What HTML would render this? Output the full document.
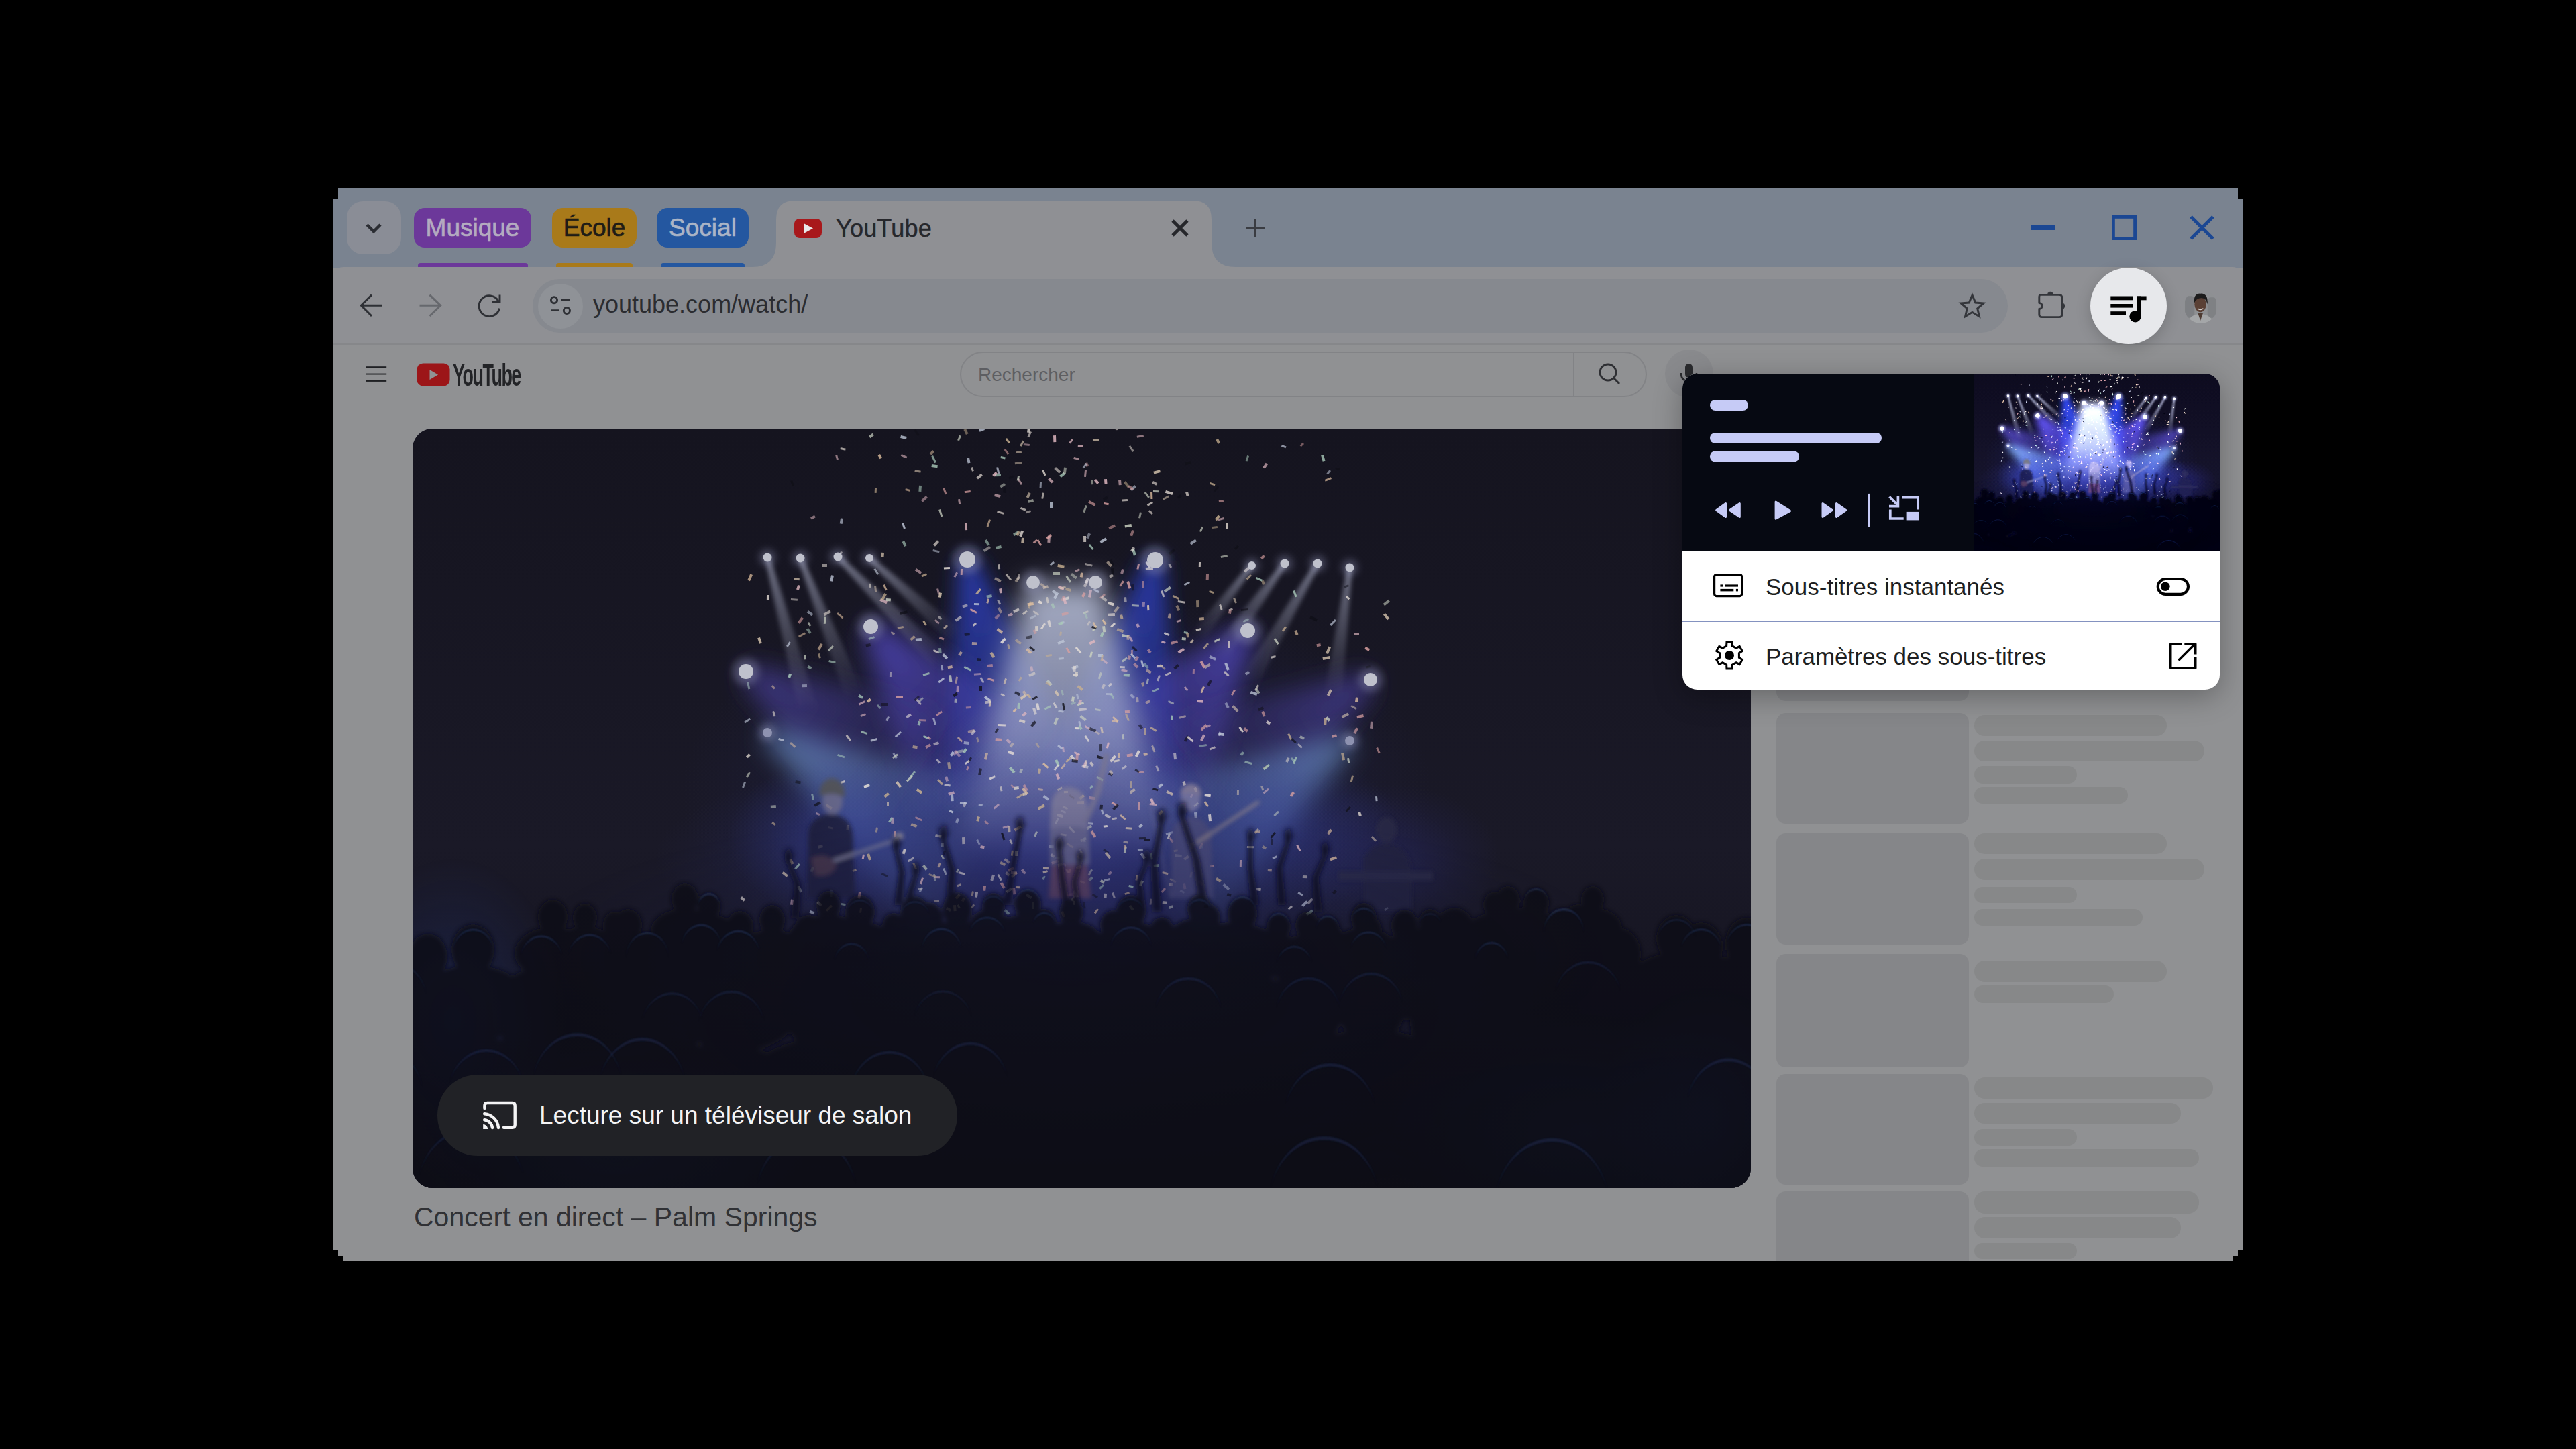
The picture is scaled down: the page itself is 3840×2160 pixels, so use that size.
<!DOCTYPE html>
<html><head><meta charset="utf-8">
<style>
*{margin:0;padding:0;box-sizing:border-box}
html,body{width:3840px;height:2160px;background:#000;overflow:hidden;font-family:"Liberation Sans",sans-serif}
.a{position:absolute}
.txt{white-space:nowrap}
#win{position:absolute;left:496px;top:280px;width:2848px;height:1600px;background:#909193;overflow:hidden;
clip-path:polygon(8px 0,2840px 0,2840px 16px,2848px 16px,2848px 1584px,2840px 1584px,2840px 1592px,2832px 1592px,2832px 1600px,16px 1600px,16px 1592px,8px 1592px,8px 1584px,0 1584px,0 16px,8px 16px)}
.chip{position:absolute;top:30px;height:59px;border-radius:16px;font-size:37px;line-height:59px;text-align:center;white-space:nowrap;-webkit-text-stroke:.7px currentColor}
.ul{position:absolute;top:112px;height:8px;border-radius:4px 4px 0 0}
.ln{left:2943px;background:#878889;border-radius:16px}
#popup{left:2508px;top:557px;width:801px;height:471px;border-radius:22px;overflow:hidden;background:#fff;box-shadow:0 10px 44px rgba(0,0,0,.3)}
</style></head><body>
<div id="win">
  <div class="a" style="left:0;top:0;width:2848px;height:120px;background:#7a8390">
    <div class="a" style="left:21px;top:20px;width:81px;height:79px;border-radius:24px;background:#8a8d96"></div>
    <div class="chip" style="left:121px;width:175px;background:#6c389a;color:#b4abc0">Musique</div>
    <div class="ul" style="left:127px;width:164px;background:#6c389a"></div>
    <div class="chip" style="left:327px;width:126px;background:#a97a1a;color:#1f1c16">École</div>
    <div class="ul" style="left:333px;width:114px;background:#a97a1a"></div>
    <div class="chip" style="left:483px;width:137px;background:#2457a0;color:#aab4c6">Social</div>
    <div class="ul" style="left:489px;width:125px;background:#2457a0"></div>
  </div>
  <div class="a" style="left:0;top:118px;width:2848px;height:115px;background:#8f9094;border-radius:16px 16px 0 0"></div>
  <div class="a" style="left:0;top:232px;width:2848px;height:1368px;background:#909193;border-top:2px solid #86878a"></div>
</div>
<!-- tab strip icons -->
<svg class="a" style="left:540px;top:325px" width="34" height="30" viewBox="0 0 34 30"><path d="M7 10 L17 20 L27 10" fill="none" stroke="#2b2d33" stroke-width="4.5"/></svg>
<div class="a tab" style="left:1121px;top:299px;width:721px;height:99px">
<svg width="721" height="99" viewBox="0 0 721 99"><path d="M0 99 Q36 99 36 63 L36 28 Q36 0 64 0 L657 0 Q685 0 685 28 L685 63 Q685 99 721 99 Z" fill="#8f9094"/></svg></div>
<svg class="a" style="left:1184px;top:326px" width="41" height="29" viewBox="0 0 41 29"><rect x="0" y="0" width="41" height="29" rx="8" fill="#a8181b"/><path d="M15 7.5 L28 14.5 L15 21.5Z" fill="#e9e9ea"/></svg>
<div class="a txt" style="left:1246px;top:323px;font-size:36px;line-height:36px;color:#26272b;letter-spacing:0.2px;-webkit-text-stroke:.5px currentColor">YouTube</div>
<svg class="a" style="left:1744px;top:325px" width="30" height="30" viewBox="0 0 30 30"><path d="M4 4 L26 26 M26 4 L4 26" stroke="#26272b" stroke-width="4.6"/></svg>
<svg class="a" style="left:1855px;top:324px" width="32" height="32" viewBox="0 0 32 32"><path d="M16 2 L16 30 M2 16 L30 16" stroke="#3a3c42" stroke-width="4"/></svg>
<svg class="a" style="left:3028px;top:336px" width="36" height="7"><rect width="36" height="7" fill="#1b4793"/></svg>
<svg class="a" style="left:3148px;top:321px" width="37" height="37" viewBox="0 0 37 37"><rect x="2.4" y="2.4" width="32.2" height="32.2" fill="none" stroke="#1b4793" stroke-width="4.8"/></svg>
<svg class="a" style="left:3264px;top:321px" width="37" height="37" viewBox="0 0 37 37"><path d="M2 2 L35 35 M35 2 L2 35" stroke="#1b4793" stroke-width="5"/></svg>
<!-- toolbar icons -->
<svg class="a" style="left:533px;top:437px" width="40" height="36" viewBox="0 0 40 36"><path d="M36.2 18.3 L5.5 18.3 M21 2.6 L5.3 18.3 L21 34" fill="none" stroke="#2e3035" stroke-width="2.9"/></svg>
<svg class="a" style="left:621px;top:437px" width="40" height="36" viewBox="0 0 40 36"><path d="M4.5 18.3 L35.5 18.3 M19.5 2.6 L35.7 18.3 L19.5 34" fill="none" stroke="#66686d" stroke-width="2.9"/></svg>
<svg class="a" style="left:709px;top:435px" width="40" height="40" viewBox="0 0 40 40"><path d="M35.5 24.6 A15.4 15.4 0 1 1 33.8 13.4" fill="none" stroke="#2e3035" stroke-width="2.9"/><path d="M36 4.6 L36 15.4 L24.8 15.4" fill="none" stroke="#2e3035" stroke-width="2.9"/></svg>
<div class="a" style="left:794px;top:416px;width:2199px;height:80px;border-radius:40px;background:#86898f"></div>
<div class="a" style="left:802px;top:423px;width:67px;height:67px;border-radius:50%;background:#8f9297"></div>
<svg class="a" style="left:818px;top:440px" width="36" height="32" viewBox="0 0 36 32"><circle cx="8" cy="7.2" r="4.6" fill="none" stroke="#2e3035" stroke-width="2.9"/><path d="M18.5 7.2 L31.8 7.2 M3 22.6 L15.7 22.6" stroke="#2e3035" stroke-width="2.9"/><circle cx="26.9" cy="23" r="4.6" fill="none" stroke="#2e3035" stroke-width="2.9"/></svg>
<div class="a txt" style="left:884px;top:436px;font-size:36px;line-height:36px;color:#2b2c30">youtube.com/watch/</div>
<svg class="a" style="left:2918px;top:434px" width="44" height="44" viewBox="0 0 24 24"><path d="M12 3.2 L14.6 9.3 L21.2 9.8 L16.2 14.1 L17.7 20.6 L12 17.1 L6.3 20.6 L7.8 14.1 L2.8 9.8 L9.4 9.3 Z" fill="none" stroke="#34363b" stroke-width="1.6" stroke-linejoin="miter"/></svg>
<svg class="a" style="left:3030px;top:428px" width="56" height="52" viewBox="0 0 56 52"><path d="M11.2 11.4 L39.6 11.4 Q43.8 11.4 43.8 15.6 L43.8 40.4 Q43.8 44.6 39.6 44.6 L14 44.6 Q9.8 44.6 9.8 40.4 L9.8 32.5 A4.5 4.5 0 0 0 9.8 23.5 L9.8 15.6 Q9.8 11.4 11.2 11.4Z" fill="none" stroke="#34363b" stroke-width="2.9" stroke-linejoin="round"/><path d="M21.9 11.4 A4.6 4.6 0 0 1 31.1 11.4Z" fill="#34363b"/><path d="M43.8 23.4 A4.6 4.6 0 0 1 43.8 32.6Z" fill="#34363b"/></svg>
<div class="a" style="left:3116px;top:399px;width:114px;height:114px;border-radius:50%;background:#e7e8eb;box-shadow:0 6px 22px rgba(0,0,0,.18)"></div>
<svg class="a" style="left:3140px;top:436px" width="66" height="52" viewBox="0 0 66 52"><rect x="6.3" y="5.5" width="33.2" height="5.8" fill="#000"/><rect x="6.3" y="17" width="33.2" height="5.6" fill="#000"/><rect x="6.3" y="28.2" width="22.7" height="5.8" fill="#000"/><rect x="45.6" y="5.5" width="14" height="5.8" fill="#000"/><rect x="45.6" y="5.5" width="5.8" height="31" fill="#000"/><circle cx="43" cy="35.7" r="8.7" fill="#000"/></svg>
<svg class="a" style="left:3255px;top:431px" width="51" height="51" viewBox="0 0 50 50"><defs><clipPath id="av"><circle cx="25.2" cy="25.2" r="24.6"/></clipPath><filter id="avb"><feGaussianBlur stdDeviation=".7"/></filter></defs><g clip-path="url(#av)" filter="url(#avb)"><rect width="50" height="50" fill="#8e9093"/><rect x="2" y="10" width="14" height="32" rx="5" fill="#7d7f83"/><rect x="35" y="12" width="13" height="30" rx="5" fill="#7f8184"/><path d="M5 52 Q8 37 24.5 36 Q41 37 45 52Z" fill="#a4a6a8"/><path d="M21 35 L24.6 46 L28.4 35Z" fill="#4e3a33"/><ellipse cx="24.6" cy="22" rx="8.6" ry="11.5" fill="#5a4036"/><path d="M15.5 21 Q14 6 25 6.5 Q36 6 35 22 Q33 13 26 13 Q18 13 15.5 21Z" fill="#1e1b1b"/><path d="M20.5 28.5 Q24.6 31.5 28.8 28.5 Q24.6 30 20.5 28.5Z" fill="#d8d4d2" stroke="#d8d4d2" stroke-width="1.2"/></g></svg>
<!-- content -->
<svg class="a" style="left:543px;top:544px" width="36" height="28"><rect x="2.2" y="2.2" width="31" height="1.9" fill="#1f2023"/><rect x="2.2" y="12.6" width="31" height="1.9" fill="#1f2023"/><rect x="2.2" y="23" width="31" height="1.9" fill="#1f2023"/></svg>
<svg class="a" style="left:621px;top:541px" width="50" height="35" viewBox="0 0 50 35"><rect x="0.5" y="0.5" width="49" height="34" rx="9" fill="#9c1518"/><path d="M19.5 10 L32 17.5 L19.5 25Z" fill="#909193"/></svg>
<div class="a txt" style="left:675px;top:536px;font-size:46px;line-height:46px;color:#232427;font-weight:bold;letter-spacing:-2.5px;transform:scaleX(.585);transform-origin:0 0">YouTube</div>
<div class="a" style="left:1431px;top:524px;width:1024px;height:68px;border-radius:34px;border:2px solid #828386"></div>
<div class="a" style="left:2345px;top:525px;width:2px;height:66px;background:#828386"></div>
<div class="a txt" style="left:1458px;top:545px;font-size:28px;line-height:28px;color:#5d5e62">Rechercher</div>
<svg class="a" style="left:2380px;top:538px" width="40" height="40" viewBox="0 0 40 40"><circle cx="17" cy="17" r="12" fill="none" stroke="#2e2f33" stroke-width="2.8"/><path d="M26 26 L34 34" stroke="#2e2f33" stroke-width="2.8"/></svg>
<div class="a" style="left:2482px;top:521px;width:72px;height:72px;border-radius:50%;background:#898a8d"></div>
<svg class="a" style="left:2500px;top:538px" width="36" height="40" viewBox="0 0 36 40"><rect x="12" y="4" width="11" height="21" rx="5.5" fill="#2a2b2e"/><path d="M6 18 Q6 30 17.5 30 Q29 30 29 18" fill="none" stroke="#2a2b2e" stroke-width="2.6"/></svg>
<div class="a" style="left:615px;top:639px;width:1995px;height:1132px;border-radius:30px;overflow:hidden;background:#15142a"><svg class="a" style="left:0;top:0" width="1995" height="1132" viewBox="0 0 1995 1132">
<defs><linearGradient id="bg" x1="0" y1="0" x2="0" y2="1"><stop offset="0" stop-color="#15141f"/><stop offset=".55" stop-color="#1a1927"/><stop offset=".8" stop-color="#151420"/><stop offset="1" stop-color="#111117"/></linearGradient>
<radialGradient id="rg" cx="0.5" cy="0.5" r="0.5"><stop offset="0" stop-color="#fff" stop-opacity="1"/><stop offset="1" stop-color="#fff" stop-opacity="0"/></radialGradient>
<filter id="b3" x="-50%" y="-50%" width="200%" height="200%"><feGaussianBlur stdDeviation="3"/></filter>
<filter id="b6" x="-50%" y="-50%" width="200%" height="200%"><feGaussianBlur stdDeviation="6"/></filter>
<filter id="b12" x="-50%" y="-50%" width="200%" height="200%"><feGaussianBlur stdDeviation="12"/></filter>
<filter id="b15" x="-50%" y="-50%" width="200%" height="200%"><feGaussianBlur stdDeviation="15"/></filter>
<filter id="b18" x="-50%" y="-50%" width="200%" height="200%"><feGaussianBlur stdDeviation="18"/></filter>
<filter id="b20" x="-50%" y="-50%" width="200%" height="200%"><feGaussianBlur stdDeviation="20"/></filter>
<filter id="b35" x="-50%" y="-50%" width="200%" height="200%"><feGaussianBlur stdDeviation="35"/></filter>
<filter id="b70" x="-50%" y="-50%" width="200%" height="200%"><feGaussianBlur stdDeviation="70"/></filter>
<filter id="b1" x="-50%" y="-50%" width="200%" height="200%"><feGaussianBlur stdDeviation="1"/></filter><radialGradient id="r1" cx="0.5" cy="0.5" r="0.5"><stop offset="0" stop-color="#2c2f80" stop-opacity="0.4"/><stop offset=".55" stop-color="#2c2f80" stop-opacity="0.180"/><stop offset="1" stop-color="#2c2f80" stop-opacity="0"/></radialGradient><radialGradient id="r2" cx="0.5" cy="0.5" r="0.5"><stop offset="0" stop-color="#3a43a0" stop-opacity="0.4"/><stop offset=".55" stop-color="#3a43a0" stop-opacity="0.180"/><stop offset="1" stop-color="#3a43a0" stop-opacity="0"/></radialGradient><linearGradient id="g3" gradientUnits="userSpaceOnUse" x1="827" y1="195" x2="900" y2="540"><stop offset="0" stop-color="#2c3eb8" stop-opacity="0.9"/><stop offset="1" stop-color="#2c3eb8" stop-opacity="0.25"/></linearGradient><linearGradient id="g4" gradientUnits="userSpaceOnUse" x1="1107" y1="196" x2="1040" y2="540"><stop offset="0" stop-color="#2c3eb8" stop-opacity="0.9"/><stop offset="1" stop-color="#2c3eb8" stop-opacity="0.25"/></linearGradient><linearGradient id="g5" gradientUnits="userSpaceOnUse" x1="683" y1="296" x2="860" y2="520"><stop offset="0" stop-color="#5248c0" stop-opacity="0.85"/><stop offset="1" stop-color="#5248c0" stop-opacity="0.15"/></linearGradient><linearGradient id="g6" gradientUnits="userSpaceOnUse" x1="1245" y1="301" x2="1070" y2="520"><stop offset="0" stop-color="#5248c0" stop-opacity="0.85"/><stop offset="1" stop-color="#5248c0" stop-opacity="0.15"/></linearGradient><linearGradient id="g7" gradientUnits="userSpaceOnUse" x1="497" y1="362" x2="740" y2="520"><stop offset="0" stop-color="#4e44a8" stop-opacity="0.7"/><stop offset="1" stop-color="#4e44a8" stop-opacity="0.08"/></linearGradient><linearGradient id="g8" gradientUnits="userSpaceOnUse" x1="1428" y1="374" x2="1190" y2="530"><stop offset="0" stop-color="#4e44a8" stop-opacity="0.7"/><stop offset="1" stop-color="#4e44a8" stop-opacity="0.08"/></linearGradient><linearGradient id="g9" gradientUnits="userSpaceOnUse" x1="529" y1="453" x2="830" y2="650"><stop offset="0" stop-color="#6a90c8" stop-opacity="0.7"/><stop offset="1" stop-color="#6a90c8" stop-opacity="0.12"/></linearGradient><linearGradient id="g10" gradientUnits="userSpaceOnUse" x1="1397" y1="465" x2="1110" y2="650"><stop offset="0" stop-color="#6a90c8" stop-opacity="0.7"/><stop offset="1" stop-color="#6a90c8" stop-opacity="0.12"/></linearGradient><linearGradient id="wc" x1="0" y1="0" x2="0" y2="1"><stop offset="0" stop-color="#c0c8e0" stop-opacity=".85"/><stop offset=".5" stop-color="#a8b0d0" stop-opacity=".7"/><stop offset="1" stop-color="#8088c0" stop-opacity=".35"/></linearGradient><radialGradient id="r12" cx="0.5" cy="0.5" r="0.5"><stop offset="0" stop-color="#8a90c0" stop-opacity="0.25"/><stop offset=".55" stop-color="#8a90c0" stop-opacity="0.113"/><stop offset="1" stop-color="#8a90c0" stop-opacity="0"/></radialGradient><linearGradient id="g13" gradientUnits="userSpaceOnUse" x1="529" y1="192" x2="590" y2="420"><stop offset="0" stop-color="#a8acc4" stop-opacity="0.6"/><stop offset="1" stop-color="#a8acc4" stop-opacity="0"/></linearGradient><linearGradient id="g14" gradientUnits="userSpaceOnUse" x1="578" y1="193" x2="660" y2="400"><stop offset="0" stop-color="#a8acc4" stop-opacity="0.6"/><stop offset="1" stop-color="#a8acc4" stop-opacity="0"/></linearGradient><linearGradient id="g15" gradientUnits="userSpaceOnUse" x1="634" y1="191" x2="790" y2="350"><stop offset="0" stop-color="#a8acc4" stop-opacity="0.6"/><stop offset="1" stop-color="#a8acc4" stop-opacity="0"/></linearGradient><linearGradient id="g16" gradientUnits="userSpaceOnUse" x1="681" y1="193" x2="810" y2="310"><stop offset="0" stop-color="#a8acc4" stop-opacity="0.6"/><stop offset="1" stop-color="#a8acc4" stop-opacity="0"/></linearGradient><linearGradient id="g17" gradientUnits="userSpaceOnUse" x1="1251" y1="204" x2="1170" y2="310"><stop offset="0" stop-color="#a8acc4" stop-opacity="0.6"/><stop offset="1" stop-color="#a8acc4" stop-opacity="0"/></linearGradient><linearGradient id="g18" gradientUnits="userSpaceOnUse" x1="1300" y1="201" x2="1200" y2="340"><stop offset="0" stop-color="#a8acc4" stop-opacity="0.6"/><stop offset="1" stop-color="#a8acc4" stop-opacity="0"/></linearGradient><linearGradient id="g19" gradientUnits="userSpaceOnUse" x1="1349" y1="201" x2="1245" y2="380"><stop offset="0" stop-color="#a8acc4" stop-opacity="0.6"/><stop offset="1" stop-color="#a8acc4" stop-opacity="0"/></linearGradient><linearGradient id="g20" gradientUnits="userSpaceOnUse" x1="1397" y1="207" x2="1372" y2="400"><stop offset="0" stop-color="#a8acc4" stop-opacity="0.6"/><stop offset="1" stop-color="#a8acc4" stop-opacity="0"/></linearGradient><radialGradient id="r21" cx="0.5" cy="0.5" r="0.5"><stop offset="0" stop-color="#343a90" stop-opacity="0.5"/><stop offset=".55" stop-color="#343a90" stop-opacity="0.225"/><stop offset="1" stop-color="#343a90" stop-opacity="0"/></radialGradient><radialGradient id="r22" cx="0.5" cy="0.5" r="0.5"><stop offset="0" stop-color="#3a46a8" stop-opacity="0.45"/><stop offset=".55" stop-color="#3a46a8" stop-opacity="0.203"/><stop offset="1" stop-color="#3a46a8" stop-opacity="0"/></radialGradient><radialGradient id="r23" cx="0.5" cy="0.5" r="0.5"><stop offset="0" stop-color="#3a46a8" stop-opacity="0.35"/><stop offset=".55" stop-color="#3a46a8" stop-opacity="0.158"/><stop offset="1" stop-color="#3a46a8" stop-opacity="0"/></radialGradient><radialGradient id="r24" cx="0.5" cy="0.5" r="0.5"><stop offset="0" stop-color="#2c2c78" stop-opacity="0.35"/><stop offset=".55" stop-color="#2c2c78" stop-opacity="0.158"/><stop offset="1" stop-color="#2c2c78" stop-opacity="0"/></radialGradient><linearGradient id="cb" x1="0" y1="0" x2="0" y2="1"><stop offset="0" stop-color="#202350" stop-opacity="0"/><stop offset=".15" stop-color="#202350" stop-opacity=".55"/><stop offset=".5" stop-color="#1a1c3a" stop-opacity=".5"/><stop offset="1" stop-color="#121220" stop-opacity=".3"/></linearGradient><radialGradient id="r26" cx="0.5" cy="0.5" r="0.5"><stop offset="0" stop-color="#202350" stop-opacity="0.55"/><stop offset=".55" stop-color="#202350" stop-opacity="0.248"/><stop offset="1" stop-color="#202350" stop-opacity="0"/></radialGradient><radialGradient id="r27" cx="0.5" cy="0.5" r="0.5"><stop offset="0" stop-color="#181a34" stop-opacity="0.35"/><stop offset=".55" stop-color="#181a34" stop-opacity="0.158"/><stop offset="1" stop-color="#181a34" stop-opacity="0"/></radialGradient><radialGradient id="r28" cx="0.5" cy="0.5" r="0.5"><stop offset="0" stop-color="#1e3a70" stop-opacity="0.35"/><stop offset=".55" stop-color="#1e3a70" stop-opacity="0.158"/><stop offset="1" stop-color="#1e3a70" stop-opacity="0"/></radialGradient><radialGradient id="r29" cx="0.5" cy="0.5" r="0.5"><stop offset="0" stop-color="#2a44a0" stop-opacity="0.3"/><stop offset=".55" stop-color="#2a44a0" stop-opacity="0.135"/><stop offset="1" stop-color="#2a44a0" stop-opacity="0"/></radialGradient><radialGradient id="r30" cx="0.5" cy="0.5" r="0.5"><stop offset="0" stop-color="#2a44a0" stop-opacity="0.25"/><stop offset=".55" stop-color="#2a44a0" stop-opacity="0.113"/><stop offset="1" stop-color="#2a44a0" stop-opacity="0"/></radialGradient><radialGradient id="r31" cx="0.5" cy="0.5" r="0.5"><stop offset="0" stop-color="#1e3a70" stop-opacity="0.3"/><stop offset=".55" stop-color="#1e3a70" stop-opacity="0.135"/><stop offset="1" stop-color="#1e3a70" stop-opacity="0"/></radialGradient></defs>
<g id="concert">
<rect width="1995" height="1132" fill="url(#bg)"/>
<ellipse cx="960" cy="540" rx="560" ry="300" fill="url(#r1)"/>
<ellipse cx="960" cy="620" rx="430" ry="160" fill="url(#r2)"/>
<polygon points="814.3,197.7 792.4,562.8 1007.6,517.2 839.7,192.3" fill="url(#g3)" filter="url(#b15)"/>
<polygon points="1094.2,193.5 932.0,519.0 1148.0,561.0 1119.8,198.5" fill="url(#g4)" filter="url(#b15)"/>
<polygon points="672.8,304.1 761.9,597.5 958.1,442.5 693.2,287.9" fill="url(#g5)" filter="url(#b18)"/>
<polygon points="1234.8,292.9 972.3,442.0 1167.7,598.0 1255.2,309.1" fill="url(#g6)" filter="url(#b18)"/>
<polygon points="490.5,372.1 677.3,616.4 802.7,423.6 503.5,351.9" fill="url(#g7)" filter="url(#b18)"/>
<polygon points="1421.4,364.0 1127.0,433.8 1253.0,626.2 1434.6,384.0" fill="url(#g8)" filter="url(#b18)"/>
<polygon points="523.0,462.2 761.5,754.6 898.5,545.4 535.0,443.8" fill="url(#g9)" filter="url(#b18)"/>
<polygon points="1391.0,455.8 1042.3,544.9 1177.7,755.1 1403.0,474.2" fill="url(#g10)" filter="url(#b18)"/>
<polygon points="915,232 1030,232 1130,620 815,620" fill="url(#wc)" filter="url(#b20)"/>
<ellipse cx="972" cy="520" rx="200" ry="160" fill="url(#r12)"/>
<polygon points="525.1,193.0 576.5,423.6 603.5,416.4 532.9,191.0" fill="url(#g13)" filter="url(#b3)"/>
<polygon points="574.3,194.5 647.0,405.2 673.0,394.8 581.7,191.5" fill="url(#g14)" filter="url(#b3)"/>
<polygon points="631.1,193.8 779.3,360.5 800.7,339.5 636.9,188.2" fill="url(#g15)" filter="url(#b3)"/>
<polygon points="678.3,196.0 801.3,319.6 818.7,300.4 683.7,190.0" fill="url(#g16)" filter="url(#b3)"/>
<polygon points="1247.8,201.6 1161.3,303.3 1178.7,316.7 1254.2,206.4" fill="url(#g17)" filter="url(#b3)"/>
<polygon points="1296.8,198.7 1188.6,331.8 1211.4,348.2 1303.2,203.3" fill="url(#g18)" filter="url(#b3)"/>
<polygon points="1345.5,199.0 1232.9,373.0 1257.1,387.0 1352.5,203.0" fill="url(#g19)" filter="url(#b3)"/>
<polygon points="1393.0,206.5 1359.1,398.3 1384.9,401.7 1401.0,207.5" fill="url(#g20)" filter="url(#b3)"/>
<ellipse cx="960" cy="640" rx="600" ry="170" fill="url(#r21)"/>
<ellipse cx="640" cy="610" rx="170" ry="120" fill="url(#r22)"/>
<ellipse cx="1300" cy="600" rx="170" ry="120" fill="url(#r23)"/>
<ellipse cx="1460" cy="640" rx="160" ry="110" fill="url(#r24)"/>
<rect x="1232" y="538" width="8" height="3" fill="#d9c7b0" opacity="0.53" transform="rotate(91 1232 538)"/>
<rect x="1096" y="487" width="6" height="4" fill="#e0c0a0" opacity="0.72" transform="rotate(171 1096 487)"/>
<rect x="1296" y="24" width="7" height="3" fill="#c0c8d8" opacity="0.70" transform="rotate(21 1296 24)"/>
<rect x="1006" y="497" width="10" height="4" fill="#e0b8c0" opacity="0.74" transform="rotate(111 1006 497)"/>
<rect x="1065" y="504" width="8" height="3" fill="#e8e0d8" opacity="0.53" transform="rotate(143 1065 504)"/>
<rect x="820" y="209" width="9" height="3" fill="#d8a0a0" opacity="0.76" transform="rotate(92 820 209)"/>
<rect x="1147" y="101" width="6" height="4" fill="#101018" opacity="0.78" transform="rotate(138 1147 101)"/>
<rect x="537" y="382" width="6" height="3" fill="#e0c0a0" opacity="0.52" transform="rotate(49 537 382)"/>
<rect x="974" y="501" width="9" height="3" fill="#e0c0a0" opacity="0.62" transform="rotate(129 974 501)"/>
<rect x="797" y="518" width="7" height="4" fill="#e0b8c0" opacity="0.53" transform="rotate(72 797 518)"/>
<rect x="972" y="318" width="10" height="4" fill="#c0c8d8" opacity="0.75" transform="rotate(156 972 318)"/>
<rect x="838" y="710" width="6" height="3" fill="#d9c7b0" opacity="0.67" transform="rotate(119 838 710)"/>
<rect x="1084" y="202" width="8" height="3" fill="#d8a0a0" opacity="0.74" transform="rotate(102 1084 202)"/>
<rect x="929" y="366" width="10" height="4" fill="#d8d0c8" opacity="0.64" transform="rotate(157 929 366)"/>
<rect x="893" y="530" width="6" height="3" fill="#d8a0a0" opacity="0.54" transform="rotate(38 893 530)"/>
<rect x="831" y="308" width="8" height="4" fill="#101018" opacity="0.63" transform="rotate(172 831 308)"/>
<rect x="1189" y="80" width="8" height="3" fill="#c8b090" opacity="0.76" transform="rotate(18 1189 80)"/>
<rect x="953" y="339" width="9" height="3" fill="#c8b090" opacity="0.55" transform="rotate(171 953 339)"/>
<rect x="1439" y="475" width="9" height="3" fill="#d8a0a0" opacity="0.62" transform="rotate(66 1439 475)"/>
<rect x="911" y="153" width="9" height="4" fill="#e8e0d8" opacity="0.78" transform="rotate(110 911 153)"/>
<rect x="1007" y="587" width="8" height="3" fill="#c0c8d8" opacity="0.67" transform="rotate(5 1007 587)"/>
<rect x="1204" y="131" width="8" height="4" fill="#c8b090" opacity="0.83" transform="rotate(130 1204 131)"/>
<rect x="1018" y="318" width="9" height="4" fill="#e0b8c0" opacity="0.82" transform="rotate(151 1018 318)"/>
<rect x="1118" y="241" width="10" height="3" fill="#e8e0d8" opacity="0.67" transform="rotate(70 1118 241)"/>
<rect x="787" y="120" width="11" height="3" fill="#c9d0c0" opacity="0.75" transform="rotate(72 787 120)"/>
<rect x="1339" y="279" width="11" height="4" fill="#101018" opacity="0.84" transform="rotate(26 1339 279)"/>
<rect x="993" y="485" width="11" height="4" fill="#d8a0a0" opacity="0.65" transform="rotate(95 993 485)"/>
<rect x="995" y="626" width="7" height="3" fill="#e8e0d8" opacity="0.77" transform="rotate(53 995 626)"/>
<rect x="1008" y="228" width="10" height="4" fill="#d8d0c8" opacity="0.65" transform="rotate(119 1008 228)"/>
<rect x="892" y="660" width="9" height="4" fill="#e0b8c0" opacity="0.77" transform="rotate(3 892 660)"/>
<rect x="1043" y="434" width="9" height="3" fill="#e0c0a0" opacity="0.68" transform="rotate(11 1043 434)"/>
<rect x="1072" y="395" width="7" height="4" fill="#c0c8d8" opacity="0.51" transform="rotate(45 1072 395)"/>
<rect x="1382" y="61" width="6" height="3" fill="#101018" opacity="0.68" transform="rotate(175 1382 61)"/>
<rect x="1054" y="496" width="9" height="3" fill="#d8d0c8" opacity="0.81" transform="rotate(169 1054 496)"/>
<rect x="1396" y="491" width="7" height="3" fill="#c9d0c0" opacity="0.73" transform="rotate(80 1396 491)"/>
<rect x="805" y="357" width="7" height="4" fill="#e0c0a0" opacity="0.73" transform="rotate(169 805 357)"/>
<rect x="1103" y="94" width="11" height="3" fill="#e0c0a0" opacity="0.79" transform="rotate(88 1103 94)"/>
<rect x="931" y="468" width="8" height="3" fill="#c8b090" opacity="0.51" transform="rotate(57 931 468)"/>
<rect x="801" y="209" width="9" height="3" fill="#e8e0d8" opacity="0.84" transform="rotate(177 801 209)"/>
<rect x="1258" y="221" width="10" height="3" fill="#a8c8b8" opacity="0.80" transform="rotate(23 1258 221)"/>
<rect x="718" y="483" width="9" height="3" fill="#c0c8d8" opacity="0.52" transform="rotate(59 718 483)"/>
<rect x="1131" y="238" width="11" height="4" fill="#c9d0c0" opacity="0.71" transform="rotate(144 1131 238)"/>
<rect x="1021" y="295" width="9" height="3" fill="#c9d0c0" opacity="0.84" transform="rotate(128 1021 295)"/>
<rect x="761" y="685" width="7" height="3" fill="#c0c8d8" opacity="0.62" transform="rotate(121 761 685)"/>
<rect x="751" y="208" width="10" height="4" fill="#e0b8c0" opacity="0.59" transform="rotate(34 751 208)"/>
<rect x="759" y="316" width="9" height="4" fill="#c0c8d8" opacity="0.74" transform="rotate(175 759 316)"/>
<rect x="681" y="633" width="10" height="4" fill="#c8b090" opacity="0.84" transform="rotate(73 681 633)"/>
<rect x="1151" y="525" width="6" height="4" fill="#d8d0c8" opacity="0.73" transform="rotate(69 1151 525)"/>
<rect x="790" y="352" width="8" height="3" fill="#c0c8d8" opacity="0.63" transform="rotate(80 790 352)"/>
<rect x="937" y="230" width="10" height="3" fill="#c8b090" opacity="0.63" transform="rotate(33 937 230)"/>
<rect x="1022" y="336" width="7" height="4" fill="#c0c8d8" opacity="0.79" transform="rotate(1 1022 336)"/>
<rect x="832" y="95" width="9" height="3" fill="#d8a0a0" opacity="0.73" transform="rotate(172 832 95)"/>
<rect x="1090" y="513" width="8" height="3" fill="#d8a0a0" opacity="0.60" transform="rotate(177 1090 513)"/>
<rect x="902" y="629" width="8" height="4" fill="#d8d0c8" opacity="0.76" transform="rotate(91 902 629)"/>
<rect x="684" y="405" width="6" height="4" fill="#e0c0a0" opacity="0.83" transform="rotate(144 684 405)"/>
<rect x="569" y="222" width="8" height="3" fill="#d9c7b0" opacity="0.72" transform="rotate(9 569 222)"/>
<rect x="504" y="487" width="6" height="4" fill="#d8d0c8" opacity="0.81" transform="rotate(135 504 487)"/>
<rect x="959" y="57" width="10" height="4" fill="#e8e0d8" opacity="0.58" transform="rotate(42 959 57)"/>
<rect x="693" y="464" width="10" height="3" fill="#c0c8d8" opacity="0.77" transform="rotate(164 693 464)"/>
<rect x="1085" y="440" width="7" height="4" fill="#101018" opacity="0.55" transform="rotate(55 1085 440)"/>
<rect x="1028" y="342" width="11" height="3" fill="#e0b8c0" opacity="0.60" transform="rotate(39 1028 342)"/>
<rect x="847" y="367" width="10" height="3" fill="#e0b8c0" opacity="0.51" transform="rotate(176 847 367)"/>
<rect x="990" y="325" width="11" height="3" fill="#e8e0d8" opacity="0.82" transform="rotate(48 990 325)"/>
<rect x="962" y="247" width="8" height="4" fill="#c0c8d8" opacity="0.81" transform="rotate(114 962 247)"/>
<rect x="778" y="667" width="8" height="3" fill="#e0b8c0" opacity="0.74" transform="rotate(1 778 667)"/>
<rect x="763" y="286" width="7" height="3" fill="#c8b090" opacity="0.79" transform="rotate(58 763 286)"/>
<rect x="1063" y="78" width="10" height="4" fill="#c8b090" opacity="0.52" transform="rotate(52 1063 78)"/>
<rect x="1450" y="275" width="10" height="4" fill="#d9c7b0" opacity="0.79" transform="rotate(51 1450 275)"/>
<rect x="1175" y="199" width="7" height="3" fill="#e8e0d8" opacity="0.77" transform="rotate(92 1175 199)"/>
<rect x="983" y="215" width="10" height="4" fill="#c9d0c0" opacity="0.52" transform="rotate(37 983 215)"/>
<rect x="723" y="525" width="10" height="4" fill="#d9c7b0" opacity="0.82" transform="rotate(52 723 525)"/>
<rect x="928" y="416" width="10" height="4" fill="#e8e0d8" opacity="0.61" transform="rotate(73 928 416)"/>
<rect x="1146" y="287" width="7" height="3" fill="#e0b8c0" opacity="0.69" transform="rotate(163 1146 287)"/>
<rect x="694" y="595" width="7" height="3" fill="#c8b090" opacity="0.58" transform="rotate(100 694 595)"/>
<rect x="1076" y="179" width="10" height="4" fill="#a8c8b8" opacity="0.76" transform="rotate(74 1076 179)"/>
<rect x="651" y="591" width="8" height="4" fill="#e8e0d8" opacity="0.53" transform="rotate(95 651 591)"/>
<rect x="969" y="536" width="8" height="3" fill="#d9c7b0" opacity="0.54" transform="rotate(147 969 536)"/>
<rect x="1176" y="300" width="8" height="3" fill="#d8d0c8" opacity="0.80" transform="rotate(167 1176 300)"/>
<rect x="768" y="103" width="10" height="4" fill="#e0b8c0" opacity="0.53" transform="rotate(138 768 103)"/>
<rect x="1292" y="572" width="9" height="3" fill="#c9d0c0" opacity="0.52" transform="rotate(137 1292 572)"/>
<rect x="886" y="373" width="8" height="3" fill="#d9c7b0" opacity="0.69" transform="rotate(108 886 373)"/>
<rect x="1060" y="365" width="9" height="4" fill="#a8c8b8" opacity="0.75" transform="rotate(5 1060 365)"/>
<rect x="814" y="459" width="9" height="3" fill="#e0c0a0" opacity="0.65" transform="rotate(46 814 459)"/>
<rect x="837" y="260" width="8" height="3" fill="#c0c8d8" opacity="0.76" transform="rotate(1 837 260)"/>
<rect x="605" y="704" width="8" height="4" fill="#e8e0d8" opacity="0.59" transform="rotate(42 605 704)"/>
<rect x="571" y="524" width="8" height="4" fill="#101018" opacity="0.55" transform="rotate(10 571 524)"/>
<rect x="639" y="707" width="7" height="3" fill="#a8c8b8" opacity="0.66" transform="rotate(11 639 707)"/>
<rect x="1092" y="259" width="7" height="4" fill="#e0b8c0" opacity="0.51" transform="rotate(94 1092 259)"/>
<rect x="1034" y="394" width="8" height="3" fill="#c0c8d8" opacity="0.53" transform="rotate(1 1034 394)"/>
<rect x="590" y="297" width="8" height="4" fill="#a8c8b8" opacity="0.53" transform="rotate(56 590 297)"/>
<rect x="813" y="482" width="8" height="3" fill="#e0b8c0" opacity="0.51" transform="rotate(133 813 482)"/>
<rect x="972" y="290" width="6" height="3" fill="#c0c8d8" opacity="0.57" transform="rotate(166 972 290)"/>
<rect x="908" y="36" width="8" height="3" fill="#d9c7b0" opacity="0.59" transform="rotate(172 908 36)"/>
<rect x="1368" y="343" width="11" height="4" fill="#d9c7b0" opacity="0.79" transform="rotate(170 1368 343)"/>
<rect x="973" y="68" width="8" height="4" fill="#a8c8b8" opacity="0.79" transform="rotate(142 973 68)"/>
<rect x="995" y="211" width="7" height="3" fill="#e0b8c0" opacity="0.63" transform="rotate(155 995 211)"/>
<rect x="968" y="303" width="6" height="3" fill="#c8b090" opacity="0.56" transform="rotate(99 968 303)"/>
<rect x="784" y="238" width="9" height="3" fill="#e0b8c0" opacity="0.56" transform="rotate(76 784 238)"/>
<rect x="1079" y="87" width="9" height="4" fill="#c0c8d8" opacity="0.60" transform="rotate(137 1079 87)"/>
<rect x="854" y="584" width="7" height="3" fill="#d8a0a0" opacity="0.60" transform="rotate(44 854 584)"/>
<rect x="963" y="234" width="9" height="4" fill="#e0b8c0" opacity="0.85" transform="rotate(18 963 234)"/>
<rect x="1115" y="65" width="10" height="4" fill="#d9c7b0" opacity="0.81" transform="rotate(165 1115 65)"/>
<rect x="1039" y="512" width="6" height="4" fill="#101018" opacity="0.59" transform="rotate(32 1039 512)"/>
<rect x="826" y="558" width="7" height="4" fill="#e8e0d8" opacity="0.51" transform="rotate(112 826 558)"/>
<rect x="1343" y="720" width="11" height="4" fill="#a8c8b8" opacity="0.74" transform="rotate(147 1343 720)"/>
<rect x="1058" y="306" width="10" height="4" fill="#c9d0c0" opacity="0.78" transform="rotate(11 1058 306)"/>
<rect x="827" y="478" width="7" height="4" fill="#a8c8b8" opacity="0.83" transform="rotate(120 827 478)"/>
<rect x="767" y="218" width="8" height="3" fill="#c8b090" opacity="0.73" transform="rotate(156 767 218)"/>
<rect x="837" y="690" width="7" height="3" fill="#c8b090" opacity="0.66" transform="rotate(104 837 690)"/>
<rect x="1021" y="487" width="9" height="4" fill="#101018" opacity="0.82" transform="rotate(16 1021 487)"/>
<rect x="1043" y="381" width="6" height="3" fill="#e8e0d8" opacity="0.61" transform="rotate(136 1043 381)"/>
<rect x="1090" y="675" width="8" height="4" fill="#c9d0c0" opacity="0.82" transform="rotate(115 1090 675)"/>
<rect x="1190" y="443" width="7" height="3" fill="#e0b8c0" opacity="0.56" transform="rotate(152 1190 443)"/>
<rect x="1321" y="469" width="8" height="3" fill="#e8e0d8" opacity="0.51" transform="rotate(44 1321 469)"/>
<rect x="1410" y="401" width="7" height="4" fill="#e0c0a0" opacity="0.77" transform="rotate(99 1410 401)"/>
<rect x="1074" y="330" width="8" height="3" fill="#d8a0a0" opacity="0.51" transform="rotate(91 1074 330)"/>
<rect x="1003" y="442" width="10" height="3" fill="#e0b8c0" opacity="0.64" transform="rotate(32 1003 442)"/>
<rect x="1371" y="390" width="10" height="4" fill="#d9c7b0" opacity="0.72" transform="rotate(118 1371 390)"/>
<rect x="1006" y="50" width="6" height="4" fill="#d8a0a0" opacity="0.51" transform="rotate(68 1006 50)"/>
<rect x="729" y="38" width="9" height="3" fill="#e0b8c0" opacity="0.60" transform="rotate(24 729 38)"/>
<rect x="815" y="582" width="7" height="4" fill="#c0c8d8" opacity="0.56" transform="rotate(110 815 582)"/>
<rect x="612" y="624" width="7" height="4" fill="#e8e0d8" opacity="0.71" transform="rotate(166 612 624)"/>
<rect x="1042" y="394" width="9" height="3" fill="#a8c8b8" opacity="0.56" transform="rotate(59 1042 394)"/>
<rect x="1197" y="476" width="9" height="3" fill="#d8d0c8" opacity="0.68" transform="rotate(157 1197 476)"/>
<rect x="961" y="493" width="10" height="4" fill="#a8c8b8" opacity="0.85" transform="rotate(67 961 493)"/>
<rect x="1262" y="598" width="8" height="3" fill="#d9c7b0" opacity="0.60" transform="rotate(134 1262 598)"/>
<rect x="1343" y="702" width="10" height="4" fill="#e8e0d8" opacity="0.55" transform="rotate(134 1343 702)"/>
<rect x="564" y="467" width="10" height="3" fill="#e0c0a0" opacity="0.52" transform="rotate(41 564 467)"/>
<rect x="884" y="30" width="9" height="3" fill="#d8a0a0" opacity="0.57" transform="rotate(54 884 30)"/>
<rect x="1241" y="445" width="7" height="4" fill="#d8a0a0" opacity="0.66" transform="rotate(44 1241 445)"/>
<rect x="911" y="546" width="11" height="3" fill="#c8b090" opacity="0.71" transform="rotate(148 911 546)"/>
<rect x="1400" y="412" width="9" height="3" fill="#d9c7b0" opacity="0.52" transform="rotate(30 1400 412)"/>
<rect x="1354" y="324" width="6" height="4" fill="#d8a0a0" opacity="0.64" transform="rotate(169 1354 324)"/>
<rect x="1115" y="368" width="9" height="3" fill="#d8d0c8" opacity="0.61" transform="rotate(110 1115 368)"/>
<rect x="1043" y="662" width="6" height="4" fill="#e0b8c0" opacity="0.53" transform="rotate(134 1043 662)"/>
<rect x="593" y="718" width="7" height="4" fill="#c0c8d8" opacity="0.75" transform="rotate(22 593 718)"/>
<rect x="641" y="184" width="9" height="3" fill="#e8e0d8" opacity="0.53" transform="rotate(116 641 184)"/>
<rect x="1130" y="670" width="10" height="3" fill="#c8b090" opacity="0.57" transform="rotate(29 1130 670)"/>
<rect x="624" y="274" width="11" height="4" fill="#d8d0c8" opacity="0.66" transform="rotate(151 624 274)"/>
<rect x="1287" y="603" width="10" height="3" fill="#101018" opacity="0.81" transform="rotate(130 1287 603)"/>
<rect x="830" y="504" width="6" height="3" fill="#d8a0a0" opacity="0.62" transform="rotate(112 830 504)"/>
<rect x="906" y="222" width="9" height="4" fill="#d9c7b0" opacity="0.52" transform="rotate(125 906 222)"/>
<rect x="1179" y="625" width="6" height="4" fill="#a8c8b8" opacity="0.54" transform="rotate(165 1179 625)"/>
<rect x="507" y="218" width="10" height="4" fill="#e0c0a0" opacity="0.72" transform="rotate(114 507 218)"/>
<rect x="843" y="612" width="8" height="3" fill="#c0c8d8" opacity="0.52" transform="rotate(63 843 612)"/>
<rect x="806" y="545" width="10" height="4" fill="#c0c8d8" opacity="0.72" transform="rotate(86 806 545)"/>
<rect x="997" y="427" width="10" height="4" fill="#c9d0c0" opacity="0.70" transform="rotate(39 997 427)"/>
<rect x="746" y="472" width="7" height="4" fill="#c8b090" opacity="0.67" transform="rotate(10 746 472)"/>
<rect x="1077" y="349" width="8" height="4" fill="#d8a0a0" opacity="0.60" transform="rotate(47 1077 349)"/>
<rect x="1179" y="147" width="8" height="3" fill="#c9d0c0" opacity="0.67" transform="rotate(115 1179 147)"/>
<rect x="1134" y="714" width="6" height="4" fill="#c9d0c0" opacity="0.65" transform="rotate(161 1134 714)"/>
<rect x="1095" y="358" width="8" height="4" fill="#e0c0a0" opacity="0.58" transform="rotate(31 1095 358)"/>
<rect x="976" y="326" width="9" height="3" fill="#d8a0a0" opacity="0.80" transform="rotate(59 976 326)"/>
<rect x="564" y="319" width="8" height="3" fill="#c0c8d8" opacity="0.70" transform="rotate(124 564 319)"/>
<rect x="1076" y="82" width="7" height="3" fill="#101018" opacity="0.55" transform="rotate(127 1076 82)"/>
<rect x="848" y="370" width="9" height="3" fill="#e8e0d8" opacity="0.59" transform="rotate(59 848 370)"/>
<rect x="1145" y="687" width="7" height="3" fill="#c0c8d8" opacity="0.76" transform="rotate(27 1145 687)"/>
<rect x="1267" y="532" width="7" height="3" fill="#d9c7b0" opacity="0.50" transform="rotate(70 1267 532)"/>
<rect x="1165" y="316" width="6" height="3" fill="#d9c7b0" opacity="0.76" transform="rotate(133 1165 316)"/>
<rect x="941" y="498" width="10" height="3" fill="#e0c0a0" opacity="0.81" transform="rotate(41 941 498)"/>
<rect x="1182" y="555" width="9" height="3" fill="#e0c0a0" opacity="0.75" transform="rotate(56 1182 555)"/>
<rect x="675" y="408" width="10" height="3" fill="#e0b8c0" opacity="0.66" transform="rotate(153 675 408)"/>
<rect x="1103" y="551" width="9" height="4" fill="#e0b8c0" opacity="0.82" transform="rotate(70 1103 551)"/>
<rect x="900" y="313" width="10" height="4" fill="#c8b090" opacity="0.54" transform="rotate(36 900 313)"/>
<rect x="906" y="409" width="9" height="4" fill="#a8c8b8" opacity="0.76" transform="rotate(94 906 409)"/>
<rect x="683" y="324" width="7" height="4" fill="#101018" opacity="0.62" transform="rotate(168 683 324)"/>
<rect x="1214" y="408" width="8" height="4" fill="#c0c8d8" opacity="0.54" transform="rotate(63 1214 408)"/>
<rect x="986" y="696" width="11" height="4" fill="#e0b8c0" opacity="0.57" transform="rotate(173 986 696)"/>
<rect x="1069" y="84" width="8" height="4" fill="#d8a0a0" opacity="0.62" transform="rotate(41 1069 84)"/>
<rect x="648" y="456" width="10" height="3" fill="#d8d0c8" opacity="0.73" transform="rotate(53 648 456)"/>
<rect x="1001" y="559" width="10" height="4" fill="#e0c0a0" opacity="0.57" transform="rotate(177 1001 559)"/>
<rect x="823" y="-8" width="7" height="3" fill="#e0b8c0" opacity="0.67" transform="rotate(54 823 -8)"/>
<rect x="1082" y="666" width="8" height="3" fill="#c8b090" opacity="0.77" transform="rotate(102 1082 666)"/>
<rect x="1104" y="92" width="9" height="3" fill="#c9d0c0" opacity="0.73" transform="rotate(2 1104 92)"/>
<rect x="1008" y="274" width="8" height="3" fill="#d8d0c8" opacity="0.56" transform="rotate(163 1008 274)"/>
<rect x="1378" y="641" width="10" height="4" fill="#e0c0a0" opacity="0.79" transform="rotate(161 1378 641)"/>
<rect x="642" y="134" width="8" height="4" fill="#c0c8d8" opacity="0.65" transform="rotate(100 642 134)"/>
<rect x="889" y="594" width="9" height="3" fill="#e0b8c0" opacity="0.59" transform="rotate(163 889 594)"/>
<rect x="954" y="110" width="8" height="4" fill="#c0c8d8" opacity="0.79" transform="rotate(90 954 110)"/>
<rect x="824" y="700" width="6" height="4" fill="#d9c7b0" opacity="0.51" transform="rotate(115 824 700)"/>
<rect x="1329" y="23" width="6" height="3" fill="#d8a0a0" opacity="0.51" transform="rotate(136 1329 23)"/>
<rect x="962" y="514" width="8" height="4" fill="#e0b8c0" opacity="0.77" transform="rotate(66 962 514)"/>
<rect x="918" y="395" width="7" height="3" fill="#c8b090" opacity="0.79" transform="rotate(52 918 395)"/>
<rect x="1180" y="285" width="7" height="4" fill="#e0c0a0" opacity="0.67" transform="rotate(175 1180 285)"/>
<rect x="1413" y="571" width="6" height="4" fill="#d8d0c8" opacity="0.81" transform="rotate(72 1413 571)"/>
<rect x="1428" y="356" width="6" height="3" fill="#101018" opacity="0.77" transform="rotate(166 1428 356)"/>
<rect x="778" y="34" width="7" height="4" fill="#e0c0a0" opacity="0.53" transform="rotate(124 778 34)"/>
<rect x="912" y="19" width="9" height="3" fill="#d9c7b0" opacity="0.65" transform="rotate(119 912 19)"/>
<rect x="1369" y="63" width="7" height="3" fill="#c0c8d8" opacity="0.56" transform="rotate(128 1369 63)"/>
<rect x="1006" y="494" width="9" height="4" fill="#d8d0c8" opacity="0.51" transform="rotate(90 1006 494)"/>
<rect x="566" y="77" width="8" height="3" fill="#101018" opacity="0.85" transform="rotate(70 566 77)"/>
<rect x="720" y="600" width="9" height="3" fill="#d8a0a0" opacity="0.72" transform="rotate(85 720 600)"/>
<rect x="1438" y="548" width="7" height="3" fill="#c0c8d8" opacity="0.75" transform="rotate(85 1438 548)"/>
<rect x="932" y="167" width="7" height="3" fill="#d8a0a0" opacity="0.76" transform="rotate(139 932 167)"/>
<rect x="909" y="52" width="11" height="3" fill="#d9c7b0" opacity="0.50" transform="rotate(174 909 52)"/>
<rect x="750" y="1" width="10" height="3" fill="#101018" opacity="0.56" transform="rotate(56 750 1)"/>
<rect x="1179" y="619" width="9" height="3" fill="#d8a0a0" opacity="0.84" transform="rotate(122 1179 619)"/>
<rect x="1035" y="75" width="7" height="4" fill="#e0b8c0" opacity="0.83" transform="rotate(86 1035 75)"/>
<rect x="943" y="563" width="11" height="4" fill="#c8b090" opacity="0.80" transform="rotate(149 943 563)"/>
<rect x="1047" y="279" width="10" height="4" fill="#e8e0d8" opacity="0.63" transform="rotate(176 1047 279)"/>
<rect x="1311" y="490" width="7" height="3" fill="#a8c8b8" opacity="0.56" transform="rotate(47 1311 490)"/>
<rect x="700" y="662" width="10" height="3" fill="#101018" opacity="0.55" transform="rotate(25 700 662)"/>
<rect x="568" y="702" width="8" height="4" fill="#e0b8c0" opacity="0.78" transform="rotate(97 568 702)"/>
<rect x="862" y="136" width="11" height="3" fill="#e0c0a0" opacity="0.64" transform="rotate(109 862 136)"/>
<rect x="937" y="507" width="8" height="4" fill="#c8b090" opacity="0.77" transform="rotate(97 937 507)"/>
<rect x="951" y="160" width="10" height="4" fill="#e0b8c0" opacity="0.68" transform="rotate(94 951 160)"/>
<rect x="1033" y="248" width="9" height="3" fill="#d8a0a0" opacity="0.59" transform="rotate(140 1033 248)"/>
<rect x="779" y="664" width="10" height="3" fill="#c9d0c0" opacity="0.55" transform="rotate(83 779 664)"/>
<rect x="1027" y="470" width="11" height="4" fill="#101018" opacity="0.57" transform="rotate(88 1027 470)"/>
<rect x="973" y="250" width="8" height="4" fill="#d8a0a0" opacity="0.59" transform="rotate(110 973 250)"/>
<rect x="1032" y="294" width="9" height="4" fill="#c9d0c0" opacity="0.80" transform="rotate(82 1032 294)"/>
<rect x="1004" y="457" width="10" height="3" fill="#e8e0d8" opacity="0.72" transform="rotate(57 1004 457)"/>
<rect x="760" y="688" width="7" height="4" fill="#e8e0d8" opacity="0.56" transform="rotate(179 760 688)"/>
<rect x="1128" y="677" width="6" height="4" fill="#d9c7b0" opacity="0.59" transform="rotate(5 1128 677)"/>
<rect x="985" y="365" width="7" height="3" fill="#e8e0d8" opacity="0.74" transform="rotate(1 985 365)"/>
<rect x="690" y="208" width="10" height="3" fill="#c0c8d8" opacity="0.64" transform="rotate(58 690 208)"/>
<rect x="1153" y="430" width="10" height="3" fill="#d9c7b0" opacity="0.55" transform="rotate(164 1153 430)"/>
<rect x="1072" y="262" width="11" height="3" fill="#c9d0c0" opacity="0.66" transform="rotate(4 1072 262)"/>
<rect x="1071" y="339" width="6" height="4" fill="#d8a0a0" opacity="0.65" transform="rotate(100 1071 339)"/>
<rect x="1098" y="328" width="6" height="4" fill="#d8a0a0" opacity="0.59" transform="rotate(53 1098 328)"/>
<rect x="850" y="70" width="9" height="4" fill="#e8e0d8" opacity="0.70" transform="rotate(142 850 70)"/>
<rect x="980" y="593" width="11" height="3" fill="#e8e0d8" opacity="0.82" transform="rotate(47 980 593)"/>
<rect x="1327" y="666" width="7" height="4" fill="#d8d0c8" opacity="0.62" transform="rotate(3 1327 666)"/>
<rect x="1102" y="633" width="9" height="3" fill="#a8c8b8" opacity="0.58" transform="rotate(78 1102 633)"/>
<rect x="1013" y="294" width="7" height="3" fill="#101018" opacity="0.76" transform="rotate(16 1013 294)"/>
<rect x="590" y="271" width="9" height="4" fill="#c0c8d8" opacity="0.57" transform="rotate(35 590 271)"/>
<rect x="697" y="38" width="6" height="4" fill="#e0c0a0" opacity="0.80" transform="rotate(60 697 38)"/>
<rect x="1174" y="673" width="8" height="4" fill="#d8a0a0" opacity="0.70" transform="rotate(48 1174 673)"/>
<rect x="542" y="565" width="8" height="4" fill="#c9d0c0" opacity="0.54" transform="rotate(174 542 565)"/>
<rect x="750" y="512" width="10" height="3" fill="#a8c8b8" opacity="0.70" transform="rotate(128 750 512)"/>
<rect x="934" y="256" width="6" height="4" fill="#e8e0d8" opacity="0.84" transform="rotate(24 934 256)"/>
<rect x="706" y="253" width="7" height="4" fill="#c9d0c0" opacity="0.82" transform="rotate(5 706 253)"/>
<rect x="790" y="635" width="7" height="3" fill="#c9d0c0" opacity="0.75" transform="rotate(63 790 635)"/>
<rect x="762" y="457" width="9" height="3" fill="#a8c8b8" opacity="0.81" transform="rotate(22 762 457)"/>
<rect x="834" y="318" width="8" height="4" fill="#e0c0a0" opacity="0.64" transform="rotate(3 834 318)"/>
<rect x="732" y="297" width="9" height="3" fill="#c8b090" opacity="0.62" transform="rotate(169 732 297)"/>
<rect x="1396" y="427" width="11" height="4" fill="#d9c7b0" opacity="0.61" transform="rotate(153 1396 427)"/>
<rect x="922" y="97" width="8" height="4" fill="#d9c7b0" opacity="0.63" transform="rotate(119 922 97)"/>
<rect x="916" y="425" width="7" height="4" fill="#e0b8c0" opacity="0.72" transform="rotate(140 916 425)"/>
<rect x="964" y="581" width="10" height="3" fill="#c0c8d8" opacity="0.82" transform="rotate(115 964 581)"/>
<rect x="987" y="445" width="7" height="3" fill="#e8e0d8" opacity="0.83" transform="rotate(2 987 445)"/>
<rect x="904" y="537" width="7" height="4" fill="#d8d0c8" opacity="0.82" transform="rotate(172 904 537)"/>
<rect x="1161" y="52" width="9" height="4" fill="#101018" opacity="0.60" transform="rotate(165 1161 52)"/>
<rect x="858" y="484" width="10" height="4" fill="#e0c0a0" opacity="0.64" transform="rotate(103 858 484)"/>
<rect x="874" y="664" width="10" height="3" fill="#e8e0d8" opacity="0.68" transform="rotate(60 874 664)"/>
<rect x="1223" y="270" width="6" height="3" fill="#e8e0d8" opacity="0.61" transform="rotate(155 1223 270)"/>
<rect x="982" y="657" width="6" height="4" fill="#c8b090" opacity="0.65" transform="rotate(109 982 657)"/>
<rect x="1045" y="429" width="10" height="3" fill="#e0c0a0" opacity="0.76" transform="rotate(41 1045 429)"/>
<rect x="815" y="383" width="10" height="4" fill="#e0b8c0" opacity="0.59" transform="rotate(93 815 383)"/>
<rect x="669" y="450" width="10" height="3" fill="#a8c8b8" opacity="0.77" transform="rotate(19 669 450)"/>
<rect x="1269" y="418" width="8" height="4" fill="#101018" opacity="0.54" transform="rotate(157 1269 418)"/>
<rect x="892" y="612" width="7" height="3" fill="#d8d0c8" opacity="0.69" transform="rotate(64 892 612)"/>
<rect x="1130" y="609" width="8" height="3" fill="#d8a0a0" opacity="0.65" transform="rotate(55 1130 609)"/>
<rect x="736" y="627" width="8" height="4" fill="#e8e0d8" opacity="0.84" transform="rotate(109 736 627)"/>
<rect x="1040" y="673" width="9" height="3" fill="#c0c8d8" opacity="0.69" transform="rotate(166 1040 673)"/>
<rect x="970" y="719" width="9" height="4" fill="#c8b090" opacity="0.51" transform="rotate(70 970 719)"/>
<rect x="1055" y="484" width="7" height="3" fill="#e0c0a0" opacity="0.70" transform="rotate(90 1055 484)"/>
<rect x="971" y="409" width="11" height="3" fill="#101018" opacity="0.81" transform="rotate(79 971 409)"/>
<rect x="963" y="419" width="8" height="3" fill="#c0c8d8" opacity="0.68" transform="rotate(14 963 419)"/>
<rect x="877" y="71" width="9" height="4" fill="#a8c8b8" opacity="0.72" transform="rotate(178 877 71)"/>
<rect x="1098" y="373" width="8" height="3" fill="#c9d0c0" opacity="0.62" transform="rotate(102 1098 373)"/>
<rect x="1455" y="715" width="6" height="3" fill="#c0c8d8" opacity="0.75" transform="rotate(142 1455 715)"/>
<rect x="878" y="394" width="6" height="3" fill="#d8d0c8" opacity="0.70" transform="rotate(32 878 394)"/>
<rect x="1031" y="626" width="9" height="3" fill="#101018" opacity="0.54" transform="rotate(36 1031 626)"/>
<rect x="1037" y="104" width="7" height="4" fill="#101018" opacity="0.65" transform="rotate(148 1037 104)"/>
<rect x="1033" y="574" width="9" height="4" fill="#e8e0d8" opacity="0.62" transform="rotate(26 1033 574)"/>
<rect x="1226" y="252" width="8" height="3" fill="#d9c7b0" opacity="0.58" transform="rotate(69 1226 252)"/>
<rect x="785" y="279" width="6" height="3" fill="#e8e0d8" opacity="0.52" transform="rotate(43 785 279)"/>
<rect x="762" y="670" width="10" height="3" fill="#e0b8c0" opacity="0.84" transform="rotate(108 762 670)"/>
<rect x="1358" y="39" width="9" height="4" fill="#a8c8b8" opacity="0.81" transform="rotate(74 1358 39)"/>
<rect x="971" y="344" width="8" height="3" fill="#c0c8d8" opacity="0.64" transform="rotate(175 971 344)"/>
<rect x="1113" y="653" width="8" height="4" fill="#a8c8b8" opacity="0.79" transform="rotate(173 1113 653)"/>
<rect x="928" y="299" width="6" height="4" fill="#d8a0a0" opacity="0.58" transform="rotate(61 928 299)"/>
<rect x="1138" y="483" width="10" height="4" fill="#e8e0d8" opacity="0.56" transform="rotate(84 1138 483)"/>
<rect x="532" y="248" width="7" height="4" fill="#e8e0d8" opacity="0.80" transform="rotate(91 532 248)"/>
<rect x="1388" y="483" width="11" height="4" fill="#c8b090" opacity="0.69" transform="rotate(79 1388 483)"/>
<rect x="1247" y="285" width="9" height="3" fill="#a8c8b8" opacity="0.51" transform="rotate(153 1247 285)"/>
<rect x="1249" y="208" width="10" height="4" fill="#e8e0d8" opacity="0.61" transform="rotate(140 1249 208)"/>
<rect x="783" y="492" width="7" height="3" fill="#e8e0d8" opacity="0.60" transform="rotate(56 783 492)"/>
<rect x="1181" y="385" width="10" height="3" fill="#e0c0a0" opacity="0.80" transform="rotate(113 1181 385)"/>
<rect x="813" y="215" width="8" height="3" fill="#e0b8c0" opacity="0.59" transform="rotate(119 813 215)"/>
<rect x="645" y="527" width="7" height="3" fill="#e8e0d8" opacity="0.75" transform="rotate(164 645 527)"/>
<rect x="1030" y="284" width="8" height="3" fill="#e0c0a0" opacity="0.83" transform="rotate(56 1030 284)"/>
<rect x="1158" y="459" width="9" height="4" fill="#101018" opacity="0.62" transform="rotate(121 1158 459)"/>
<rect x="992" y="-9" width="6" height="4" fill="#d9c7b0" opacity="0.84" transform="rotate(109 992 -9)"/>
<rect x="771" y="366" width="10" height="3" fill="#a8c8b8" opacity="0.74" transform="rotate(164 771 366)"/>
<rect x="1058" y="277" width="6" height="4" fill="#c8b090" opacity="0.74" transform="rotate(76 1058 277)"/>
<rect x="793" y="529" width="9" height="3" fill="#e8e0d8" opacity="0.65" transform="rotate(10 793 529)"/>
<rect x="1248" y="364" width="6" height="4" fill="#c0c8d8" opacity="0.56" transform="rotate(145 1248 364)"/>
<rect x="1209" y="109" width="7" height="3" fill="#d8a0a0" opacity="0.63" transform="rotate(173 1209 109)"/>
<rect x="1211" y="361" width="9" height="3" fill="#d8d0c8" opacity="0.74" transform="rotate(44 1211 361)"/>
<rect x="1202" y="87" width="9" height="3" fill="#101018" opacity="0.70" transform="rotate(127 1202 87)"/>
<rect x="578" y="234" width="7" height="4" fill="#e0b8c0" opacity="0.79" transform="rotate(108 578 234)"/>
<rect x="844" y="559" width="6" height="3" fill="#c0c8d8" opacity="0.61" transform="rotate(8 844 559)"/>
<rect x="1103" y="701" width="9" height="3" fill="#d9c7b0" opacity="0.50" transform="rotate(100 1103 701)"/>
<rect x="1186" y="714" width="6" height="4" fill="#101018" opacity="0.59" transform="rotate(176 1186 714)"/>
<rect x="546" y="461" width="8" height="3" fill="#c0c8d8" opacity="0.72" transform="rotate(16 546 461)"/>
<rect x="996" y="673" width="7" height="3" fill="#d9c7b0" opacity="0.51" transform="rotate(25 996 673)"/>
<rect x="1250" y="391" width="10" height="4" fill="#c0c8d8" opacity="0.76" transform="rotate(18 1250 391)"/>
<rect x="896" y="629" width="8" height="3" fill="#c8b090" opacity="0.79" transform="rotate(99 896 629)"/>
<rect x="1141" y="256" width="11" height="3" fill="#e8e0d8" opacity="0.67" transform="rotate(9 1141 256)"/>
<rect x="1099" y="558" width="11" height="3" fill="#e0b8c0" opacity="0.67" transform="rotate(7 1099 558)"/>
<rect x="1187" y="217" width="9" height="4" fill="#d8a0a0" opacity="0.60" transform="rotate(92 1187 217)"/>
<rect x="773" y="473" width="8" height="4" fill="#d8a0a0" opacity="0.63" transform="rotate(149 773 473)"/>
<rect x="1051" y="-7" width="9" height="4" fill="#d8d0c8" opacity="0.61" transform="rotate(84 1051 -7)"/>
<rect x="1369" y="326" width="11" height="4" fill="#d9c7b0" opacity="0.75" transform="rotate(112 1369 326)"/>
<rect x="704" y="232" width="9" height="3" fill="#e0c0a0" opacity="0.73" transform="rotate(66 704 232)"/>
<rect x="1118" y="660" width="9" height="3" fill="#e0c0a0" opacity="0.70" transform="rotate(15 1118 660)"/>
<rect x="992" y="395" width="8" height="3" fill="#c0c8d8" opacity="0.54" transform="rotate(79 992 395)"/>
<rect x="872" y="122" width="10" height="3" fill="#d8d0c8" opacity="0.73" transform="rotate(17 872 122)"/>
<rect x="930" y="438" width="9" height="4" fill="#101018" opacity="0.70" transform="rotate(132 930 438)"/>
<rect x="1005" y="612" width="9" height="4" fill="#c9d0c0" opacity="0.72" transform="rotate(151 1005 612)"/>
<rect x="843" y="691" width="8" height="4" fill="#e8e0d8" opacity="0.70" transform="rotate(98 843 691)"/>
<rect x="1130" y="604" width="8" height="3" fill="#e8e0d8" opacity="0.66" transform="rotate(107 1130 604)"/>
<rect x="1027" y="672" width="6" height="4" fill="#c9d0c0" opacity="0.82" transform="rotate(36 1027 672)"/>
<rect x="744" y="588" width="9" height="4" fill="#c8b090" opacity="0.68" transform="rotate(22 744 588)"/>
<rect x="1307" y="454" width="10" height="3" fill="#c8b090" opacity="0.78" transform="rotate(64 1307 454)"/>
<rect x="896" y="72" width="7" height="3" fill="#101018" opacity="0.65" transform="rotate(151 896 72)"/>
<rect x="801" y="568" width="6" height="3" fill="#c0c8d8" opacity="0.81" transform="rotate(27 801 568)"/>
<rect x="810" y="479" width="11" height="4" fill="#e0b8c0" opacity="0.50" transform="rotate(48 810 479)"/>
<rect x="869" y="461" width="10" height="4" fill="#d8a0a0" opacity="0.72" transform="rotate(6 869 461)"/>
<rect x="1311" y="461" width="9" height="3" fill="#101018" opacity="0.68" transform="rotate(41 1311 461)"/>
<rect x="1072" y="525" width="10" height="3" fill="#c8b090" opacity="0.61" transform="rotate(84 1072 525)"/>
<rect x="1396" y="235" width="7" height="3" fill="#101018" opacity="0.52" transform="rotate(158 1396 235)"/>
<rect x="942" y="96" width="9" height="3" fill="#d8d0c8" opacity="0.70" transform="rotate(102 942 96)"/>
<rect x="1123" y="92" width="11" height="4" fill="#e8e0d8" opacity="0.77" transform="rotate(17 1123 92)"/>
<rect x="838" y="452" width="10" height="4" fill="#e0c0a0" opacity="0.53" transform="rotate(169 838 452)"/>
<rect x="1113" y="389" width="10" height="3" fill="#a8c8b8" opacity="0.62" transform="rotate(157 1113 389)"/>
<rect x="1277" y="504" width="9" height="4" fill="#c8b090" opacity="0.55" transform="rotate(146 1277 504)"/>
<rect x="732" y="140" width="9" height="3" fill="#c0c8d8" opacity="0.83" transform="rotate(71 732 140)"/>
<rect x="961" y="574" width="9" height="4" fill="#e8e0d8" opacity="0.70" transform="rotate(13 961 574)"/>
<rect x="1278" y="502" width="11" height="3" fill="#a8c8b8" opacity="0.75" transform="rotate(139 1278 502)"/>
<rect x="902" y="663" width="10" height="4" fill="#e0c0a0" opacity="0.59" transform="rotate(137 902 663)"/>
<rect x="1100" y="408" width="7" height="4" fill="#e0c0a0" opacity="0.53" transform="rotate(156 1100 408)"/>
<rect x="1054" y="267" width="10" height="4" fill="#d9c7b0" opacity="0.57" transform="rotate(129 1054 267)"/>
<rect x="993" y="382" width="9" height="4" fill="#c8b090" opacity="0.80" transform="rotate(38 993 382)"/>
<rect x="688" y="10" width="7" height="4" fill="#c9d0c0" opacity="0.72" transform="rotate(143 688 10)"/>
<rect x="691" y="234" width="9" height="3" fill="#d9c7b0" opacity="0.51" transform="rotate(83 691 234)"/>
<rect x="869" y="221" width="10" height="4" fill="#d9c7b0" opacity="0.55" transform="rotate(28 869 221)"/>
<rect x="1156" y="94" width="6" height="4" fill="#d8d0c8" opacity="0.74" transform="rotate(76 1156 94)"/>
<rect x="810" y="710" width="9" height="4" fill="#d9c7b0" opacity="0.77" transform="rotate(86 810 710)"/>
<rect x="886" y="216" width="11" height="3" fill="#d8d0c8" opacity="0.69" transform="rotate(50 886 216)"/>
<rect x="1319" y="490" width="11" height="3" fill="#a8c8b8" opacity="0.76" transform="rotate(113 1319 490)"/>
<rect x="1221" y="270" width="6" height="4" fill="#d8a0a0" opacity="0.59" transform="rotate(100 1221 270)"/>
<rect x="1363" y="432" width="10" height="4" fill="#c8b090" opacity="0.77" transform="rotate(95 1363 432)"/>
<rect x="733" y="167" width="8" height="4" fill="#a8c8b8" opacity="0.66" transform="rotate(62 733 167)"/>
<rect x="1269" y="226" width="6" height="4" fill="#c8b090" opacity="0.52" transform="rotate(72 1269 226)"/>
<rect x="1210" y="678" width="11" height="4" fill="#c0c8d8" opacity="0.51" transform="rotate(40 1210 678)"/>
<rect x="849" y="384" width="7" height="4" fill="#101018" opacity="0.78" transform="rotate(90 849 384)"/>
<rect x="1189" y="338" width="10" height="4" fill="#c0c8d8" opacity="0.60" transform="rotate(25 1189 338)"/>
<rect x="1075" y="232" width="9" height="4" fill="#101018" opacity="0.52" transform="rotate(82 1075 232)"/>
<rect x="875" y="561" width="10" height="3" fill="#e0b8c0" opacity="0.56" transform="rotate(139 875 561)"/>
<rect x="949" y="621" width="7" height="4" fill="#c0c8d8" opacity="0.55" transform="rotate(2 949 621)"/>
<rect x="1016" y="288" width="9" height="3" fill="#e0c0a0" opacity="0.75" transform="rotate(61 1016 288)"/>
<rect x="1137" y="634" width="10" height="4" fill="#d8d0c8" opacity="0.71" transform="rotate(7 1137 634)"/>
<rect x="1001" y="410" width="10" height="3" fill="#c9d0c0" opacity="0.81" transform="rotate(161 1001 410)"/>
<rect x="1104" y="78" width="7" height="4" fill="#d8d0c8" opacity="0.68" transform="rotate(27 1104 78)"/>
<rect x="1156" y="458" width="11" height="3" fill="#e8e0d8" opacity="0.76" transform="rotate(39 1156 458)"/>
<rect x="1030" y="338" width="9" height="3" fill="#c8b090" opacity="0.59" transform="rotate(100 1030 338)"/>
<rect x="995" y="436" width="7" height="3" fill="#c0c8d8" opacity="0.64" transform="rotate(74 995 436)"/>
<rect x="785" y="706" width="8" height="3" fill="#d9c7b0" opacity="0.58" transform="rotate(180 785 706)"/>
<rect x="1119" y="356" width="9" height="4" fill="#e8e0d8" opacity="0.73" transform="rotate(178 1119 356)"/>
<rect x="1275" y="53" width="8" height="4" fill="#e0b8c0" opacity="0.69" transform="rotate(123 1275 53)"/>
<rect x="1045" y="220" width="6" height="4" fill="#d8d0c8" opacity="0.62" transform="rotate(154 1045 220)"/>
<rect x="1089" y="629" width="8" height="3" fill="#c0c8d8" opacity="0.71" transform="rotate(176 1089 629)"/>
<rect x="497" y="527" width="9" height="3" fill="#c0c8d8" opacity="0.59" transform="rotate(110 497 527)"/>
<rect x="780" y="604" width="9" height="4" fill="#d8d0c8" opacity="0.63" transform="rotate(12 780 604)"/>
<rect x="1227" y="390" width="9" height="3" fill="#d8a0a0" opacity="0.72" transform="rotate(119 1227 390)"/>
<rect x="1013" y="594" width="8" height="4" fill="#c9d0c0" opacity="0.64" transform="rotate(147 1013 594)"/>
<rect x="912" y="390" width="9" height="4" fill="#e0c0a0" opacity="0.53" transform="rotate(54 912 390)"/>
<rect x="876" y="279" width="8" height="4" fill="#d8a0a0" opacity="0.50" transform="rotate(137 876 279)"/>
<rect x="759" y="85" width="9" height="4" fill="#a8c8b8" opacity="0.59" transform="rotate(94 759 85)"/>
<rect x="792" y="335" width="9" height="4" fill="#c0c8d8" opacity="0.79" transform="rotate(46 792 335)"/>
<rect x="873" y="57" width="10" height="3" fill="#c0c8d8" opacity="0.72" transform="rotate(76 873 57)"/>
<rect x="711" y="430" width="7" height="3" fill="#c0c8d8" opacity="0.62" transform="rotate(117 711 430)"/>
<rect x="1246" y="271" width="11" height="3" fill="#101018" opacity="0.63" transform="rotate(175 1246 271)"/>
<rect x="974" y="237" width="9" height="3" fill="#d9c7b0" opacity="0.54" transform="rotate(162 974 237)"/>
<rect x="731" y="401" width="10" height="3" fill="#d8a0a0" opacity="0.81" transform="rotate(179 731 401)"/>
<rect x="518" y="311" width="9" height="4" fill="#d9c7b0" opacity="0.82" transform="rotate(72 518 311)"/>
<rect x="932" y="401" width="8" height="3" fill="#101018" opacity="0.79" transform="rotate(153 932 401)"/>
<rect x="891" y="592" width="9" height="4" fill="#d9c7b0" opacity="0.69" transform="rotate(87 891 592)"/>
<rect x="933" y="536" width="7" height="3" fill="#e0c0a0" opacity="0.55" transform="rotate(9 933 536)"/>
<rect x="992" y="363" width="7" height="4" fill="#d8d0c8" opacity="0.81" transform="rotate(100 992 363)"/>
<rect x="777" y="329" width="9" height="3" fill="#e8e0d8" opacity="0.69" transform="rotate(24 777 329)"/>
<rect x="1141" y="263" width="8" height="4" fill="#c8b090" opacity="0.57" transform="rotate(66 1141 263)"/>
<rect x="1163" y="661" width="9" height="3" fill="#c8b090" opacity="0.51" transform="rotate(102 1163 661)"/>
<rect x="1031" y="304" width="7" height="4" fill="#a8c8b8" opacity="0.83" transform="rotate(110 1031 304)"/>
<rect x="1204" y="315" width="9" height="3" fill="#c9d0c0" opacity="0.79" transform="rotate(155 1204 315)"/>
<rect x="1056" y="575" width="10" height="3" fill="#e0c0a0" opacity="0.76" transform="rotate(40 1056 575)"/>
<rect x="1190" y="575" width="10" height="4" fill="#e8e0d8" opacity="0.77" transform="rotate(84 1190 575)"/>
<rect x="1315" y="543" width="7" height="4" fill="#d8a0a0" opacity="0.80" transform="rotate(123 1315 543)"/>
<rect x="583" y="283" width="10" height="4" fill="#d8a0a0" opacity="0.61" transform="rotate(127 583 283)"/>
<rect x="1077" y="178" width="7" height="4" fill="#e8e0d8" opacity="0.64" transform="rotate(120 1077 178)"/>
<rect x="1015" y="533" width="6" height="3" fill="#a8c8b8" opacity="0.62" transform="rotate(131 1015 533)"/>
<rect x="1262" y="383" width="9" height="3" fill="#d8d0c8" opacity="0.68" transform="rotate(118 1262 383)"/>
<rect x="975" y="58" width="10" height="4" fill="#c9d0c0" opacity="0.57" transform="rotate(97 975 58)"/>
<rect x="1014" y="333" width="9" height="3" fill="#c9d0c0" opacity="0.84" transform="rotate(104 1014 333)"/>
<rect x="793" y="373" width="10" height="3" fill="#c0c8d8" opacity="0.78" transform="rotate(142 793 373)"/>
<rect x="1021" y="518" width="10" height="3" fill="#a8c8b8" opacity="0.66" transform="rotate(29 1021 518)"/>
<rect x="1201" y="15" width="7" height="4" fill="#c8b090" opacity="0.75" transform="rotate(64 1201 15)"/>
<rect x="1164" y="545" width="6" height="3" fill="#e0b8c0" opacity="0.61" transform="rotate(116 1164 545)"/>
<rect x="1074" y="324" width="9" height="3" fill="#101018" opacity="0.69" transform="rotate(44 1074 324)"/>
<rect x="1121" y="303" width="8" height="3" fill="#e8e0d8" opacity="0.75" transform="rotate(23 1121 303)"/>
<rect x="1028" y="249" width="10" height="4" fill="#e8e0d8" opacity="0.53" transform="rotate(38 1028 249)"/>
<rect x="1006" y="115" width="11" height="3" fill="#c9d0c0" opacity="0.60" transform="rotate(112 1006 115)"/>
<rect x="998" y="501" width="10" height="4" fill="#e8e0d8" opacity="0.53" transform="rotate(11 998 501)"/>
<rect x="1286" y="312" width="10" height="3" fill="#c9d0c0" opacity="0.78" transform="rotate(55 1286 312)"/>
<rect x="1004" y="246" width="7" height="4" fill="#d8a0a0" opacity="0.78" transform="rotate(122 1004 246)"/>
<rect x="818" y="681" width="6" height="3" fill="#d9c7b0" opacity="0.67" transform="rotate(159 818 681)"/>
<rect x="618" y="559" width="10" height="4" fill="#e0c0a0" opacity="0.52" transform="rotate(36 618 559)"/>
<rect x="1277" y="538" width="10" height="3" fill="#e0b8c0" opacity="0.55" transform="rotate(139 1277 538)"/>
<rect x="908" y="595" width="11" height="4" fill="#e0c0a0" opacity="0.71" transform="rotate(150 908 595)"/>
<rect x="1069" y="308" width="7" height="4" fill="#e0c0a0" opacity="0.54" transform="rotate(96 1069 308)"/>
<rect x="491" y="697" width="7" height="4" fill="#e8e0d8" opacity="0.71" transform="rotate(42 491 697)"/>
<rect x="711" y="545" width="8" height="4" fill="#c8b090" opacity="0.79" transform="rotate(139 711 545)"/>
<rect x="1078" y="539" width="9" height="4" fill="#d9c7b0" opacity="0.61" transform="rotate(143 1078 539)"/>
<rect x="778" y="431" width="10" height="3" fill="#c0c8d8" opacity="0.66" transform="rotate(74 778 431)"/>
<rect x="1152" y="384" width="7" height="3" fill="#e0b8c0" opacity="0.64" transform="rotate(49 1152 384)"/>
<rect x="689" y="312" width="9" height="3" fill="#a8c8b8" opacity="0.60" transform="rotate(161 689 312)"/>
<rect x="1219" y="317" width="10" height="3" fill="#d8d0c8" opacity="0.78" transform="rotate(90 1219 317)"/>
<rect x="755" y="433" width="11" height="3" fill="#d8a0a0" opacity="0.54" transform="rotate(2 755 433)"/>
<rect x="785" y="169" width="9" height="4" fill="#d8d0c8" opacity="0.73" transform="rotate(132 785 169)"/>
<rect x="692" y="89" width="7" height="3" fill="#c8b090" opacity="0.66" transform="rotate(93 692 89)"/>
<rect x="808" y="544" width="9" height="4" fill="#e0b8c0" opacity="0.67" transform="rotate(163 808 544)"/>
<rect x="793" y="655" width="10" height="3" fill="#c0c8d8" opacity="0.76" transform="rotate(68 793 655)"/>
<rect x="965" y="641" width="8" height="3" fill="#c0c8d8" opacity="0.55" transform="rotate(172 965 641)"/>
<rect x="901" y="419" width="6" height="3" fill="#e0c0a0" opacity="0.84" transform="rotate(135 901 419)"/>
<rect x="1264" y="602" width="8" height="3" fill="#e0c0a0" opacity="0.63" transform="rotate(171 1264 602)"/>
<rect x="1014" y="693" width="9" height="3" fill="#101018" opacity="0.67" transform="rotate(29 1014 693)"/>
<rect x="1070" y="25" width="10" height="3" fill="#d8d0c8" opacity="0.56" transform="rotate(55 1070 25)"/>
<rect x="865" y="355" width="8" height="4" fill="#d8a0a0" opacity="0.60" transform="rotate(173 865 355)"/>
<rect x="565" y="641" width="8" height="4" fill="#c8b090" opacity="0.63" transform="rotate(65 565 641)"/>
<rect x="586" y="306" width="11" height="3" fill="#e0c0a0" opacity="0.56" transform="rotate(151 586 306)"/>
<rect x="621" y="345" width="10" height="3" fill="#a8c8b8" opacity="0.63" transform="rotate(14 621 345)"/>
<rect x="886" y="660" width="7" height="4" fill="#d9c7b0" opacity="0.51" transform="rotate(47 886 660)"/>
<rect x="620" y="593" width="7" height="3" fill="#d8d0c8" opacity="0.53" transform="rotate(13 620 593)"/>
<rect x="1418" y="430" width="10" height="4" fill="#d8a0a0" opacity="0.73" transform="rotate(167 1418 430)"/>
<rect x="817" y="696" width="8" height="4" fill="#c8b090" opacity="0.64" transform="rotate(134 817 696)"/>
<rect x="578" y="650" width="10" height="3" fill="#a8c8b8" opacity="0.73" transform="rotate(132 578 650)"/>
<rect x="1192" y="376" width="9" height="4" fill="#101018" opacity="0.65" transform="rotate(120 1192 376)"/>
<rect x="1048" y="146" width="10" height="4" fill="#d8a0a0" opacity="0.55" transform="rotate(154 1048 146)"/>
<rect x="963" y="646" width="10" height="4" fill="#d8a0a0" opacity="0.73" transform="rotate(158 963 646)"/>
<rect x="868" y="666" width="9" height="4" fill="#e8e0d8" opacity="0.61" transform="rotate(109 868 666)"/>
<rect x="564" y="253" width="10" height="3" fill="#d8d0c8" opacity="0.53" transform="rotate(4 564 253)"/>
<rect x="875" y="202" width="7" height="3" fill="#d8d0c8" opacity="0.71" transform="rotate(80 875 202)"/>
<rect x="886" y="14" width="8" height="3" fill="#c8b090" opacity="0.84" transform="rotate(53 886 14)"/>
<rect x="1049" y="489" width="11" height="4" fill="#e8e0d8" opacity="0.77" transform="rotate(128 1049 489)"/>
<rect x="818" y="11" width="8" height="3" fill="#c9d0c0" opacity="0.70" transform="rotate(113 818 11)"/>
<rect x="819" y="282" width="10" height="4" fill="#d8d0c8" opacity="0.62" transform="rotate(145 819 282)"/>
<rect x="874" y="448" width="7" height="3" fill="#101018" opacity="0.66" transform="rotate(123 874 448)"/>
<rect x="933" y="409" width="10" height="4" fill="#e8e0d8" opacity="0.78" transform="rotate(79 933 409)"/>
<rect x="1119" y="532" width="7" height="4" fill="#c0c8d8" opacity="0.76" transform="rotate(151 1119 532)"/>
<rect x="899" y="682" width="6" height="3" fill="#e0c0a0" opacity="0.75" transform="rotate(2 899 682)"/>
<rect x="588" y="385" width="7" height="4" fill="#c0c8d8" opacity="0.54" transform="rotate(178 588 385)"/>
<rect x="913" y="530" width="10" height="4" fill="#d8a0a0" opacity="0.63" transform="rotate(62 913 530)"/>
<rect x="993" y="636" width="6" height="3" fill="#d8a0a0" opacity="0.80" transform="rotate(57 993 636)"/>
<rect x="752" y="402" width="11" height="3" fill="#d8d0c8" opacity="0.65" transform="rotate(50 752 402)"/>
<rect x="1244" y="622" width="10" height="3" fill="#e8e0d8" opacity="0.75" transform="rotate(2 1244 622)"/>
<rect x="1065" y="623" width="10" height="3" fill="#c9d0c0" opacity="0.80" transform="rotate(103 1065 623)"/>
<rect x="948" y="237" width="8" height="4" fill="#d9c7b0" opacity="0.59" transform="rotate(163 948 237)"/>
<rect x="860" y="254" width="7" height="3" fill="#e0c0a0" opacity="0.74" transform="rotate(105 860 254)"/>
<rect x="897" y="657" width="9" height="4" fill="#d8a0a0" opacity="0.64" transform="rotate(155 897 657)"/>
<rect x="987" y="481" width="9" height="3" fill="#e0b8c0" opacity="0.71" transform="rotate(26 987 481)"/>
<rect x="1312" y="713" width="7" height="3" fill="#e8e0d8" opacity="0.72" transform="rotate(142 1312 713)"/>
<rect x="1393" y="249" width="6" height="3" fill="#e8e0d8" opacity="0.77" transform="rotate(43 1393 249)"/>
<rect x="911" y="22" width="9" height="3" fill="#e0b8c0" opacity="0.51" transform="rotate(7 911 22)"/>
<rect x="927" y="706" width="10" height="3" fill="#c9d0c0" opacity="0.68" transform="rotate(92 927 706)"/>
<rect x="815" y="657" width="6" height="3" fill="#c9d0c0" opacity="0.68" transform="rotate(117 815 657)"/>
<rect x="995" y="442" width="6" height="4" fill="#a8c8b8" opacity="0.73" transform="rotate(52 995 442)"/>
<rect x="873" y="297" width="9" height="4" fill="#e0c0a0" opacity="0.76" transform="rotate(38 873 297)"/>
<rect x="888" y="480" width="9" height="4" fill="#e8e0d8" opacity="0.80" transform="rotate(16 888 480)"/>
<rect x="899" y="391" width="8" height="4" fill="#101018" opacity="0.70" transform="rotate(27 899 391)"/>
<rect x="1315" y="241" width="10" height="3" fill="#a8c8b8" opacity="0.82" transform="rotate(69 1315 241)"/>
<rect x="1063" y="594" width="10" height="3" fill="#d9c7b0" opacity="0.75" transform="rotate(4 1063 594)"/>
<rect x="1090" y="12" width="10" height="3" fill="#e0b8c0" opacity="0.59" transform="rotate(170 1090 12)"/>
<rect x="793" y="88" width="10" height="3" fill="#d8a0a0" opacity="0.66" transform="rotate(69 793 88)"/>
<rect x="1335" y="706" width="10" height="4" fill="#c0c8d8" opacity="0.78" transform="rotate(135 1335 706)"/>
<rect x="825" y="-0" width="8" height="4" fill="#c8b090" opacity="0.50" transform="rotate(64 825 -0)"/>
<rect x="1090" y="378" width="6" height="4" fill="#c8b090" opacity="0.63" transform="rotate(77 1090 378)"/>
<rect x="1033" y="382" width="7" height="4" fill="#d8d0c8" opacity="0.59" transform="rotate(117 1033 382)"/>
<rect x="553" y="660" width="9" height="4" fill="#d9c7b0" opacity="0.75" transform="rotate(39 553 660)"/>
<rect x="916" y="693" width="9" height="4" fill="#c0c8d8" opacity="0.76" transform="rotate(30 916 693)"/>
<rect x="906" y="214" width="7" height="4" fill="#101018" opacity="0.55" transform="rotate(116 906 214)"/>
<rect x="812" y="403" width="6" height="4" fill="#c9d0c0" opacity="0.63" transform="rotate(96 812 403)"/>
<rect x="1324" y="457" width="7" height="4" fill="#c9d0c0" opacity="0.59" transform="rotate(32 1324 457)"/>
<rect x="895" y="278" width="7" height="4" fill="#e0b8c0" opacity="0.62" transform="rotate(158 895 278)"/>
<rect x="1035" y="631" width="10" height="4" fill="#d9c7b0" opacity="0.80" transform="rotate(50 1035 631)"/>
<rect x="1431" y="607" width="9" height="3" fill="#d9c7b0" opacity="0.55" transform="rotate(47 1431 607)"/>
<rect x="749" y="61" width="9" height="3" fill="#d9c7b0" opacity="0.59" transform="rotate(12 749 61)"/>
<rect x="1199" y="669" width="8" height="4" fill="#c8b090" opacity="0.78" transform="rotate(32 1199 669)"/>
<rect x="1104" y="472" width="10" height="3" fill="#d9c7b0" opacity="0.58" transform="rotate(69 1104 472)"/>
<rect x="1082" y="400" width="8" height="4" fill="#d9c7b0" opacity="0.52" transform="rotate(85 1082 400)"/>
<rect x="971" y="474" width="8" height="3" fill="#e0b8c0" opacity="0.53" transform="rotate(83 971 474)"/>
<rect x="1014" y="76" width="7" height="3" fill="#c9d0c0" opacity="0.57" transform="rotate(79 1014 76)"/>
<rect x="921" y="324" width="9" height="3" fill="#101018" opacity="0.80" transform="rotate(39 921 324)"/>
<rect x="1035" y="693" width="7" height="4" fill="#e8e0d8" opacity="0.68" transform="rotate(94 1035 693)"/>
<rect x="698" y="253" width="11" height="4" fill="#e0b8c0" opacity="0.72" transform="rotate(24 698 253)"/>
<rect x="1003" y="610" width="6" height="4" fill="#c0c8d8" opacity="0.56" transform="rotate(85 1003 610)"/>
<rect x="921" y="-2" width="8" height="4" fill="#e8e0d8" opacity="0.77" transform="rotate(97 921 -2)"/>
<rect x="960" y="390" width="8" height="4" fill="#d9c7b0" opacity="0.80" transform="rotate(58 960 390)"/>
<rect x="1037" y="258" width="9" height="4" fill="#e8e0d8" opacity="0.80" transform="rotate(15 1037 258)"/>
<rect x="1095" y="198" width="10" height="3" fill="#e8e0d8" opacity="0.83" transform="rotate(57 1095 198)"/>
<rect x="1004" y="160" width="9" height="4" fill="#e8e0d8" opacity="0.72" transform="rotate(89 1004 160)"/>
<rect x="1200" y="148" width="8" height="3" fill="#c8b090" opacity="0.51" transform="rotate(173 1200 148)"/>
<rect x="998" y="405" width="7" height="4" fill="#e0b8c0" opacity="0.70" transform="rotate(109 998 405)"/>
<rect x="1421" y="325" width="7" height="4" fill="#d8a0a0" opacity="0.85" transform="rotate(27 1421 325)"/>
<rect x="1089" y="592" width="6" height="4" fill="#c0c8d8" opacity="0.81" transform="rotate(142 1089 592)"/>
<rect x="1184" y="473" width="11" height="3" fill="#a8c8b8" opacity="0.53" transform="rotate(170 1184 473)"/>
<rect x="877" y="41" width="7" height="3" fill="#a8c8b8" opacity="0.80" transform="rotate(13 877 41)"/>
<rect x="846" y="579" width="7" height="4" fill="#c8b090" opacity="0.81" transform="rotate(106 846 579)"/>
<rect x="955" y="240" width="10" height="4" fill="#c0c8d8" opacity="0.73" transform="rotate(33 955 240)"/>
<rect x="944" y="291" width="10" height="3" fill="#e8e0d8" opacity="0.74" transform="rotate(123 944 291)"/>
<rect x="1410" y="447" width="9" height="4" fill="#d8a0a0" opacity="0.66" transform="rotate(117 1410 447)"/>
<rect x="1068" y="227" width="11" height="4" fill="#d8a0a0" opacity="0.82" transform="rotate(72 1068 227)"/>
<rect x="953" y="160" width="8" height="4" fill="#d8a0a0" opacity="0.85" transform="rotate(138 953 160)"/>
<rect x="1182" y="457" width="10" height="4" fill="#e0b8c0" opacity="0.70" transform="rotate(116 1182 457)"/>
<rect x="1152" y="678" width="8" height="4" fill="#d8a0a0" opacity="0.78" transform="rotate(79 1152 678)"/>
<rect x="1012" y="496" width="7" height="4" fill="#d8d0c8" opacity="0.72" transform="rotate(53 1012 496)"/>
<rect x="729" y="453" width="11" height="3" fill="#c0c8d8" opacity="0.73" transform="rotate(138 729 453)"/>
<rect x="758" y="437" width="6" height="4" fill="#a8c8b8" opacity="0.75" transform="rotate(107 758 437)"/>
<rect x="611" y="202" width="7" height="4" fill="#e8e0d8" opacity="0.56" transform="rotate(1 611 202)"/>
<rect x="970" y="647" width="6" height="3" fill="#e0b8c0" opacity="0.62" transform="rotate(36 970 647)"/>
<rect x="1018" y="417" width="8" height="3" fill="#c9d0c0" opacity="0.59" transform="rotate(10 1018 417)"/>
<rect x="1091" y="227" width="10" height="3" fill="#d8a0a0" opacity="0.57" transform="rotate(90 1091 227)"/>
<rect x="944" y="668" width="6" height="3" fill="#a8c8b8" opacity="0.60" transform="rotate(125 944 668)"/>
<rect x="878" y="238" width="7" height="4" fill="#e0b8c0" opacity="0.78" transform="rotate(81 878 238)"/>
<rect x="980" y="545" width="9" height="3" fill="#101018" opacity="0.58" transform="rotate(35 980 545)"/>
<rect x="966" y="603" width="9" height="3" fill="#e8e0d8" opacity="0.75" transform="rotate(10 966 603)"/>
<rect x="682" y="533" width="9" height="4" fill="#e8e0d8" opacity="0.85" transform="rotate(162 682 533)"/>
<rect x="1023" y="717" width="8" height="3" fill="#e0c0a0" opacity="0.84" transform="rotate(127 1023 717)"/>
<rect x="1028" y="364" width="10" height="3" fill="#c9d0c0" opacity="0.60" transform="rotate(110 1028 364)"/>
<rect x="841" y="291" width="6" height="3" fill="#d8d0c8" opacity="0.80" transform="rotate(141 841 291)"/>
<rect x="834" y="491" width="8" height="3" fill="#101018" opacity="0.64" transform="rotate(119 834 491)"/>
<rect x="1002" y="548" width="8" height="4" fill="#c8b090" opacity="0.69" transform="rotate(139 1002 548)"/>
<rect x="1172" y="559" width="8" height="3" fill="#c9d0c0" opacity="0.72" transform="rotate(138 1172 559)"/>
<rect x="1071" y="710" width="8" height="4" fill="#c9d0c0" opacity="0.80" transform="rotate(54 1071 710)"/>
<rect x="897" y="470" width="7" height="4" fill="#d9c7b0" opacity="0.51" transform="rotate(129 897 470)"/>
<rect x="599" y="654" width="8" height="4" fill="#a8c8b8" opacity="0.56" transform="rotate(109 599 654)"/>
<rect x="907" y="117" width="8" height="3" fill="#e8e0d8" opacity="0.66" transform="rotate(22 907 117)"/>
<rect x="1321" y="690" width="8" height="3" fill="#c0c8d8" opacity="0.77" transform="rotate(33 1321 690)"/>
<rect x="823" y="609" width="10" height="4" fill="#d8d0c8" opacity="0.62" transform="rotate(88 823 609)"/>
<rect x="1101" y="444" width="10" height="3" fill="#c8b090" opacity="0.74" transform="rotate(31 1101 444)"/>
<rect x="957" y="200" width="7" height="3" fill="#c0c8d8" opacity="0.71" transform="rotate(142 957 200)"/>
<rect x="748" y="647" width="10" height="3" fill="#c8b090" opacity="0.72" transform="rotate(66 748 647)"/>
<rect x="1378" y="690" width="6" height="4" fill="#101018" opacity="0.76" transform="rotate(136 1378 690)"/>
<rect x="1169" y="168" width="10" height="4" fill="#c0c8d8" opacity="0.68" transform="rotate(146 1169 168)"/>
<rect x="933" y="165" width="10" height="3" fill="#d8a0a0" opacity="0.80" transform="rotate(58 933 165)"/>
<rect x="894" y="687" width="9" height="4" fill="#d8d0c8" opacity="0.84" transform="rotate(143 894 687)"/>
<rect x="577" y="681" width="10" height="4" fill="#c9d0c0" opacity="0.54" transform="rotate(65 577 681)"/>
<rect x="1060" y="614" width="7" height="3" fill="#d9c7b0" opacity="0.57" transform="rotate(12 1060 614)"/>
<rect x="1163" y="617" width="9" height="4" fill="#c8b090" opacity="0.76" transform="rotate(85 1163 617)"/>
<rect x="906" y="217" width="9" height="3" fill="#d8d0c8" opacity="0.52" transform="rotate(106 906 217)"/>
<rect x="989" y="697" width="9" height="4" fill="#c9d0c0" opacity="0.73" transform="rotate(119 989 697)"/>
<rect x="1127" y="405" width="9" height="3" fill="#c9d0c0" opacity="0.56" transform="rotate(24 1127 405)"/>
<rect x="962" y="202" width="10" height="4" fill="#c8b090" opacity="0.81" transform="rotate(10 962 202)"/>
<rect x="854" y="398" width="10" height="4" fill="#c0c8d8" opacity="0.85" transform="rotate(36 854 398)"/>
<rect x="565" y="366" width="6" height="4" fill="#a8c8b8" opacity="0.85" transform="rotate(109 565 366)"/>
<rect x="987" y="400" width="7" height="4" fill="#c9d0c0" opacity="0.80" transform="rotate(99 987 400)"/>
<rect x="979" y="254" width="9" height="4" fill="#e8e0d8" opacity="0.68" transform="rotate(162 979 254)"/>
<rect x="1015" y="671" width="7" height="4" fill="#a8c8b8" opacity="0.55" transform="rotate(145 1015 671)"/>
<rect x="982" y="492" width="9" height="3" fill="#c8b090" opacity="0.82" transform="rotate(139 982 492)"/>
<rect x="1104" y="111" width="9" height="3" fill="#e8e0d8" opacity="0.71" transform="rotate(148 1104 111)"/>
<rect x="892" y="504" width="10" height="4" fill="#a8c8b8" opacity="0.82" transform="rotate(49 892 504)"/>
<rect x="638" y="28" width="8" height="3" fill="#d8d0c8" opacity="0.74" transform="rotate(13 638 28)"/>
<rect x="684" y="284" width="8" height="3" fill="#c9d0c0" opacity="0.55" transform="rotate(39 684 284)"/>
<rect x="1143" y="354" width="8" height="4" fill="#101018" opacity="0.67" transform="rotate(138 1143 354)"/>
<rect x="1068" y="680" width="7" height="3" fill="#a8c8b8" opacity="0.84" transform="rotate(13 1068 680)"/>
<rect x="1269" y="421" width="8" height="4" fill="#d8a0a0" opacity="0.66" transform="rotate(71 1269 421)"/>
<rect x="1371" y="599" width="8" height="4" fill="#e0c0a0" opacity="0.64" transform="rotate(128 1371 599)"/>
<rect x="1074" y="488" width="9" height="4" fill="#d8a0a0" opacity="0.72" transform="rotate(171 1074 488)"/>
<rect x="813" y="370" width="10" height="3" fill="#e0c0a0" opacity="0.56" transform="rotate(99 813 370)"/>
<rect x="904" y="74" width="10" height="3" fill="#e0b8c0" opacity="0.65" transform="rotate(58 904 74)"/>
<rect x="1215" y="191" width="10" height="3" fill="#c9d0c0" opacity="0.62" transform="rotate(169 1215 191)"/>
<rect x="1003" y="273" width="10" height="3" fill="#a8c8b8" opacity="0.52" transform="rotate(67 1003 273)"/>
<rect x="1003" y="200" width="11" height="3" fill="#e8e0d8" opacity="0.52" transform="rotate(14 1003 200)"/>
<rect x="1141" y="319" width="10" height="4" fill="#d8a0a0" opacity="0.69" transform="rotate(164 1141 319)"/>
<rect x="1031" y="681" width="8" height="3" fill="#a8c8b8" opacity="0.65" transform="rotate(135 1031 681)"/>
<rect x="1018" y="450" width="8" height="3" fill="#d9c7b0" opacity="0.51" transform="rotate(29 1018 450)"/>
<rect x="1078" y="507" width="7" height="3" fill="#101018" opacity="0.63" transform="rotate(33 1078 507)"/>
<rect x="1098" y="263" width="8" height="3" fill="#d9c7b0" opacity="0.85" transform="rotate(87 1098 263)"/>
<rect x="798" y="294" width="7" height="3" fill="#d9c7b0" opacity="0.66" transform="rotate(133 798 294)"/>
<rect x="1028" y="444" width="10" height="3" fill="#d9c7b0" opacity="0.71" transform="rotate(79 1028 444)"/>
<rect x="669" y="691" width="10" height="4" fill="#d8a0a0" opacity="0.67" transform="rotate(101 669 691)"/>
<rect x="964" y="502" width="10" height="3" fill="#e8e0d8" opacity="0.70" transform="rotate(127 964 502)"/>
<rect x="813" y="396" width="7" height="4" fill="#101018" opacity="0.79" transform="rotate(143 813 396)"/>
<rect x="797" y="713" width="7" height="4" fill="#d8d0c8" opacity="0.67" transform="rotate(29 797 713)"/>
<rect x="1271" y="191" width="6" height="4" fill="#d8a0a0" opacity="0.65" transform="rotate(136 1271 191)"/>
<rect x="590" y="353" width="6" height="4" fill="#a8c8b8" opacity="0.60" transform="rotate(24 590 353)"/>
<rect x="950" y="73" width="8" height="4" fill="#e0b8c0" opacity="0.73" transform="rotate(46 950 73)"/>
<rect x="941" y="61" width="9" height="3" fill="#d8d0c8" opacity="0.83" transform="rotate(67 941 61)"/>
<rect x="801" y="497" width="10" height="4" fill="#c8b090" opacity="0.64" transform="rotate(82 801 497)"/>
<rect x="1258" y="684" width="7" height="4" fill="#d8d0c8" opacity="0.76" transform="rotate(10 1258 684)"/>
<rect x="1236" y="643" width="10" height="3" fill="#e0b8c0" opacity="0.67" transform="rotate(91 1236 643)"/>
<rect x="1006" y="53" width="8" height="3" fill="#c0c8d8" opacity="0.62" transform="rotate(129 1006 53)"/>
<rect x="926" y="271" width="10" height="3" fill="#d8d0c8" opacity="0.59" transform="rotate(33 926 271)"/>
<rect x="1031" y="110" width="7" height="3" fill="#d8a0a0" opacity="0.82" transform="rotate(11 1031 110)"/>
<rect x="1432" y="437" width="10" height="4" fill="#e0b8c0" opacity="0.57" transform="rotate(96 1432 437)"/>
<rect x="932" y="294" width="8" height="4" fill="#d8d0c8" opacity="0.84" transform="rotate(87 932 294)"/>
<rect x="1043" y="556" width="9" height="3" fill="#d8a0a0" opacity="0.81" transform="rotate(30 1043 556)"/>
<rect x="864" y="333" width="8" height="4" fill="#c8b090" opacity="0.81" transform="rotate(59 864 333)"/>
<rect x="923" y="258" width="11" height="3" fill="#c8b090" opacity="0.63" transform="rotate(105 923 258)"/>
<rect x="1000" y="215" width="7" height="4" fill="#e0c0a0" opacity="0.74" transform="rotate(101 1000 215)"/>
<rect x="1083" y="341" width="7" height="4" fill="#d8a0a0" opacity="0.63" transform="rotate(120 1083 341)"/>
<rect x="988" y="704" width="6" height="3" fill="#e8e0d8" opacity="0.68" transform="rotate(100 988 704)"/>
<rect x="1092" y="349" width="9" height="4" fill="#a8c8b8" opacity="0.53" transform="rotate(48 1092 349)"/>
<rect x="1042" y="195" width="9" height="4" fill="#101018" opacity="0.69" transform="rotate(63 1042 195)"/>
<rect x="926" y="263" width="9" height="4" fill="#e0c0a0" opacity="0.84" transform="rotate(172 926 263)"/>
<rect x="1377" y="286" width="11" height="3" fill="#c0c8d8" opacity="0.68" transform="rotate(134 1377 286)"/>
<rect x="1150" y="302" width="6" height="3" fill="#a8c8b8" opacity="0.72" transform="rotate(10 1150 302)"/>
<rect x="750" y="578" width="11" height="3" fill="#d8a0a0" opacity="0.55" transform="rotate(25 750 578)"/>
<rect x="905" y="71" width="7" height="3" fill="#c9d0c0" opacity="0.70" transform="rotate(102 905 71)"/>
<rect x="1048" y="291" width="8" height="3" fill="#e8e0d8" opacity="0.81" transform="rotate(136 1048 291)"/>
<rect x="973" y="251" width="10" height="4" fill="#e0b8c0" opacity="0.77" transform="rotate(77 973 251)"/>
<rect x="1076" y="152" width="9" height="4" fill="#d8a0a0" opacity="0.57" transform="rotate(109 1076 152)"/>
<rect x="776" y="180" width="10" height="3" fill="#c0c8d8" opacity="0.53" transform="rotate(14 776 180)"/>
<rect x="1085" y="557" width="11" height="3" fill="#d8a0a0" opacity="0.71" transform="rotate(92 1085 557)"/>
<rect x="1190" y="353" width="10" height="4" fill="#d9c7b0" opacity="0.60" transform="rotate(147 1190 353)"/>
<rect x="963" y="471" width="8" height="3" fill="#c0c8d8" opacity="0.73" transform="rotate(38 963 471)"/>
<rect x="835" y="57" width="6" height="3" fill="#e8e0d8" opacity="0.64" transform="rotate(72 835 57)"/>
<rect x="969" y="389" width="8" height="3" fill="#a8c8b8" opacity="0.52" transform="rotate(75 969 389)"/>
<rect x="1318" y="300" width="7" height="4" fill="#e0c0a0" opacity="0.67" transform="rotate(69 1318 300)"/>
<rect x="601" y="132" width="7" height="4" fill="#e0b8c0" opacity="0.54" transform="rotate(147 601 132)"/>
<rect x="977" y="543" width="6" height="3" fill="#d9c7b0" opacity="0.78" transform="rotate(177 977 543)"/>
<rect x="976" y="617" width="11" height="3" fill="#c8b090" opacity="0.64" transform="rotate(31 976 617)"/>
<rect x="1134" y="428" width="7" height="3" fill="#a8c8b8" opacity="0.80" transform="rotate(98 1134 428)"/>
<rect x="940" y="653" width="8" height="4" fill="#d9c7b0" opacity="0.81" transform="rotate(1 940 653)"/>
<rect x="849" y="507" width="10" height="4" fill="#101018" opacity="0.65" transform="rotate(101 849 507)"/>
<rect x="1123" y="686" width="8" height="3" fill="#d8a0a0" opacity="0.63" transform="rotate(131 1123 686)"/>
<rect x="714" y="363" width="7" height="3" fill="#d8d0c8" opacity="0.51" transform="rotate(91 714 363)"/>
<rect x="1157" y="304" width="7" height="4" fill="#c8b090" opacity="0.68" transform="rotate(80 1157 304)"/>
<rect x="1010" y="172" width="9" height="3" fill="#a8c8b8" opacity="0.79" transform="rotate(52 1010 172)"/>
<rect x="803" y="367" width="10" height="4" fill="#c9d0c0" opacity="0.76" transform="rotate(82 803 367)"/>
<rect x="612" y="322" width="10" height="4" fill="#e0c0a0" opacity="0.63" transform="rotate(122 612 322)"/>
<rect x="853" y="2" width="8" height="4" fill="#c0c8d8" opacity="0.78" transform="rotate(160 853 2)"/>
<rect x="1172" y="256" width="10" height="4" fill="#c8b090" opacity="0.57" transform="rotate(88 1172 256)"/>
<rect x="832" y="268" width="11" height="3" fill="#d8a0a0" opacity="0.84" transform="rotate(28 832 268)"/>
<rect x="1177" y="346" width="11" height="4" fill="#d8a0a0" opacity="0.81" transform="rotate(60 1177 346)"/>
<rect x="880" y="602" width="11" height="3" fill="#101018" opacity="0.85" transform="rotate(72 880 602)"/>
<rect x="1051" y="297" width="10" height="4" fill="#c8b090" opacity="0.62" transform="rotate(21 1051 297)"/>
<rect x="983" y="486" width="9" height="4" fill="#e8e0d8" opacity="0.75" transform="rotate(53 983 486)"/>
<rect x="1010" y="445" width="10" height="4" fill="#101018" opacity="0.61" transform="rotate(22 1010 445)"/>
<rect x="843" y="460" width="7" height="3" fill="#c8b090" opacity="0.51" transform="rotate(75 843 460)"/>
<rect x="957" y="408" width="9" height="3" fill="#e8e0d8" opacity="0.63" transform="rotate(60 957 408)"/>
<rect x="1024" y="18" width="10" height="3" fill="#d9c7b0" opacity="0.73" transform="rotate(178 1024 18)"/>
<rect x="788" y="327" width="7" height="4" fill="#a8c8b8" opacity="0.56" transform="rotate(85 788 327)"/>
<rect x="987" y="688" width="11" height="4" fill="#e8e0d8" opacity="0.74" transform="rotate(56 987 688)"/>
<rect x="633" y="39" width="7" height="3" fill="#e0b8c0" opacity="0.60" transform="rotate(74 633 39)"/>
<rect x="1110" y="502" width="9" height="3" fill="#d8d0c8" opacity="0.57" transform="rotate(67 1110 502)"/>
<rect x="948" y="374" width="9" height="4" fill="#c9d0c0" opacity="0.72" transform="rotate(51 948 374)"/>
<rect x="504" y="513" width="9" height="3" fill="#c9d0c0" opacity="0.62" transform="rotate(121 504 513)"/>
<rect x="780" y="284" width="8" height="3" fill="#e0b8c0" opacity="0.56" transform="rotate(42 780 284)"/>
<rect x="662" y="659" width="6" height="3" fill="#c8b090" opacity="0.74" transform="rotate(160 662 659)"/>
<rect x="808" y="483" width="7" height="4" fill="#c0c8d8" opacity="0.78" transform="rotate(125 808 483)"/>
<rect x="993" y="356" width="10" height="4" fill="#c0c8d8" opacity="0.69" transform="rotate(157 993 356)"/>
<rect x="885" y="88" width="8" height="4" fill="#101018" opacity="0.78" transform="rotate(98 885 88)"/>
<rect x="879" y="676" width="9" height="4" fill="#d8a0a0" opacity="0.76" transform="rotate(58 879 676)"/>
<rect x="1118" y="704" width="7" height="4" fill="#d8d0c8" opacity="0.75" transform="rotate(6 1118 704)"/>
<rect x="703" y="185" width="7" height="4" fill="#d9c7b0" opacity="0.72" transform="rotate(94 703 185)"/>
<rect x="795" y="630" width="7" height="3" fill="#101018" opacity="0.51" transform="rotate(114 795 630)"/>
<rect x="1016" y="238" width="9" height="3" fill="#c0c8d8" opacity="0.74" transform="rotate(29 1016 238)"/>
<rect x="1104" y="210" width="11" height="4" fill="#d8d0c8" opacity="0.82" transform="rotate(175 1104 210)"/>
<rect x="1050" y="582" width="7" height="3" fill="#d8d0c8" opacity="0.67" transform="rotate(167 1050 582)"/>
<rect x="744" y="428" width="8" height="4" fill="#e8e0d8" opacity="0.60" transform="rotate(149 744 428)"/>
<rect x="1168" y="534" width="7" height="4" fill="#e8e0d8" opacity="0.53" transform="rotate(71 1168 534)"/>
<rect x="750" y="311" width="8" height="4" fill="#c8b090" opacity="0.64" transform="rotate(138 750 311)"/>
<rect x="1009" y="107" width="11" height="4" fill="#d8a0a0" opacity="0.65" transform="rotate(28 1009 107)"/>
<rect x="1087" y="125" width="9" height="3" fill="#c9d0c0" opacity="0.59" transform="rotate(103 1087 125)"/>
<rect x="790" y="423" width="10" height="3" fill="#d8a0a0" opacity="0.69" transform="rotate(143 790 423)"/>
<rect x="1364" y="429" width="7" height="4" fill="#c9d0c0" opacity="0.78" transform="rotate(53 1364 429)"/>
<rect x="634" y="485" width="11" height="3" fill="#a8c8b8" opacity="0.56" transform="rotate(18 634 485)"/>
<rect x="1104" y="535" width="8" height="3" fill="#101018" opacity="0.79" transform="rotate(18 1104 535)"/>
<rect x="1066" y="108" width="8" height="3" fill="#e8e0d8" opacity="0.66" transform="rotate(176 1066 108)"/>
<rect x="1289" y="639" width="7" height="3" fill="#c0c8d8" opacity="0.72" transform="rotate(153 1289 639)"/>
<rect x="1069" y="424" width="7" height="4" fill="#d8a0a0" opacity="0.74" transform="rotate(177 1069 424)"/>
<rect x="1128" y="102" width="10" height="3" fill="#d9c7b0" opacity="0.57" transform="rotate(151 1128 102)"/>
<rect x="953" y="633" width="6" height="4" fill="#e8e0d8" opacity="0.78" transform="rotate(40 953 633)"/>
<rect x="1117" y="316" width="6" height="3" fill="#e0b8c0" opacity="0.77" transform="rotate(19 1117 316)"/>
<rect x="976" y="219" width="11" height="3" fill="#c9d0c0" opacity="0.72" transform="rotate(56 976 219)"/>
<rect x="718" y="580" width="9" height="4" fill="#e0b8c0" opacity="0.60" transform="rotate(96 718 580)"/>
<rect x="1036" y="594" width="6" height="3" fill="#e8e0d8" opacity="0.85" transform="rotate(172 1036 594)"/>
<rect x="816" y="556" width="10" height="3" fill="#c0c8d8" opacity="0.72" transform="rotate(2 816 556)"/>
<rect x="840" y="451" width="8" height="4" fill="#e8e0d8" opacity="0.55" transform="rotate(131 840 451)"/>
<rect x="989" y="354" width="8" height="4" fill="#e8e0d8" opacity="0.62" transform="rotate(94 989 354)"/>
<rect x="884" y="84" width="8" height="4" fill="#c9d0c0" opacity="0.53" transform="rotate(145 884 84)"/>
<rect x="1378" y="459" width="7" height="4" fill="#d8a0a0" opacity="0.72" transform="rotate(165 1378 459)"/>
<rect x="1060" y="455" width="8" height="3" fill="#c9d0c0" opacity="0.65" transform="rotate(80 1060 455)"/>
<rect x="904" y="156" width="8" height="4" fill="#a8c8b8" opacity="0.68" transform="rotate(150 904 156)"/>
<rect x="666" y="396" width="7" height="4" fill="#a8c8b8" opacity="0.77" transform="rotate(28 666 396)"/>
<rect x="785" y="470" width="8" height="4" fill="#e8e0d8" opacity="0.54" transform="rotate(162 785 470)"/>
<rect x="746" y="519" width="11" height="3" fill="#c9d0c0" opacity="0.82" transform="rotate(137 746 519)"/>
<rect x="602" y="572" width="6" height="3" fill="#e0b8c0" opacity="0.53" transform="rotate(23 602 572)"/>
<rect x="728" y="10" width="9" height="4" fill="#c0c8d8" opacity="0.79" transform="rotate(13 728 10)"/>
<rect x="628" y="325" width="10" height="3" fill="#c9d0c0" opacity="0.69" transform="rotate(134 628 325)"/>
<rect x="1159" y="230" width="9" height="3" fill="#c0c8d8" opacity="0.74" transform="rotate(151 1159 230)"/>
<rect x="1129" y="201" width="6" height="3" fill="#d8d0c8" opacity="0.60" transform="rotate(59 1129 201)"/>
<rect x="792" y="617" width="7" height="4" fill="#c0c8d8" opacity="0.63" transform="rotate(91 792 617)"/>
<rect x="970" y="291" width="7" height="4" fill="#a8c8b8" opacity="0.83" transform="rotate(161 970 291)"/>
<rect x="862" y="178" width="11" height="4" fill="#d8d0c8" opacity="0.51" transform="rotate(146 862 178)"/>
<rect x="878" y="178" width="8" height="4" fill="#a8c8b8" opacity="0.66" transform="rotate(167 878 178)"/>
<rect x="1181" y="544" width="9" height="4" fill="#e8e0d8" opacity="0.84" transform="rotate(8 1181 544)"/>
<rect x="1131" y="276" width="7" height="4" fill="#e0c0a0" opacity="0.60" transform="rotate(101 1131 276)"/>
<rect x="863" y="406" width="9" height="3" fill="#d9c7b0" opacity="0.79" transform="rotate(100 863 406)"/>
<rect x="1035" y="166" width="10" height="4" fill="#c0c8d8" opacity="0.81" transform="rotate(150 1035 166)"/>
<rect x="922" y="124" width="7" height="3" fill="#d8d0c8" opacity="0.57" transform="rotate(161 922 124)"/>
<rect x="930" y="280" width="10" height="3" fill="#c0c8d8" opacity="0.53" transform="rotate(153 930 280)"/>
<rect x="826" y="140" width="11" height="3" fill="#e0b8c0" opacity="0.80" transform="rotate(84 826 140)"/>
<rect x="990" y="699" width="6" height="3" fill="#101018" opacity="0.73" transform="rotate(128 990 699)"/>
<rect x="1147" y="311" width="6" height="4" fill="#c9d0c0" opacity="0.77" transform="rotate(6 1147 311)"/>
<rect x="539" y="421" width="8" height="3" fill="#d8d0c8" opacity="0.66" transform="rotate(72 539 421)"/>
<rect x="707" y="247" width="11" height="4" fill="#c8b090" opacity="0.71" transform="rotate(119 707 247)"/>
<rect x="770" y="663" width="11" height="3" fill="#c8b090" opacity="0.59" transform="rotate(18 770 663)"/>
<rect x="878" y="533" width="7" height="3" fill="#d8d0c8" opacity="0.66" transform="rotate(77 878 533)"/>
<rect x="917" y="327" width="9" height="4" fill="#e0c0a0" opacity="0.74" transform="rotate(45 917 327)"/>
<rect x="1070" y="309" width="9" height="3" fill="#e0b8c0" opacity="0.67" transform="rotate(60 1070 309)"/>
<rect x="992" y="24" width="8" height="3" fill="#e0b8c0" opacity="0.76" transform="rotate(6 992 24)"/>
<rect x="889" y="321" width="7" height="3" fill="#c8b090" opacity="0.61" transform="rotate(74 889 321)"/>
<rect x="753" y="536" width="9" height="4" fill="#c8b090" opacity="0.85" transform="rotate(36 753 536)"/>
<rect x="959" y="10" width="10" height="4" fill="#e0b8c0" opacity="0.84" transform="rotate(88 959 10)"/>
<rect x="932" y="601" width="8" height="3" fill="#c9d0c0" opacity="0.67" transform="rotate(112 932 601)"/>
<rect x="947" y="251" width="9" height="3" fill="#d8d0c8" opacity="0.71" transform="rotate(78 947 251)"/>
<rect x="1370" y="75" width="10" height="3" fill="#e0c0a0" opacity="0.71" transform="rotate(158 1370 75)"/>
<rect x="1234" y="444" width="9" height="3" fill="#e8e0d8" opacity="0.82" transform="rotate(55 1234 444)"/>
<rect x="1170" y="404" width="9" height="4" fill="#e0b8c0" opacity="0.81" transform="rotate(5 1170 404)"/>
<rect x="1202" y="453" width="8" height="4" fill="#c0c8d8" opacity="0.83" transform="rotate(8 1202 453)"/>
<rect x="1275" y="656" width="6" height="4" fill="#e0c0a0" opacity="0.56" transform="rotate(6 1275 656)"/>
<rect x="1137" y="182" width="10" height="4" fill="#101018" opacity="0.71" transform="rotate(139 1137 182)"/>
<rect x="626" y="687" width="11" height="3" fill="#a8c8b8" opacity="0.83" transform="rotate(93 626 687)"/>
<rect x="1158" y="639" width="8" height="4" fill="#d9c7b0" opacity="0.83" transform="rotate(143 1158 639)"/>
<rect x="926" y="109" width="8" height="4" fill="#c9d0c0" opacity="0.61" transform="rotate(167 926 109)"/>
<rect x="898" y="684" width="10" height="4" fill="#d8a0a0" opacity="0.67" transform="rotate(83 898 684)"/>
<rect x="947" y="661" width="7" height="3" fill="#d9c7b0" opacity="0.80" transform="rotate(162 947 661)"/>
<rect x="1014" y="599" width="10" height="4" fill="#d8a0a0" opacity="0.82" transform="rotate(59 1014 599)"/>
<rect x="628" y="219" width="9" height="4" fill="#c0c8d8" opacity="0.78" transform="rotate(102 628 219)"/>
<rect x="869" y="520" width="9" height="3" fill="#e8e0d8" opacity="0.77" transform="rotate(157 869 520)"/>
<rect x="1064" y="251" width="7" height="4" fill="#d8d0c8" opacity="0.56" transform="rotate(84 1064 251)"/>
<rect x="1014" y="658" width="10" height="3" fill="#c9d0c0" opacity="0.54" transform="rotate(120 1014 658)"/>
<rect x="1045" y="691" width="9" height="3" fill="#e8e0d8" opacity="0.58" transform="rotate(71 1045 691)"/>
<rect x="1028" y="566" width="9" height="3" fill="#c0c8d8" opacity="0.65" transform="rotate(69 1028 566)"/>
<rect x="676" y="427" width="8" height="3" fill="#e0b8c0" opacity="0.61" transform="rotate(158 676 427)"/>
<rect x="1205" y="262" width="8" height="3" fill="#e8e0d8" opacity="0.68" transform="rotate(71 1205 262)"/>
<rect x="1065" y="425" width="11" height="3" fill="#c8b090" opacity="0.63" transform="rotate(69 1065 425)"/>
<rect x="938" y="80" width="9" height="3" fill="#c0c8d8" opacity="0.61" transform="rotate(93 938 80)"/>
<rect x="710" y="556" width="7" height="3" fill="#d9c7b0" opacity="0.64" transform="rotate(90 710 556)"/>
<rect x="748" y="641" width="10" height="3" fill="#e8e0d8" opacity="0.65" transform="rotate(149 748 641)"/>
<rect x="923" y="5" width="9" height="3" fill="#e8e0d8" opacity="0.61" transform="rotate(115 923 5)"/>
<rect x="597" y="544" width="9" height="3" fill="#a8c8b8" opacity="0.54" transform="rotate(78 597 544)"/>
<rect x="776" y="40" width="11" height="3" fill="#a8c8b8" opacity="0.72" transform="rotate(63 776 40)"/>
<rect x="856" y="165" width="9" height="4" fill="#a8c8b8" opacity="0.61" transform="rotate(59 856 165)"/>
<rect x="814" y="709" width="6" height="3" fill="#c9d0c0" opacity="0.81" transform="rotate(62 814 709)"/>
<rect x="912" y="163" width="8" height="4" fill="#d9c7b0" opacity="0.76" transform="rotate(96 912 163)"/>
<rect x="1134" y="248" width="10" height="3" fill="#c8b090" opacity="0.73" transform="rotate(25 1134 248)"/>
<rect x="1206" y="453" width="6" height="4" fill="#c0c8d8" opacity="0.63" transform="rotate(113 1206 453)"/>
<rect x="1185" y="443" width="11" height="4" fill="#d8a0a0" opacity="0.71" transform="rotate(137 1185 443)"/>
<rect x="1308" y="492" width="7" height="4" fill="#d8d0c8" opacity="0.58" transform="rotate(121 1308 492)"/>
<rect x="716" y="581" width="8" height="3" fill="#a8c8b8" opacity="0.77" transform="rotate(124 716 581)"/>
<rect x="1187" y="321" width="10" height="3" fill="#c8b090" opacity="0.70" transform="rotate(130 1187 321)"/>
<rect x="1053" y="562" width="10" height="4" fill="#101018" opacity="0.69" transform="rotate(135 1053 562)"/>
<rect x="917" y="273" width="8" height="3" fill="#d8d0c8" opacity="0.71" transform="rotate(141 917 273)"/>
<rect x="1061" y="228" width="9" height="3" fill="#d8a0a0" opacity="0.72" transform="rotate(124 1061 228)"/>
<rect x="885" y="314" width="9" height="4" fill="#e8e0d8" opacity="0.85" transform="rotate(131 885 314)"/>
<rect x="823" y="354" width="11" height="3" fill="#a8c8b8" opacity="0.76" transform="rotate(26 823 354)"/>
<rect x="1019" y="75" width="7" height="4" fill="#e0b8c0" opacity="0.83" transform="rotate(49 1019 75)"/>
<rect x="1037" y="197" width="9" height="4" fill="#d9c7b0" opacity="0.58" transform="rotate(46 1037 197)"/>
<rect x="1011" y="157" width="8" height="4" fill="#c0c8d8" opacity="0.50" transform="rotate(116 1011 157)"/>
<rect x="786" y="310" width="7" height="3" fill="#d8a0a0" opacity="0.65" transform="rotate(22 786 310)"/>
<rect x="774" y="53" width="9" height="4" fill="#a8c8b8" opacity="0.82" transform="rotate(8 774 53)"/>
<rect x="967" y="568" width="8" height="3" fill="#c0c8d8" opacity="0.71" transform="rotate(24 967 568)"/>
<rect x="1005" y="62" width="10" height="3" fill="#e0b8c0" opacity="0.62" transform="rotate(96 1005 62)"/>
<rect x="924" y="354" width="7" height="4" fill="#e0b8c0" opacity="0.57" transform="rotate(77 924 354)"/>
<rect x="1066" y="343" width="9" height="3" fill="#c9d0c0" opacity="0.68" transform="rotate(143 1066 343)"/>
<rect x="1057" y="358" width="9" height="3" fill="#e0b8c0" opacity="0.62" transform="rotate(14 1057 358)"/>
<rect x="617" y="281" width="10" height="3" fill="#c9d0c0" opacity="0.74" transform="rotate(98 617 281)"/>
<rect x="906" y="154" width="7" height="4" fill="#c8b090" opacity="0.74" transform="rotate(116 906 154)"/>
<rect x="1082" y="290" width="6" height="4" fill="#e0b8c0" opacity="0.67" transform="rotate(69 1082 290)"/>
<rect x="1240" y="483" width="6" height="4" fill="#a8c8b8" opacity="0.57" transform="rotate(122 1240 483)"/>
<rect x="1009" y="548" width="9" height="4" fill="#d8a0a0" opacity="0.51" transform="rotate(8 1009 548)"/>
<rect x="1041" y="509" width="6" height="4" fill="#d9c7b0" opacity="0.59" transform="rotate(49 1041 509)"/>
<rect x="788" y="648" width="7" height="3" fill="#e0c0a0" opacity="0.70" transform="rotate(114 788 648)"/>
<rect x="1215" y="692" width="6" height="4" fill="#101018" opacity="0.79" transform="rotate(19 1215 692)"/>
<rect x="970" y="562" width="8" height="3" fill="#d8d0c8" opacity="0.64" transform="rotate(26 970 562)"/>
<rect x="1141" y="630" width="6" height="3" fill="#c8b090" opacity="0.70" transform="rotate(167 1141 630)"/>
<rect x="884" y="640" width="9" height="4" fill="#d9c7b0" opacity="0.53" transform="rotate(39 884 640)"/>
<rect x="1009" y="224" width="8" height="4" fill="#e8e0d8" opacity="0.77" transform="rotate(118 1009 224)"/>
<rect x="1061" y="210" width="7" height="4" fill="#e0b8c0" opacity="0.56" transform="rotate(107 1061 210)"/>
<rect x="1188" y="241" width="7" height="3" fill="#c8b090" opacity="0.73" transform="rotate(19 1188 241)"/>
<rect x="756" y="400" width="9" height="3" fill="#101018" opacity="0.52" transform="rotate(136 756 400)"/>
<rect x="684" y="231" width="6" height="3" fill="#d8d0c8" opacity="0.64" transform="rotate(93 684 231)"/>
<rect x="1002" y="705" width="10" height="3" fill="#101018" opacity="0.54" transform="rotate(81 1002 705)"/>
<rect x="985" y="17" width="7" height="3" fill="#e0b8c0" opacity="0.74" transform="rotate(128 985 17)"/>
<rect x="998" y="654" width="8" height="4" fill="#e0b8c0" opacity="0.66" transform="rotate(157 998 654)"/>
<rect x="1320" y="620" width="10" height="3" fill="#e0b8c0" opacity="0.82" transform="rotate(63 1320 620)"/>
<rect x="924" y="312" width="9" height="4" fill="#101018" opacity="0.55" transform="rotate(169 924 312)"/>
<rect x="708" y="413" width="9" height="4" fill="#101018" opacity="0.58" transform="rotate(180 708 413)"/>
<rect x="848" y="240" width="10" height="3" fill="#c8b090" opacity="0.84" transform="rotate(130 848 240)"/>
<rect x="1195" y="653" width="6" height="3" fill="#d8a0a0" opacity="0.72" transform="rotate(169 1195 653)"/>
<rect x="828" y="265" width="8" height="4" fill="#d8d0c8" opacity="0.59" transform="rotate(162 828 265)"/>
<rect x="910" y="656" width="8" height="4" fill="#e0b8c0" opacity="0.57" transform="rotate(53 910 656)"/>
<rect x="504" y="434" width="10" height="3" fill="#c0c8d8" opacity="0.64" transform="rotate(147 504 434)"/>
<rect x="1134" y="603" width="11" height="3" fill="#c0c8d8" opacity="0.56" transform="rotate(166 1134 603)"/>
<rect x="1411" y="308" width="7" height="4" fill="#e0b8c0" opacity="0.68" transform="rotate(180 1411 308)"/>
<rect x="911" y="535" width="11" height="4" fill="#e0c0a0" opacity="0.75" transform="rotate(48 911 535)"/>
<rect x="1072" y="335" width="9" height="3" fill="#c0c8d8" opacity="0.79" transform="rotate(45 1072 335)"/>
<rect x="1399" y="565" width="9" height="3" fill="#101018" opacity="0.73" transform="rotate(134 1399 565)"/>
<rect x="950" y="285" width="10" height="4" fill="#e8e0d8" opacity="0.67" transform="rotate(77 950 285)"/>
<rect x="1259" y="387" width="8" height="4" fill="#c9d0c0" opacity="0.64" transform="rotate(55 1259 387)"/>
<rect x="609" y="559" width="10" height="4" fill="#101018" opacity="0.73" transform="rotate(153 609 559)"/>
<rect x="842" y="342" width="6" height="4" fill="#101018" opacity="0.63" transform="rotate(8 842 342)"/>
<rect x="863" y="409" width="9" height="4" fill="#d8d0c8" opacity="0.68" transform="rotate(173 863 409)"/>
<rect x="1099" y="121" width="7" height="3" fill="#d8d0c8" opacity="0.68" transform="rotate(44 1099 121)"/>
<rect x="735" y="89" width="7" height="3" fill="#e0c0a0" opacity="0.61" transform="rotate(16 735 89)"/>
<rect x="1093" y="94" width="10" height="3" fill="#c9d0c0" opacity="0.68" transform="rotate(53 1093 94)"/>
<rect x="816" y="105" width="7" height="3" fill="#e0b8c0" opacity="0.64" transform="rotate(81 816 105)"/>
<rect x="724" y="487" width="9" height="3" fill="#c9d0c0" opacity="0.69" transform="rotate(144 724 487)"/>
<rect x="963" y="432" width="10" height="4" fill="#c9d0c0" opacity="0.70" transform="rotate(113 963 432)"/>
<rect x="858" y="371" width="10" height="3" fill="#d8a0a0" opacity="0.75" transform="rotate(18 858 371)"/>
<rect x="1119" y="571" width="7" height="4" fill="#c8b090" opacity="0.62" transform="rotate(125 1119 571)"/>
<rect x="822" y="466" width="8" height="4" fill="#c0c8d8" opacity="0.61" transform="rotate(8 822 466)"/>
<rect x="1131" y="365" width="9" height="3" fill="#d8d0c8" opacity="0.69" transform="rotate(155 1131 365)"/>
<rect x="814" y="660" width="10" height="3" fill="#e8e0d8" opacity="0.73" transform="rotate(15 814 660)"/>
<rect x="855" y="682" width="7" height="4" fill="#d8a0a0" opacity="0.82" transform="rotate(97 855 682)"/>
<rect x="769" y="458" width="6" height="3" fill="#d8a0a0" opacity="0.63" transform="rotate(43 769 458)"/>
<rect x="674" y="635" width="7" height="3" fill="#e0b8c0" opacity="0.82" transform="rotate(101 674 635)"/>
<rect x="875" y="266" width="9" height="4" fill="#e0c0a0" opacity="0.50" transform="rotate(60 875 266)"/>
<rect x="877" y="645" width="8" height="4" fill="#c8b090" opacity="0.67" transform="rotate(27 877 645)"/>
<rect x="1241" y="495" width="11" height="3" fill="#a8c8b8" opacity="0.61" transform="rotate(16 1241 495)"/>
<rect x="1013" y="241" width="11" height="4" fill="#e0b8c0" opacity="0.70" transform="rotate(101 1013 241)"/>
<rect x="501" y="377" width="11" height="3" fill="#a8c8b8" opacity="0.54" transform="rotate(78 501 377)"/>
<rect x="1005" y="420" width="11" height="4" fill="#e8e0d8" opacity="0.58" transform="rotate(173 1005 420)"/>
<rect x="1214" y="349" width="11" height="4" fill="#c0c8d8" opacity="0.77" transform="rotate(70 1214 349)"/>
<rect x="989" y="409" width="7" height="3" fill="#a8c8b8" opacity="0.51" transform="rotate(154 989 409)"/>
<rect x="1151" y="330" width="10" height="4" fill="#e0b8c0" opacity="0.80" transform="rotate(147 1151 330)"/>
<rect x="1403" y="518" width="9" height="3" fill="#c8b090" opacity="0.64" transform="rotate(105 1403 518)"/>
<rect x="1125" y="539" width="10" height="4" fill="#d9c7b0" opacity="0.71" transform="rotate(26 1125 539)"/>
<rect x="822" y="482" width="10" height="4" fill="#c9d0c0" opacity="0.50" transform="rotate(169 822 482)"/>
<rect x="820" y="334" width="6" height="4" fill="#e0c0a0" opacity="0.63" transform="rotate(125 820 334)"/>
<rect x="1224" y="412" width="11" height="4" fill="#d9c7b0" opacity="0.62" transform="rotate(46 1224 412)"/>
<rect x="1045" y="208" width="9" height="4" fill="#101018" opacity="0.82" transform="rotate(83 1045 208)"/>
<rect x="986" y="42" width="8" height="3" fill="#e0b8c0" opacity="0.66" transform="rotate(14 986 42)"/>
<rect x="1169" y="572" width="8" height="4" fill="#c0c8d8" opacity="0.64" transform="rotate(85 1169 572)"/>
<rect x="1210" y="135" width="9" height="3" fill="#e0b8c0" opacity="0.62" transform="rotate(166 1210 135)"/>
<rect x="1011" y="288" width="7" height="3" fill="#d8d0c8" opacity="0.55" transform="rotate(123 1011 288)"/>
<rect x="1232" y="176" width="7" height="3" fill="#101018" opacity="0.80" transform="rotate(136 1232 176)"/>
<rect x="586" y="337" width="7" height="3" fill="#c9d0c0" opacity="0.72" transform="rotate(81 586 337)"/>
<rect x="864" y="251" width="8" height="4" fill="#a8c8b8" opacity="0.66" transform="rotate(168 864 251)"/>
<rect x="905" y="433" width="9" height="4" fill="#d8d0c8" opacity="0.82" transform="rotate(17 905 433)"/>
<rect x="872" y="67" width="7" height="4" fill="#e0b8c0" opacity="0.84" transform="rotate(136 872 67)"/>
<rect x="763" y="650" width="8" height="4" fill="#c9d0c0" opacity="0.81" transform="rotate(52 763 650)"/>
<rect x="884" y="716" width="9" height="4" fill="#a8c8b8" opacity="0.68" transform="rotate(45 884 716)"/>
<rect x="1115" y="351" width="10" height="3" fill="#c8b090" opacity="0.52" transform="rotate(41 1115 351)"/>
<rect x="954" y="214" width="11" height="4" fill="#c9d0c0" opacity="0.70" transform="rotate(0 954 214)"/>
<rect x="626" y="712" width="11" height="3" fill="#c8b090" opacity="0.64" transform="rotate(136 626 712)"/>
<rect x="784" y="522" width="10" height="3" fill="#c8b090" opacity="0.76" transform="rotate(45 784 522)"/>
<rect x="916" y="546" width="6" height="4" fill="#d9c7b0" opacity="0.77" transform="rotate(171 916 546)"/>
<rect x="738" y="275" width="11" height="4" fill="#101018" opacity="0.75" transform="rotate(165 738 275)"/>
<rect x="1088" y="632" width="9" height="4" fill="#c0c8d8" opacity="0.77" transform="rotate(56 1088 632)"/>
<rect x="847" y="621" width="6" height="4" fill="#e0b8c0" opacity="0.79" transform="rotate(13 847 621)"/>
<rect x="1457" y="258" width="10" height="4" fill="#c9d0c0" opacity="0.59" transform="rotate(142 1457 258)"/>
<rect x="634" y="274" width="11" height="3" fill="#e0c0a0" opacity="0.61" transform="rotate(40 634 274)"/>
<rect x="910" y="-9" width="8" height="4" fill="#101018" opacity="0.56" transform="rotate(144 910 -9)"/>
<rect x="945" y="377" width="7" height="3" fill="#c8b090" opacity="0.64" transform="rotate(31 945 377)"/>
<rect x="942" y="546" width="9" height="4" fill="#c0c8d8" opacity="0.68" transform="rotate(36 942 546)"/>
<rect x="952" y="415" width="10" height="3" fill="#a8c8b8" opacity="0.70" transform="rotate(153 952 415)"/>
<rect x="591" y="288" width="6" height="3" fill="#c9d0c0" opacity="0.67" transform="rotate(56 591 288)"/>
<rect x="1029" y="561" width="7" height="4" fill="#101018" opacity="0.70" transform="rotate(95 1029 561)"/>
<rect x="978" y="277" width="10" height="4" fill="#d8a0a0" opacity="0.66" transform="rotate(168 978 277)"/>
<rect x="1069" y="693" width="7" height="3" fill="#e0c0a0" opacity="0.72" transform="rotate(163 1069 693)"/>
<rect x="833" y="417" width="8" height="3" fill="#d8a0a0" opacity="0.53" transform="rotate(176 833 417)"/>
<rect x="670" y="715" width="7" height="3" fill="#c8b090" opacity="0.63" transform="rotate(98 670 715)"/>
<rect x="607" y="335" width="7" height="3" fill="#c8b090" opacity="0.61" transform="rotate(75 607 335)"/>
<rect x="868" y="97" width="9" height="4" fill="#e0b8c0" opacity="0.66" transform="rotate(14 868 97)"/>
<rect x="1216" y="140" width="10" height="3" fill="#d8d0c8" opacity="0.85" transform="rotate(90 1216 140)"/>
<rect x="1085" y="481" width="10" height="4" fill="#e8e0d8" opacity="0.79" transform="rotate(118 1085 481)"/>
<rect x="1268" y="621" width="6" height="4" fill="#c8b090" opacity="0.54" transform="rotate(31 1268 621)"/>
<rect x="694" y="411" width="7" height="3" fill="#a8c8b8" opacity="0.54" transform="rotate(46 694 411)"/>
<rect x="905" y="271" width="9" height="4" fill="#e8e0d8" opacity="0.67" transform="rotate(154 905 271)"/>
<rect x="1303" y="296" width="8" height="3" fill="#c8b090" opacity="0.73" transform="rotate(125 1303 296)"/>
<rect x="910" y="508" width="6" height="4" fill="#c9d0c0" opacity="0.54" transform="rotate(108 910 508)"/>
<rect x="955" y="260" width="8" height="4" fill="#a8c8b8" opacity="0.70" transform="rotate(67 955 260)"/>
<rect x="915" y="399" width="9" height="4" fill="#d9c7b0" opacity="0.84" transform="rotate(144 915 399)"/>
<rect x="831" y="496" width="8" height="3" fill="#e8e0d8" opacity="0.76" transform="rotate(141 831 496)"/>
<rect x="830" y="43" width="8" height="4" fill="#c0c8d8" opacity="0.75" transform="rotate(79 830 43)"/>
<rect x="1064" y="621" width="6" height="3" fill="#e0c0a0" opacity="0.66" transform="rotate(90 1064 621)"/>
<rect x="874" y="255" width="7" height="3" fill="#d8d0c8" opacity="0.60" transform="rotate(63 874 255)"/>
<rect x="974" y="237" width="8" height="4" fill="#c8b090" opacity="0.60" transform="rotate(15 974 237)"/>
<rect x="537" y="586" width="6" height="3" fill="#c8b090" opacity="0.58" transform="rotate(37 537 586)"/>
<rect x="983" y="493" width="9" height="4" fill="#101018" opacity="0.71" transform="rotate(7 983 493)"/>
<rect x="1251" y="219" width="9" height="3" fill="#c8b090" opacity="0.65" transform="rotate(134 1251 219)"/>
<rect x="887" y="462" width="7" height="4" fill="#e0b8c0" opacity="0.59" transform="rotate(42 887 462)"/>
<rect x="1088" y="345" width="10" height="3" fill="#c0c8d8" opacity="0.78" transform="rotate(75 1088 345)"/>
<rect x="1056" y="76" width="8" height="4" fill="#e0b8c0" opacity="0.63" transform="rotate(85 1056 76)"/>
<rect x="1282" y="612" width="9" height="3" fill="#101018" opacity="0.55" transform="rotate(90 1282 612)"/>
<rect x="1287" y="341" width="7" height="3" fill="#e8e0d8" opacity="0.68" transform="rotate(166 1287 341)"/>
<rect x="1274" y="435" width="6" height="4" fill="#e8e0d8" opacity="0.73" transform="rotate(30 1274 435)"/>
<rect x="873" y="440" width="11" height="3" fill="#e8e0d8" opacity="0.75" transform="rotate(2 873 440)"/>
<rect x="762" y="402" width="8" height="3" fill="#c9d0c0" opacity="0.55" transform="rotate(134 762 402)"/>
<rect x="1166" y="359" width="7" height="3" fill="#d8a0a0" opacity="0.57" transform="rotate(93 1166 359)"/>
<rect x="824" y="194" width="6" height="4" fill="#c9d0c0" opacity="0.65" transform="rotate(17 824 194)"/>
<rect x="976" y="656" width="6" height="3" fill="#d8d0c8" opacity="0.62" transform="rotate(70 976 656)"/>
<rect x="1039" y="468" width="9" height="3" fill="#e0b8c0" opacity="0.79" transform="rotate(104 1039 468)"/>
<rect x="789" y="245" width="7" height="4" fill="#d9c7b0" opacity="0.84" transform="rotate(100 789 245)"/>
<rect x="1093" y="612" width="10" height="3" fill="#101018" opacity="0.67" transform="rotate(179 1093 612)"/>
<rect x="1072" y="146" width="10" height="4" fill="#c9d0c0" opacity="0.84" transform="rotate(172 1072 146)"/>
<rect x="969" y="651" width="7" height="4" fill="#d8d0c8" opacity="0.84" transform="rotate(161 969 651)"/>
<rect x="714" y="302" width="6" height="3" fill="#d9c7b0" opacity="0.53" transform="rotate(32 714 302)"/>
<rect x="1100" y="614" width="9" height="3" fill="#101018" opacity="0.82" transform="rotate(173 1100 614)"/>
<rect x="1247" y="41" width="8" height="3" fill="#a8c8b8" opacity="0.56" transform="rotate(108 1247 41)"/>
<rect x="1094" y="446" width="10" height="3" fill="#c8b090" opacity="0.69" transform="rotate(91 1094 446)"/>
<rect x="1055" y="354" width="7" height="3" fill="#e8e0d8" opacity="0.63" transform="rotate(5 1055 354)"/>
<rect x="909" y="371" width="7" height="3" fill="#c8b090" opacity="0.59" transform="rotate(122 909 371)"/>
<circle cx="529" cy="192" r="12" fill="#b8bce8" opacity=".3" filter="url(#b6)"/>
<circle cx="529" cy="192" r="6.5" fill="#bfc1cc"/>
<circle cx="578" cy="193" r="12" fill="#b8bce8" opacity=".3" filter="url(#b6)"/>
<circle cx="578" cy="193" r="6.5" fill="#bfc1cc"/>
<circle cx="634" cy="191" r="12" fill="#b8bce8" opacity=".3" filter="url(#b6)"/>
<circle cx="634" cy="191" r="6.5" fill="#bfc1cc"/>
<circle cx="681" cy="193" r="11" fill="#b8bce8" opacity=".3" filter="url(#b6)"/>
<circle cx="681" cy="193" r="6.0" fill="#bfc1cc"/>
<circle cx="827" cy="195" r="22" fill="#b8bce8" opacity=".3" filter="url(#b6)"/>
<circle cx="827" cy="195" r="12.0" fill="#bfc1cc"/>
<circle cx="1107" cy="196" r="22" fill="#b8bce8" opacity=".3" filter="url(#b6)"/>
<circle cx="1107" cy="196" r="12.0" fill="#bfc1cc"/>
<circle cx="925" cy="229" r="18" fill="#b8bce8" opacity=".3" filter="url(#b6)"/>
<circle cx="925" cy="229" r="10.0" fill="#bfc1cc"/>
<circle cx="1018" cy="229" r="18" fill="#b8bce8" opacity=".3" filter="url(#b6)"/>
<circle cx="1018" cy="229" r="10.0" fill="#bfc1cc"/>
<circle cx="1251" cy="204" r="11" fill="#b8bce8" opacity=".3" filter="url(#b6)"/>
<circle cx="1251" cy="204" r="6.0" fill="#bfc1cc"/>
<circle cx="1300" cy="201" r="12" fill="#b8bce8" opacity=".3" filter="url(#b6)"/>
<circle cx="1300" cy="201" r="6.5" fill="#bfc1cc"/>
<circle cx="1349" cy="201" r="12" fill="#b8bce8" opacity=".3" filter="url(#b6)"/>
<circle cx="1349" cy="201" r="6.5" fill="#bfc1cc"/>
<circle cx="1397" cy="207" r="12" fill="#b8bce8" opacity=".3" filter="url(#b6)"/>
<circle cx="1397" cy="207" r="6.5" fill="#bfc1cc"/>
<circle cx="683" cy="295" r="20" fill="#b8bce8" opacity=".3" filter="url(#b6)"/>
<circle cx="683" cy="295" r="11.0" fill="#bfc1cc"/>
<circle cx="1245" cy="301" r="20" fill="#b8bce8" opacity=".3" filter="url(#b6)"/>
<circle cx="1245" cy="301" r="11.0" fill="#bfc1cc"/>
<circle cx="497" cy="362" r="20" fill="#b8bce8" opacity=".3" filter="url(#b6)"/>
<circle cx="497" cy="362" r="11.0" fill="#bfc1cc"/>
<circle cx="1428" cy="374" r="18" fill="#b8bce8" opacity=".3" filter="url(#b6)"/>
<circle cx="1428" cy="374" r="10.0" fill="#bfc1cc"/>
<circle cx="529" cy="453" r="13" fill="#b8bce8" opacity=".3" filter="url(#b6)"/>
<circle cx="529" cy="453" r="7.0" fill="#8e92b0"/>
<circle cx="1397" cy="465" r="13" fill="#b8bce8" opacity=".3" filter="url(#b6)"/>
<circle cx="1397" cy="465" r="7.0" fill="#8e92b0"/>
<g filter="url(#b3)" opacity=".8">
<path d="M588 700 L590 600 Q596 576 624 574 Q652 578 656 604 L660 700Z" fill="#1c1b36"/>
<ellipse cx="626" cy="556" rx="15" ry="19" fill="#6e6c88"/>
<path d="M607 548 Q606 524 625 521 Q646 524 644 550 Q626 540 607 548Z" fill="#55524e"/>
<path d="M604 652 L724 612" stroke="#8a8898" stroke-width="4"/><path d="M594 640 Q620 630 632 650 Q626 670 600 666Z" fill="#4a3440"/><rect x="716" y="606" width="14" height="9" rx="3" fill="#b0a8a8" transform="rotate(-18 716 606)"/>
<path d="M950 600 Q952 575 978 572 Q1004 575 1008 600 L1010 650 L950 650Z" fill="#6c6a8c"/>
<path d="M952 562 Q954 536 978 534 Q1002 536 1006 562 L1008 598 Q990 590 978 594 Q964 590 950 598Z" fill="#7e7a98"/>
<path d="M1004 585 L1022 540 L1034 488" stroke="#7a7690" stroke-width="8" stroke-linecap="round" fill="none"/>
<path d="M952 650 L1006 650 L1012 700 L948 700Z" fill="#6a4660"/>
<path d="M1130 700 L1132 600 Q1140 580 1160 578 Q1184 580 1190 604 L1194 700Z" fill="#4c4c78"/>
<ellipse cx="1160" cy="553" rx="15" ry="18" fill="#7a78a0"/><path d="M1144 546 Q1146 530 1160 529 Q1176 530 1176 548 Q1160 538 1144 546Z" fill="#8a8098"/>
<path d="M1168 618 L1262 556" stroke="#9a8a88" stroke-width="4"/>
<path d="M1100 560 L1130 700" stroke="#7c7898" stroke-width="2" opacity=".7"/>
<ellipse cx="1452" cy="598" rx="15" ry="19" fill="#2c2a44"/><path d="M1418 640 Q1428 620 1452 618 Q1480 620 1488 650 L1490 720 L1418 720Z" fill="#24233c"/><rect x="1380" y="660" width="140" height="14" fill="#2a2944"/>
</g>
<ellipse cx="980" cy="790" rx="820" ry="230" fill="url(#r26)"/>
<ellipse cx="980" cy="1000" rx="1000" ry="220" fill="url(#r27)"/>
<ellipse cx="300" cy="1080" rx="300" ry="160" fill="url(#r28)"/>
<ellipse cx="60" cy="880" rx="170" ry="240" fill="url(#r29)"/>
<ellipse cx="1930" cy="1020" rx="160" ry="200" fill="url(#r30)"/>
<ellipse cx="1750" cy="1050" rx="300" ry="180" fill="url(#r31)"/>
<g fill="#0c0c18" opacity=".82" filter="url(#b3)"><path d="M717.5 628 L724.9 661.0 L718.0 710 L730.0 710 L733.9 661.0 L724.5 628Z" fill="#0e0d20"/><ellipse cx="721" cy="622" rx="5.5" ry="7.5" fill="#0e0d20"/><path d="M721 622 L714.6 612.9" stroke="#0e0d20" stroke-width="2.2" stroke-linecap="round"/><path d="M721 622 L718.3 608.4" stroke="#0e0d20" stroke-width="2.2" stroke-linecap="round"/><path d="M721 622 L722.8 607.5" stroke="#0e0d20" stroke-width="2.2" stroke-linecap="round"/><path d="M721 622 L726.5 610.2" stroke="#0e0d20" stroke-width="2.2" stroke-linecap="round"/><path d="M721 622 L729.2 617.5" stroke="#0e0d20" stroke-width="2.2" stroke-linecap="round"/><path d="M787.1 613 L799.2 658.5 L793.4 720 L806.6 720 L809.2 658.5 L794.9 613Z" fill="#0e0d20"/><ellipse cx="791" cy="607" rx="6.1" ry="8.2" fill="#0e0d20"/><path d="M791 607 L784.0 597.0" stroke="#0e0d20" stroke-width="2.4" stroke-linecap="round"/><path d="M791 607 L788.0 592.0" stroke="#0e0d20" stroke-width="2.4" stroke-linecap="round"/><path d="M791 607 L793.0 591.0" stroke="#0e0d20" stroke-width="2.4" stroke-linecap="round"/><path d="M791 607 L797.0 594.0" stroke="#0e0d20" stroke-width="2.4" stroke-linecap="round"/><path d="M791 607 L800.0 602.0" stroke="#0e0d20" stroke-width="2.4" stroke-linecap="round"/><path d="M746.5 666 L739.5 685.0 L729.0 720 L741.0 720 L748.5 685.0 L753.5 666Z" fill="#0e0d20"/><ellipse cx="750" cy="660" rx="5.5" ry="7.5" fill="#0e0d20"/><path d="M750 660 L743.6 650.9" stroke="#0e0d20" stroke-width="2.2" stroke-linecap="round"/><path d="M750 660 L747.3 646.4" stroke="#0e0d20" stroke-width="2.2" stroke-linecap="round"/><path d="M750 660 L751.8 645.5" stroke="#0e0d20" stroke-width="2.2" stroke-linecap="round"/><path d="M750 660 L755.5 648.2" stroke="#0e0d20" stroke-width="2.2" stroke-linecap="round"/><path d="M750 660 L758.2 655.5" stroke="#0e0d20" stroke-width="2.2" stroke-linecap="round"/><path d="M901.1 600 L890.8 647.0 L879.4 710 L892.6 710 L900.8 647.0 L908.9 600Z" fill="#0e0d20"/><ellipse cx="905" cy="594" rx="6.1" ry="8.2" fill="#0e0d20"/><path d="M905 594 L898.0 584.0" stroke="#0e0d20" stroke-width="2.4" stroke-linecap="round"/><path d="M905 594 L902.0 579.0" stroke="#0e0d20" stroke-width="2.4" stroke-linecap="round"/><path d="M905 594 L907.0 578.0" stroke="#0e0d20" stroke-width="2.4" stroke-linecap="round"/><path d="M905 594 L911.0 581.0" stroke="#0e0d20" stroke-width="2.4" stroke-linecap="round"/><path d="M905 594 L914.0 589.0" stroke="#0e0d20" stroke-width="2.4" stroke-linecap="round"/><path d="M960.5 628 L963.1 666.0 L970.0 720 L982.0 720 L972.1 666.0 L967.5 628Z" fill="#0e0d20"/><ellipse cx="964" cy="622" rx="5.5" ry="7.5" fill="#0e0d20"/><path d="M964 622 L957.6 612.9" stroke="#0e0d20" stroke-width="2.2" stroke-linecap="round"/><path d="M964 622 L961.3 608.4" stroke="#0e0d20" stroke-width="2.2" stroke-linecap="round"/><path d="M964 622 L965.8 607.5" stroke="#0e0d20" stroke-width="2.2" stroke-linecap="round"/><path d="M964 622 L969.5 610.2" stroke="#0e0d20" stroke-width="2.2" stroke-linecap="round"/><path d="M964 622 L972.2 617.5" stroke="#0e0d20" stroke-width="2.2" stroke-linecap="round"/><path d="M991.9 647 L982.6 675.5 L986.6 720 L997.4 720 L990.6 675.5 L998.1 647Z" fill="#0e0d20"/><ellipse cx="995" cy="641" rx="5.0" ry="6.8" fill="#0e0d20"/><path d="M995 641 L989.3 632.8" stroke="#0e0d20" stroke-width="2.0" stroke-linecap="round"/><path d="M995 641 L992.5 628.7" stroke="#0e0d20" stroke-width="2.0" stroke-linecap="round"/><path d="M995 641 L996.6 627.9" stroke="#0e0d20" stroke-width="2.0" stroke-linecap="round"/><path d="M995 641 L999.9 630.4" stroke="#0e0d20" stroke-width="2.0" stroke-linecap="round"/><path d="M995 641 L1002.4 636.9" stroke="#0e0d20" stroke-width="2.0" stroke-linecap="round"/><path d="M1112.2 588 L1100.2 646.0 L1103.4 720 L1116.6 720 L1110.2 646.0 L1119.8 588Z" fill="#0e0d20"/><ellipse cx="1116" cy="582" rx="6.1" ry="8.2" fill="#0e0d20"/><path d="M1116 582 L1109.0 572.0" stroke="#0e0d20" stroke-width="2.4" stroke-linecap="round"/><path d="M1116 582 L1113.0 567.0" stroke="#0e0d20" stroke-width="2.4" stroke-linecap="round"/><path d="M1116 582 L1118.0 566.0" stroke="#0e0d20" stroke-width="2.4" stroke-linecap="round"/><path d="M1116 582 L1122.0 569.0" stroke="#0e0d20" stroke-width="2.4" stroke-linecap="round"/><path d="M1116 582 L1125.0 577.0" stroke="#0e0d20" stroke-width="2.4" stroke-linecap="round"/><path d="M1142.8 579 L1162.8 641.5 L1173.8 720 L1188.2 720 L1173.6 641.5 L1151.2 579Z" fill="#0e0d20"/><ellipse cx="1147" cy="573" rx="6.6" ry="9.0" fill="#0e0d20"/><path d="M1147 573 L1139.4 562.1" stroke="#0e0d20" stroke-width="2.6" stroke-linecap="round"/><path d="M1147 573 L1143.7 556.6" stroke="#0e0d20" stroke-width="2.6" stroke-linecap="round"/><path d="M1147 573 L1149.2 555.5" stroke="#0e0d20" stroke-width="2.6" stroke-linecap="round"/><path d="M1147 573 L1153.5 558.8" stroke="#0e0d20" stroke-width="2.6" stroke-linecap="round"/><path d="M1147 573 L1156.8 567.5" stroke="#0e0d20" stroke-width="2.6" stroke-linecap="round"/><path d="M1090.5 647 L1078.7 675.5 L1082.0 720 L1094.0 720 L1087.7 675.5 L1097.5 647Z" fill="#0e0d20"/><ellipse cx="1094" cy="641" rx="5.5" ry="7.5" fill="#0e0d20"/><path d="M1094 641 L1087.6 631.9" stroke="#0e0d20" stroke-width="2.2" stroke-linecap="round"/><path d="M1094 641 L1091.3 627.4" stroke="#0e0d20" stroke-width="2.2" stroke-linecap="round"/><path d="M1094 641 L1095.8 626.5" stroke="#0e0d20" stroke-width="2.2" stroke-linecap="round"/><path d="M1094 641 L1099.5 629.2" stroke="#0e0d20" stroke-width="2.2" stroke-linecap="round"/><path d="M1094 641 L1102.2 636.5" stroke="#0e0d20" stroke-width="2.2" stroke-linecap="round"/><path d="M1245.5 616 L1244.1 655.0 L1250.0 710 L1262.0 710 L1253.1 655.0 L1252.5 616Z" fill="#0e0d20"/><ellipse cx="1249" cy="610" rx="5.5" ry="7.5" fill="#0e0d20"/><path d="M1249 610 L1242.6 600.9" stroke="#0e0d20" stroke-width="2.2" stroke-linecap="round"/><path d="M1249 610 L1246.3 596.4" stroke="#0e0d20" stroke-width="2.2" stroke-linecap="round"/><path d="M1249 610 L1250.8 595.5" stroke="#0e0d20" stroke-width="2.2" stroke-linecap="round"/><path d="M1249 610 L1254.5 598.2" stroke="#0e0d20" stroke-width="2.2" stroke-linecap="round"/><path d="M1249 610 L1257.2 605.5" stroke="#0e0d20" stroke-width="2.2" stroke-linecap="round"/><path d="M1301.5 616 L1287.3 655.0 L1290.0 710 L1302.0 710 L1296.3 655.0 L1308.5 616Z" fill="#0e0d20"/><ellipse cx="1305" cy="610" rx="5.5" ry="7.5" fill="#0e0d20"/><path d="M1305 610 L1298.6 600.9" stroke="#0e0d20" stroke-width="2.2" stroke-linecap="round"/><path d="M1305 610 L1302.3 596.4" stroke="#0e0d20" stroke-width="2.2" stroke-linecap="round"/><path d="M1305 610 L1306.8 595.5" stroke="#0e0d20" stroke-width="2.2" stroke-linecap="round"/><path d="M1305 610 L1310.5 598.2" stroke="#0e0d20" stroke-width="2.2" stroke-linecap="round"/><path d="M1305 610 L1313.2 605.5" stroke="#0e0d20" stroke-width="2.2" stroke-linecap="round"/><path d="M556.5 646 L569.5 680.0 L564.0 730 L576.0 730 L578.5 680.0 L563.5 646Z" fill="#0e0d20"/><ellipse cx="560" cy="640" rx="5.5" ry="7.5" fill="#0e0d20"/><path d="M560 640 L553.6 630.9" stroke="#0e0d20" stroke-width="2.2" stroke-linecap="round"/><path d="M560 640 L557.3 626.4" stroke="#0e0d20" stroke-width="2.2" stroke-linecap="round"/><path d="M560 640 L561.8 625.5" stroke="#0e0d20" stroke-width="2.2" stroke-linecap="round"/><path d="M560 640 L565.5 628.2" stroke="#0e0d20" stroke-width="2.2" stroke-linecap="round"/><path d="M560 640 L568.2 635.5" stroke="#0e0d20" stroke-width="2.2" stroke-linecap="round"/><path d="M1356.5 636 L1341.5 670.0 L1344.0 720 L1356.0 720 L1350.5 670.0 L1363.5 636Z" fill="#0e0d20"/><ellipse cx="1360" cy="630" rx="5.5" ry="7.5" fill="#0e0d20"/><path d="M1360 630 L1353.6 620.9" stroke="#0e0d20" stroke-width="2.2" stroke-linecap="round"/><path d="M1360 630 L1357.3 616.4" stroke="#0e0d20" stroke-width="2.2" stroke-linecap="round"/><path d="M1360 630 L1361.8 615.5" stroke="#0e0d20" stroke-width="2.2" stroke-linecap="round"/><path d="M1360 630 L1365.5 618.2" stroke="#0e0d20" stroke-width="2.2" stroke-linecap="round"/><path d="M1360 630 L1368.2 625.5" stroke="#0e0d20" stroke-width="2.2" stroke-linecap="round"/><ellipse cx="209" cy="728" rx="22" ry="26"/><ellipse cx="209" cy="782" rx="57" ry="39"/><ellipse cx="257" cy="729" rx="18" ry="21"/><ellipse cx="257" cy="774" rx="46" ry="32"/><ellipse cx="301" cy="740" rx="17" ry="20"/><ellipse cx="301" cy="783" rx="45" ry="31"/><ellipse cx="321" cy="740" rx="21" ry="24"/><ellipse cx="321" cy="792" rx="54" ry="37"/><ellipse cx="384" cy="748" rx="20" ry="24"/><ellipse cx="384" cy="799" rx="53" ry="36"/><ellipse cx="406" cy="701" rx="20" ry="23"/><ellipse cx="406" cy="750" rx="51" ry="35"/><ellipse cx="442" cy="712" rx="17" ry="20"/><ellipse cx="442" cy="754" rx="44" ry="30"/><ellipse cx="488" cy="742" rx="20" ry="23"/><ellipse cx="488" cy="791" rx="51" ry="35"/><ellipse cx="536" cy="733" rx="19" ry="23"/><ellipse cx="536" cy="781" rx="50" ry="34"/><ellipse cx="590" cy="750" rx="22" ry="25"/><ellipse cx="590" cy="803" rx="56" ry="38"/><ellipse cx="620" cy="711" rx="18" ry="22"/><ellipse cx="620" cy="757" rx="48" ry="33"/><ellipse cx="667" cy="720" rx="22" ry="25"/><ellipse cx="667" cy="773" rx="56" ry="38"/><ellipse cx="717" cy="742" rx="17" ry="20"/><ellipse cx="717" cy="784" rx="44" ry="30"/><ellipse cx="749" cy="723" rx="22" ry="26"/><ellipse cx="749" cy="779" rx="58" ry="39"/><ellipse cx="770" cy="731" rx="21" ry="25"/><ellipse cx="770" cy="784" rx="55" ry="37"/><ellipse cx="812" cy="717" rx="22" ry="26"/><ellipse cx="812" cy="772" rx="58" ry="39"/><ellipse cx="866" cy="712" rx="17" ry="20"/><ellipse cx="866" cy="755" rx="45" ry="31"/><ellipse cx="917" cy="709" rx="20" ry="23"/><ellipse cx="917" cy="758" rx="52" ry="35"/><ellipse cx="942" cy="737" rx="18" ry="21"/><ellipse cx="942" cy="780" rx="45" ry="31"/><ellipse cx="982" cy="721" rx="18" ry="21"/><ellipse cx="982" cy="766" rx="47" ry="32"/><ellipse cx="1044" cy="740" rx="19" ry="22"/><ellipse cx="1044" cy="786" rx="48" ry="33"/><ellipse cx="1071" cy="720" rx="22" ry="25"/><ellipse cx="1071" cy="773" rx="56" ry="38"/><ellipse cx="1117" cy="749" rx="18" ry="21"/><ellipse cx="1117" cy="794" rx="47" ry="32"/><ellipse cx="1173" cy="716" rx="18" ry="22"/><ellipse cx="1173" cy="762" rx="48" ry="33"/><ellipse cx="1186" cy="729" rx="18" ry="21"/><ellipse cx="1186" cy="774" rx="47" ry="32"/><ellipse cx="1237" cy="723" rx="22" ry="26"/><ellipse cx="1237" cy="778" rx="57" ry="39"/><ellipse cx="1291" cy="743" rx="18" ry="21"/><ellipse cx="1291" cy="787" rx="46" ry="32"/><ellipse cx="1334" cy="741" rx="18" ry="21"/><ellipse cx="1334" cy="786" rx="47" ry="32"/><ellipse cx="1364" cy="747" rx="18" ry="21"/><ellipse cx="1364" cy="791" rx="46" ry="32"/><ellipse cx="1418" cy="730" rx="19" ry="23"/><ellipse cx="1418" cy="778" rx="50" ry="34"/><ellipse cx="1427" cy="748" rx="18" ry="21"/><ellipse cx="1427" cy="793" rx="47" ry="32"/><ellipse cx="1479" cy="741" rx="20" ry="24"/><ellipse cx="1479" cy="791" rx="52" ry="36"/><ellipse cx="1517" cy="736" rx="17" ry="20"/><ellipse cx="1517" cy="779" rx="45" ry="30"/><ellipse cx="1562" cy="743" rx="20" ry="24"/><ellipse cx="1562" cy="793" rx="52" ry="36"/><ellipse cx="1613" cy="710" rx="17" ry="20"/><ellipse cx="1613" cy="752" rx="44" ry="30"/><ellipse cx="1633" cy="703" rx="18" ry="21"/><ellipse cx="1633" cy="747" rx="46" ry="31"/><ellipse cx="1675" cy="707" rx="19" ry="22"/><ellipse cx="1675" cy="753" rx="49" ry="33"/><ellipse cx="1737" cy="733" rx="21" ry="24"/><ellipse cx="1737" cy="784" rx="54" ry="37"/><ellipse cx="1759" cy="702" rx="17" ry="20"/><ellipse cx="1759" cy="744" rx="44" ry="30"/><ellipse cx="-34" cy="798" rx="26" ry="31"/><ellipse cx="-34" cy="863" rx="68" ry="46"/><ellipse cx="23" cy="787" rx="29" ry="34"/><ellipse cx="23" cy="858" rx="74" ry="51"/><ellipse cx="90" cy="777" rx="32" ry="38"/><ellipse cx="90" cy="857" rx="84" ry="57"/><ellipse cx="192" cy="785" rx="33" ry="39"/><ellipse cx="192" cy="866" rx="85" ry="58"/><ellipse cx="264" cy="784" rx="34" ry="40"/><ellipse cx="264" cy="868" rx="88" ry="60"/><ellipse cx="350" cy="790" rx="33" ry="39"/><ellipse cx="350" cy="872" rx="87" ry="59"/><ellipse cx="431" cy="769" rx="31" ry="37"/><ellipse cx="431" cy="846" rx="80" ry="55"/><ellipse cx="485" cy="782" rx="35" ry="41"/><ellipse cx="485" cy="868" rx="90" ry="61"/><ellipse cx="590" cy="769" rx="32" ry="38"/><ellipse cx="590" cy="849" rx="84" ry="57"/><ellipse cx="654" cy="792" rx="27" ry="31"/><ellipse cx="654" cy="858" rx="69" ry="47"/><ellipse cx="710" cy="780" rx="30" ry="36"/><ellipse cx="710" cy="855" rx="78" ry="53"/><ellipse cx="789" cy="775" rx="31" ry="37"/><ellipse cx="789" cy="852" rx="81" ry="55"/><ellipse cx="856" cy="751" rx="29" ry="34"/><ellipse cx="856" cy="821" rx="74" ry="51"/><ellipse cx="924" cy="758" rx="34" ry="40"/><ellipse cx="924" cy="842" rx="88" ry="60"/><ellipse cx="1009" cy="795" rx="29" ry="34"/><ellipse cx="1009" cy="866" rx="75" ry="51"/><ellipse cx="1071" cy="772" rx="33" ry="39"/><ellipse cx="1071" cy="853" rx="85" ry="58"/><ellipse cx="1175" cy="769" rx="31" ry="37"/><ellipse cx="1175" cy="846" rx="80" ry="55"/><ellipse cx="1215" cy="775" rx="33" ry="39"/><ellipse cx="1215" cy="857" rx="86" ry="59"/><ellipse cx="1314" cy="798" rx="28" ry="33"/><ellipse cx="1314" cy="868" rx="74" ry="50"/><ellipse cx="1360" cy="764" rx="28" ry="33"/><ellipse cx="1360" cy="833" rx="72" ry="49"/><ellipse cx="1425" cy="775" rx="29" ry="34"/><ellipse cx="1425" cy="846" rx="74" ry="51"/><ellipse cx="1510" cy="773" rx="27" ry="31"/><ellipse cx="1510" cy="838" rx="69" ry="47"/><ellipse cx="1553" cy="752" rx="32" ry="38"/><ellipse cx="1553" cy="832" rx="83" ry="57"/><ellipse cx="1608" cy="790" rx="26" ry="31"/><ellipse cx="1608" cy="854" rx="68" ry="46"/><ellipse cx="1662" cy="751" rx="33" ry="39"/><ellipse cx="1662" cy="833" rx="86" ry="59"/><ellipse cx="1716" cy="752" rx="31" ry="37"/><ellipse cx="1716" cy="830" rx="81" ry="56"/><ellipse cx="1798" cy="783" rx="33" ry="39"/><ellipse cx="1798" cy="864" rx="85" ry="58"/><ellipse cx="1884" cy="760" rx="30" ry="35"/><ellipse cx="1884" cy="834" rx="78" ry="53"/><ellipse cx="1921" cy="774" rx="32" ry="38"/><ellipse cx="1921" cy="853" rx="83" ry="57"/><ellipse cx="1989" cy="767" rx="32" ry="38"/><ellipse cx="1989" cy="846" rx="83" ry="57"/><ellipse cx="2070" cy="788" rx="29" ry="35"/><ellipse cx="2070" cy="860" rx="76" ry="52"/><ellipse cx="-28" cy="844" rx="52" ry="61"/><ellipse cx="-28" cy="973" rx="135" ry="92"/><ellipse cx="60" cy="863" rx="48" ry="57"/><ellipse cx="60" cy="981" rx="124" ry="85"/><ellipse cx="176" cy="868" rx="51" ry="61"/><ellipse cx="176" cy="996" rx="133" ry="91"/><ellipse cx="305" cy="863" rx="48" ry="57"/><ellipse cx="305" cy="983" rx="125" ry="85"/><ellipse cx="387" cy="881" rx="48" ry="57"/><ellipse cx="387" cy="1000" rx="125" ry="85"/><ellipse cx="476" cy="885" rx="53" ry="62"/><ellipse cx="476" cy="1015" rx="137" ry="93"/><ellipse cx="605" cy="880" rx="44" ry="52"/><ellipse cx="605" cy="988" rx="114" ry="78"/><ellipse cx="717" cy="857" rx="41" ry="48"/><ellipse cx="717" cy="958" rx="106" ry="72"/><ellipse cx="790" cy="878" rx="46" ry="54"/><ellipse cx="790" cy="993" rx="120" ry="82"/><ellipse cx="878" cy="843" rx="50" ry="59"/><ellipse cx="878" cy="968" rx="130" ry="89"/><ellipse cx="955" cy="879" rx="42" ry="49"/><ellipse cx="955" cy="982" rx="108" ry="73"/><ellipse cx="1036" cy="876" rx="51" ry="60"/><ellipse cx="1036" cy="1002" rx="132" ry="90"/><ellipse cx="1156" cy="865" rx="52" ry="62"/><ellipse cx="1156" cy="994" rx="136" ry="92"/><ellipse cx="1226" cy="866" rx="44" ry="51"/><ellipse cx="1226" cy="974" rx="113" ry="77"/><ellipse cx="1335" cy="866" rx="51" ry="60"/><ellipse cx="1335" cy="992" rx="132" ry="90"/><ellipse cx="1429" cy="859" rx="51" ry="60"/><ellipse cx="1429" cy="985" rx="132" ry="90"/><ellipse cx="1540" cy="883" rx="53" ry="62"/><ellipse cx="1540" cy="1013" rx="136" ry="93"/><ellipse cx="1656" cy="850" rx="47" ry="55"/><ellipse cx="1656" cy="966" rx="121" ry="83"/><ellipse cx="1753" cy="841" rx="53" ry="62"/><ellipse cx="1753" cy="971" rx="136" ry="93"/><ellipse cx="1852" cy="880" rx="47" ry="56"/><ellipse cx="1852" cy="997" rx="122" ry="83"/><ellipse cx="1956" cy="843" rx="47" ry="55"/><ellipse cx="1956" cy="959" rx="121" ry="83"/><ellipse cx="2056" cy="886" rx="43" ry="51"/><ellipse cx="2056" cy="993" rx="112" ry="76"/><ellipse cx="-51" cy="982" rx="70" ry="82"/><ellipse cx="-51" cy="1155" rx="181" ry="124"/><ellipse cx="110" cy="976" rx="59" ry="69"/><ellipse cx="110" cy="1121" rx="152" ry="103"/><ellipse cx="245" cy="966" rx="69" ry="82"/><ellipse cx="245" cy="1138" rx="180" ry="122"/><ellipse cx="343" cy="971" rx="68" ry="80"/><ellipse cx="343" cy="1139" rx="175" ry="119"/><ellipse cx="474" cy="991" rx="57" ry="67"/><ellipse cx="474" cy="1132" rx="148" ry="101"/><ellipse cx="590" cy="986" rx="60" ry="70"/><ellipse cx="590" cy="1133" rx="154" ry="105"/><ellipse cx="711" cy="982" rx="62" ry="73"/><ellipse cx="711" cy="1135" rx="160" ry="109"/><ellipse cx="831" cy="968" rx="59" ry="69"/><ellipse cx="831" cy="1113" rx="152" ry="104"/><ellipse cx="957" cy="986" rx="71" ry="83"/><ellipse cx="957" cy="1161" rx="183" ry="125"/><ellipse cx="1105" cy="972" rx="69" ry="81"/><ellipse cx="1105" cy="1141" rx="178" ry="121"/><ellipse cx="1252" cy="976" rx="61" ry="72"/><ellipse cx="1252" cy="1126" rx="158" ry="107"/><ellipse cx="1368" cy="1010" rx="71" ry="84"/><ellipse cx="1368" cy="1186" rx="185" ry="126"/><ellipse cx="1495" cy="996" rx="60" ry="70"/><ellipse cx="1495" cy="1144" rx="155" ry="106"/><ellipse cx="1618" cy="981" rx="70" ry="82"/><ellipse cx="1618" cy="1153" rx="180" ry="123"/><ellipse cx="1729" cy="994" rx="55" ry="65"/><ellipse cx="1729" cy="1131" rx="143" ry="98"/><ellipse cx="1838" cy="1006" rx="73" ry="86"/><ellipse cx="1838" cy="1186" rx="189" ry="129"/><ellipse cx="1962" cy="998" rx="64" ry="76"/><ellipse cx="1962" cy="1157" rx="166" ry="113"/><ellipse cx="-49" cy="1094" rx="73" ry="86"/><ellipse cx="-49" cy="1274" rx="189" ry="129"/><ellipse cx="87" cy="1116" rx="84" ry="98"/><ellipse cx="87" cy="1323" rx="217" ry="148"/><ellipse cx="225" cy="1100" rx="90" ry="106"/><ellipse cx="225" cy="1323" rx="233" ry="159"/><ellipse cx="441" cy="1095" rx="72" ry="85"/><ellipse cx="441" cy="1272" rx="186" ry="127"/><ellipse cx="587" cy="1128" rx="78" ry="92"/><ellipse cx="587" cy="1321" rx="202" ry="138"/><ellipse cx="741" cy="1112" rx="84" ry="99"/><ellipse cx="741" cy="1320" rx="219" ry="149"/><ellipse cx="891" cy="1132" rx="75" ry="88"/><ellipse cx="891" cy="1317" rx="193" ry="132"/><ellipse cx="1037" cy="1110" rx="75" ry="88"/><ellipse cx="1037" cy="1295" rx="194" ry="132"/><ellipse cx="1165" cy="1091" rx="91" ry="107"/><ellipse cx="1165" cy="1316" rx="236" ry="161"/><ellipse cx="1359" cy="1133" rx="85" ry="100"/><ellipse cx="1359" cy="1343" rx="220" ry="150"/><ellipse cx="1517" cy="1115" rx="93" ry="110"/><ellipse cx="1517" cy="1346" rx="242" ry="165"/><ellipse cx="1698" cy="1136" rx="88" ry="103"/><ellipse cx="1698" cy="1353" rx="227" ry="155"/><ellipse cx="1896" cy="1110" rx="91" ry="108"/><ellipse cx="1896" cy="1336" rx="237" ry="161"/></g>
<g filter="url(#b1)"><path d="M426 712 A16 20 0 0 1 458 712 A16 17 0 0 0 426 712Z" fill="#2c4680" opacity="0.45"/><path d="M647 720 A21 25 0 0 1 687 720 A21 23 0 0 0 647 720Z" fill="#2c4680" opacity="0.45"/><path d="M728 723 A22 26 0 0 1 770 723 A22 24 0 0 0 728 723Z" fill="#2c4680" opacity="0.45"/><path d="M849 712 A17 20 0 0 1 882 712 A17 18 0 0 0 849 712Z" fill="#2c4680" opacity="0.45"/><path d="M898 709 A19 23 0 0 1 936 709 A19 21 0 0 0 898 709Z" fill="#2c4680" opacity="0.45"/><path d="M925 737 A17 21 0 0 1 958 737 A17 18 0 0 0 925 737Z" fill="#2c4680" opacity="0.45"/><path d="M1050 720 A21 25 0 0 1 1091 720 A21 23 0 0 0 1050 720Z" fill="#2c4680" opacity="0.45"/><path d="M1156 716 A18 22 0 0 1 1190 716 A18 19 0 0 0 1156 716Z" fill="#2c4680" opacity="0.45"/><path d="M1216 723 A21 26 0 0 1 1258 723 A21 24 0 0 0 1216 723Z" fill="#2c4680" opacity="0.45"/><path d="M1274 743 A17 21 0 0 1 1308 743 A17 19 0 0 0 1274 743Z" fill="#2c4680" opacity="0.45"/><path d="M1347 747 A17 21 0 0 1 1381 747 A17 19 0 0 0 1347 747Z" fill="#2c4680" opacity="0.45"/><path d="M1400 730 A19 23 0 0 1 1436 730 A19 20 0 0 0 1400 730Z" fill="#2c4680" opacity="0.45"/><path d="M1501 736 A17 20 0 0 1 1533 736 A17 18 0 0 0 1501 736Z" fill="#2c4680" opacity="0.45"/><path d="M1657 707 A18 22 0 0 1 1693 707 A18 20 0 0 0 1657 707Z" fill="#2c4680" opacity="0.45"/><path d="M60 777 A31 38 0 0 1 121 777 A31 35 0 0 0 60 777Z" fill="#2c4680" opacity="0.45"/><path d="M161 785 A32 39 0 0 1 223 785 A32 36 0 0 0 161 785Z" fill="#2c4680" opacity="0.45"/><path d="M232 784 A33 40 0 0 1 296 784 A33 37 0 0 0 232 784Z" fill="#2c4680" opacity="0.45"/><path d="M318 790 A32 39 0 0 1 382 790 A32 37 0 0 0 318 790Z" fill="#2c4680" opacity="0.45"/><path d="M401 769 A30 37 0 0 1 460 769 A30 34 0 0 0 401 769Z" fill="#2c4680" opacity="0.45"/><path d="M453 782 A33 41 0 0 1 518 782 A33 38 0 0 0 453 782Z" fill="#2c4680" opacity="0.45"/><path d="M629 792 A26 31 0 0 1 680 792 A26 29 0 0 0 629 792Z" fill="#2c4680" opacity="0.45"/><path d="M759 775 A30 37 0 0 1 818 775 A30 34 0 0 0 759 775Z" fill="#2c4680" opacity="0.45"/><path d="M830 751 A28 34 0 0 1 883 751 A28 31 0 0 0 830 751Z" fill="#2c4680" opacity="0.45"/><path d="M1040 772 A32 39 0 0 1 1102 772 A32 36 0 0 0 1040 772Z" fill="#2c4680" opacity="0.45"/><path d="M1288 798 A27 33 0 0 1 1341 798 A27 31 0 0 0 1288 798Z" fill="#2c4680" opacity="0.45"/><path d="M1398 775 A28 34 0 0 1 1452 775 A28 31 0 0 0 1398 775Z" fill="#2c4680" opacity="0.45"/><path d="M1584 790 A25 31 0 0 1 1633 790 A25 28 0 0 0 1584 790Z" fill="#2c4680" opacity="0.45"/><path d="M1686 752 A30 37 0 0 1 1746 752 A30 34 0 0 0 1686 752Z" fill="#2c4680" opacity="0.45"/><path d="M1856 760 A29 35 0 0 1 1913 760 A29 33 0 0 0 1856 760Z" fill="#2c4680" opacity="0.45"/><path d="M1891 774 A31 38 0 0 1 1951 774 A31 35 0 0 0 1891 774Z" fill="#2c4680" opacity="0.45"/><path d="M1959 767 A31 38 0 0 1 2019 767 A31 35 0 0 0 1959 767Z" fill="#2c4680" opacity="0.45"/><path d="M-77 844 A50 61 0 0 1 21 844 A50 57 0 0 0 -77 844Z" fill="#2c4680" opacity="0.28"/><path d="M342 881 A47 57 0 0 1 432 881 A47 53 0 0 0 342 881Z" fill="#2c4680" opacity="0.28"/><path d="M426 885 A51 62 0 0 1 525 885 A51 58 0 0 0 426 885Z" fill="#2c4680" opacity="0.28"/><path d="M747 878 A45 54 0 0 1 834 878 A45 51 0 0 0 747 878Z" fill="#2c4680" opacity="0.28"/><path d="M1107 865 A51 62 0 0 1 1206 865 A51 57 0 0 0 1107 865Z" fill="#2c4680" opacity="0.28"/><path d="M1287 866 A49 60 0 0 1 1383 866 A49 56 0 0 0 1287 866Z" fill="#2c4680" opacity="0.28"/><path d="M1381 859 A49 60 0 0 1 1477 859 A49 56 0 0 0 1381 859Z" fill="#2c4680" opacity="0.28"/><path d="M1703 841 A51 62 0 0 1 1802 841 A51 58 0 0 0 1703 841Z" fill="#2c4680" opacity="0.28"/><path d="M2015 886 A42 51 0 0 1 2097 886 A42 47 0 0 0 2015 886Z" fill="#2c4680" opacity="0.28"/><path d="M-117 982 A68 82 0 0 1 15 982 A68 77 0 0 0 -117 982Z" fill="#2c4680" opacity="0.28"/><path d="M55 976 A57 69 0 0 1 165 976 A57 64 0 0 0 55 976Z" fill="#2c4680" opacity="0.28"/><path d="M180 966 A67 82 0 0 1 311 966 A67 76 0 0 0 180 966Z" fill="#2c4680" opacity="0.28"/><path d="M279 971 A65 80 0 0 1 406 971 A65 74 0 0 0 279 971Z" fill="#2c4680" opacity="0.28"/><path d="M653 982 A60 73 0 0 1 769 982 A60 68 0 0 0 653 982Z" fill="#2c4680" opacity="0.28"/><path d="M776 968 A57 69 0 0 1 887 968 A57 64 0 0 0 776 968Z" fill="#2c4680" opacity="0.28"/><path d="M1301 1010 A69 84 0 0 1 1435 1010 A69 78 0 0 0 1301 1010Z" fill="#2c4680" opacity="0.28"/><path d="M1901 998 A62 76 0 0 1 2022 998 A62 70 0 0 0 1901 998Z" fill="#2c4680" opacity="0.28"/><path d="M9 1116 A81 98 0 0 1 166 1116 A81 92 0 0 0 9 1116Z" fill="#2c4680" opacity="0.28"/><path d="M514 1128 A75 92 0 0 1 661 1128 A75 85 0 0 0 514 1128Z" fill="#2c4680" opacity="0.28"/><path d="M1279 1133 A82 100 0 0 1 1439 1133 A82 93 0 0 0 1279 1133Z" fill="#2c4680" opacity="0.28"/><path d="M1616 1136 A85 103 0 0 1 1781 1136 A85 96 0 0 0 1616 1136Z" fill="#2c4680" opacity="0.28"/></g>
</g></svg>
<div class="a" style="left:37px;top:963px;width:775px;height:121px;border-radius:60px;background:#212226"></div>
<svg class="a" style="left:102px;top:1001px" width="56" height="46" viewBox="0 0 56 46"><g fill="none" stroke="#f4f4f5" stroke-width="4.4" stroke-linecap="round" stroke-linejoin="round"><path d="M5.4 11.9 L5.4 8 Q5.4 4 9.4 4 L46.7 4 Q50.7 4 50.7 8 L50.7 36.8 Q50.7 40.8 46.7 40.8 L34 40.8"/><path d="M5.2 20.2 A22.8 22.8 0 0 1 26 41"/><path d="M5.2 29.3 A13.7 13.7 0 0 1 17 41"/></g><path d="M3.2 36 A7 7 0 0 1 10.2 43 L3.2 43Z" fill="#f4f4f5"/></svg>
<div class="a txt" style="left:189px;top:1005px;font-size:37px;line-height:37px;color:#f4f4f5">Lecture sur un téléviseur de salon</div>
</div>
<div class="a" style="left:2648px;top:880px;width:287px;height:165px;border-radius:14px;background:#858689"></div>
<div class="a" style="left:2648px;top:1063px;width:287px;height:165px;border-radius:14px;background:#858689"></div>
<div class="a" style="left:2648px;top:1242px;width:287px;height:166px;border-radius:14px;background:#858689"></div>
<div class="a" style="left:2648px;top:1422px;width:287px;height:169px;border-radius:14px;background:#858689"></div>
<div class="a" style="left:2648px;top:1601px;width:287px;height:165px;border-radius:14px;background:#858689"></div>
<div class="a" style="left:2648px;top:1776px;width:287px;height:104px;border-radius:14px 14px 0 0;background:#858689"></div>
<div class="a ln" style="top:1066px;width:287px;height:31px"></div>
<div class="a ln" style="top:1104px;width:343px;height:31px"></div>
<div class="a ln" style="top:1142px;width:153px;height:26px"></div>
<div class="a ln" style="top:1173px;width:229px;height:25px"></div>
<div class="a ln" style="top:1242px;width:287px;height:31px"></div>
<div class="a ln" style="top:1280px;width:343px;height:32px"></div>
<div class="a ln" style="top:1322px;width:153px;height:24px"></div>
<div class="a ln" style="top:1355px;width:251px;height:25px"></div>
<div class="a ln" style="top:1432px;width:287px;height:32px"></div>
<div class="a ln" style="top:1469px;width:208px;height:26px"></div>
<div class="a ln" style="top:1606px;width:356px;height:32px"></div>
<div class="a ln" style="top:1644px;width:308px;height:31px"></div>
<div class="a ln" style="top:1683px;width:153px;height:25px"></div>
<div class="a ln" style="top:1713px;width:335px;height:26px"></div>
<div class="a ln" style="top:1776px;width:335px;height:33px"></div>
<div class="a ln" style="top:1814px;width:308px;height:32px"></div>
<div class="a ln" style="top:1853px;width:153px;height:24px"></div>
<div class="a txt" style="left:617px;top:1794px;font-size:41px;line-height:41px;color:#303135">Concert en direct – Palm Springs</div>
<div id="popup" class="a">
 <div class="a" style="left:0;top:0;width:801px;height:265px;background:#060912"></div>
 <div class="a" style="left:41px;top:39px;width:57px;height:16px;border-radius:8px;background:#c6cbf6"></div>
 <div class="a" style="left:41px;top:88px;width:256px;height:16px;border-radius:8px;background:#c6cbf6"></div>
 <div class="a" style="left:41px;top:115px;width:133px;height:17px;border-radius:8.5px;background:#c6cbf6"></div>
 <svg class="a" style="left:0;top:170px" width="400" height="70" viewBox="0 0 400 70"><g fill="#c6cbf6" stroke="#c6cbf6" stroke-width="3" stroke-linejoin="round"><path d="M50.7 33.5 L64.5 23.5 L64.5 43.5Z M70.5 33.5 L85.3 23.5 L85.3 43.5Z"/><path d="M139.1 20.9 L160.5 34.6 L139.1 46.3Z"/><path d="M209 23.5 L223.2 33.5 L209 43.5Z M229.5 23.5 L243.7 33.5 L229.5 43.5Z"/></g><rect x="276.2" y="8.8" width="3.8" height="50.2" rx="1.9" fill="#c6cbf6"/><g fill="none" stroke="#c6cbf6" stroke-width="3.7"><path d="M327.7 14.6 L351 14.6 L351 32.6"/><path d="M309.8 32.6 L309.8 46 L329.7 46"/><path d="M308.5 13.5 L321 26 M308 27.6 L323 27.6 M321.4 12.8 L321.4 29.4"/></g><rect x="333.6" y="35.9" width="19.2" height="12.5" fill="#c6cbf6"/></svg>
 <svg class="a" style="left:435px;top:0;filter:brightness(1.5) contrast(1.2) saturate(.95)" width="366" height="265" viewBox="352 76 1283 929" preserveAspectRatio="none"><use href="#concert"/></svg>
 <div class="a" style="left:0;top:368px;width:801px;height:1.5px;background:#8492c0"></div>
 <svg class="a" style="left:46px;top:298px" width="46" height="38" viewBox="0 0 46 38"><rect x="1.6" y="1.6" width="41" height="32" rx="3" fill="none" stroke="#000" stroke-width="3.2"/><rect x="10.4" y="16.4" width="3.6" height="3.2" fill="#000"/><rect x="17.4" y="16.4" width="19.6" height="3.2" fill="#000"/><rect x="10.4" y="22.9" width="19.9" height="3.5" fill="#000"/><rect x="33.9" y="22.9" width="3.1" height="3.5" fill="#000"/></svg>
 <div class="a txt" style="left:124px;top:300px;font-size:35px;line-height:35px;color:#1e1f22">Sous-titres instantanés</div>
 <svg class="a" style="left:705px;top:303px" width="54" height="30" viewBox="0 0 54 30"><rect x="3.75" y="3" width="45.2" height="22.9" rx="11.45" fill="none" stroke="#000" stroke-width="4.1"/><circle cx="14.8" cy="14.3" r="6.8" fill="#000"/></svg>
 <svg class="a" style="left:46px;top:396px" width="48" height="48" viewBox="0 0 48 48"><path d="M19.67 9.85 L19.95 4.11 L28.05 4.11 L28.33 9.85 L34.09 13.18 L39.20 10.55 L43.25 17.56 L38.42 20.67 L38.42 27.33 L43.25 30.44 L39.20 37.45 L34.09 34.82 L28.33 38.15 L28.05 43.89 L19.95 43.89 L19.67 38.15 L13.91 34.82 L8.80 37.45 L4.75 30.44 L9.58 27.33 L9.58 20.67 L4.75 17.56 L8.80 10.55 L13.91 13.18Z" fill="none" stroke="#000" stroke-width="3" stroke-linejoin="miter"/><circle cx="24" cy="24" r="7" fill="#000"/></svg>
 <div class="a txt" style="left:124px;top:404px;font-size:35px;line-height:35px;color:#1e1f22">Paramètres des sous-titres</div>
 <svg class="a" style="left:724px;top:398px" width="46" height="46" viewBox="0 0 46 46"><path d="M20.8 4.75 L3.75 4.75 L3.75 41.15 L40.75 41.15 L40.75 24 M24.3 4.75 L40.75 4.75 L40.75 20.6" fill="none" stroke="#000" stroke-width="3.5" stroke-linejoin="round"/><path d="M15.5 29.4 L40 4.9" stroke="#000" stroke-width="3.5"/></svg>
</div>
</body></html>
